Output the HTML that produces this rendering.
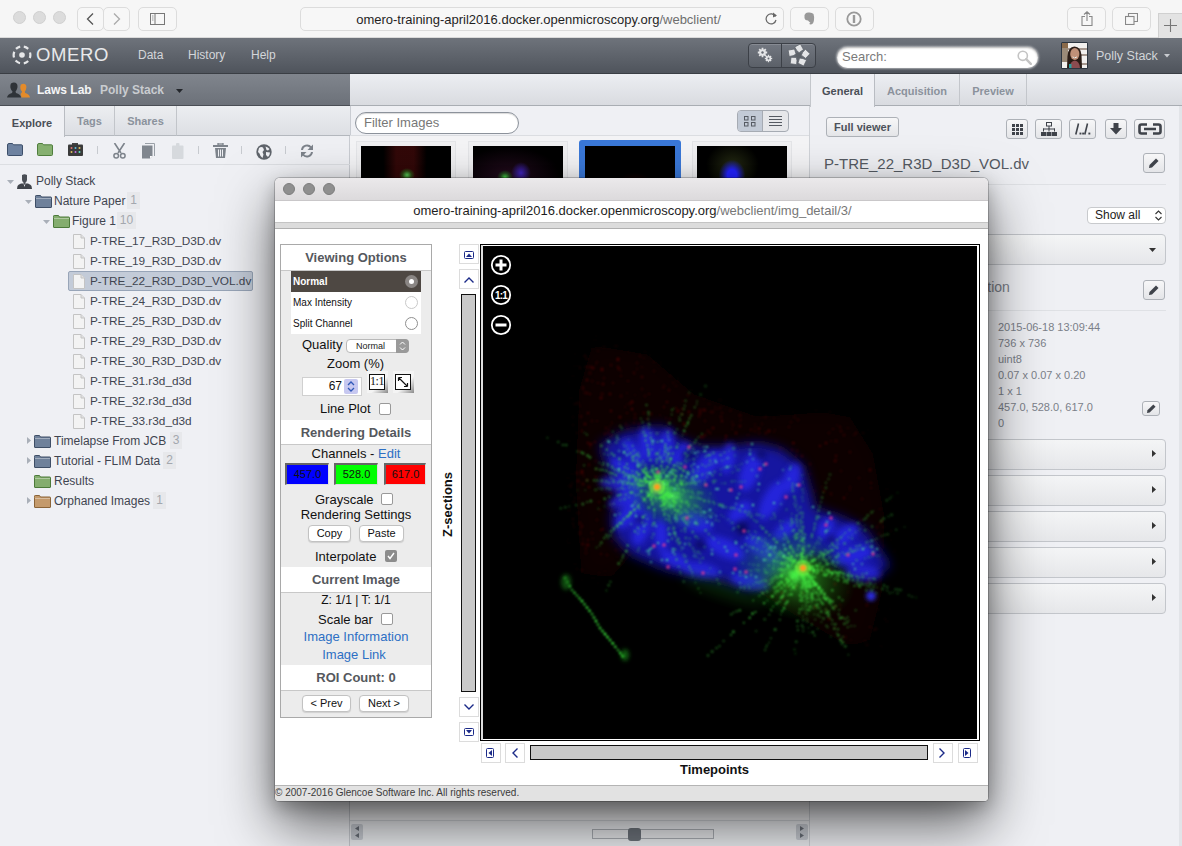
<!DOCTYPE html>
<html><head><meta charset="utf-8">
<style>
*{box-sizing:border-box;margin:0;padding:0}
html,body{width:1182px;height:846px;overflow:hidden;background:#eff0f4;font-family:"Liberation Sans",sans-serif;position:relative}
.a{position:absolute}
/* safari chrome */
#safari{left:0;top:0;width:1182px;height:38px;background:#f6f6f6;border-bottom:1px solid #dadada}
.tl{width:13px;height:13px;border-radius:50%;background:#dcdcdc;border:1px solid #d0d0d0}
.sbtn{border:1px solid #dcdcdc;border-radius:5px;background:#f7f7f7;height:24px}
/* omero header */
#hdr{left:0;top:38px;width:1182px;height:36px;background:linear-gradient(#6e737b,#4f545c);border-bottom:1px solid #3a3e44}
.nav{color:#d4d6da;font-size:12px;top:48px;line-height:15px}
/* lab bar */
#lab{left:0;top:74px;width:350px;height:32px;background:linear-gradient(#80858d,#6c7179);border-bottom:1px solid #4a4e55}
#cenhdr{left:350px;top:74px;width:460px;height:32px;background:linear-gradient(#eceef2,#d9dbe0);border-bottom:1px solid #a9adb3}
#righthdr{left:810px;top:74px;width:372px;height:32px;background:linear-gradient(#eceef2,#d9dbe0);border-bottom:1px solid #a9adb3}
/* left panel */
#left{left:0;top:106px;width:350px;height:741px;background:#eff0f4;border-right:1px solid #c9ccd2}
.ltab{top:106px;height:30px;font-size:11px;font-weight:bold;color:#8b929c;text-align:center;line-height:30px;background:linear-gradient(#eceef1,#dcdee3);border-right:1px solid #c2c5ca;border-bottom:1px solid #b5b9bf}
.tree{font-size:12.5px;color:#3a3f47;white-space:nowrap}
.cnt{color:#a0a4aa;background:#e6e7ea;padding:0 1px}
.file{width:12px;height:15px;background:#f7f7f7;border:1px solid #b8b8b8}
.fold{width:18px;height:13px;border-radius:1px}
</style></head><body>

<!-- SAFARI -->
<div id="safari" class="a"></div>
<div class="a tl" style="left:13px;top:11px"></div>
<div class="a tl" style="left:33px;top:11px"></div>
<div class="a tl" style="left:53px;top:11px"></div>
<div class="a sbtn" style="left:77px;top:7px;width:27px"></div>
<div class="a sbtn" style="left:103px;top:7px;width:27px"></div>
<svg class="a" style="left:86px;top:13px" width="8" height="12" viewBox="0 0 8 12"><path d="M7 0.5 L1.5 6 L7 11.5" fill="none" stroke="#555" stroke-width="1.3"/></svg>
<svg class="a" style="left:113px;top:13px" width="8" height="12" viewBox="0 0 8 12"><path d="M1 0.5 L6.5 6 L1 11.5" fill="none" stroke="#aaa" stroke-width="1.3"/></svg>
<div class="a sbtn" style="left:138px;top:7px;width:39px"></div>
<svg class="a" style="left:150px;top:13px" width="15" height="12" viewBox="0 0 15 12"><rect x="0.5" y="0.5" width="14" height="11" fill="none" stroke="#777" stroke-width="1"/><path d="M5 0.5 V11.5" stroke="#777"/><path d="M2 3 H3.5 M2 5 H3.5 M2 7 H3.5" stroke="#999"/></svg>
<div class="a sbtn" style="left:300px;top:7px;width:484px;text-align:center;font-size:13px;line-height:23px;color:#1f1f1f;padding-right:7px">omero-training-april2016.docker.openmicroscopy.org<span style="color:#6e6e6e">/webclient/</span></div>
<svg class="a" style="left:765px;top:12px" width="13" height="13" viewBox="0 0 13 13"><path d="M10.5 4.5 A5 5 0 1 0 11 8" fill="none" stroke="#666" stroke-width="1.2"/><path d="M8 0.5 L12 3.5 L8 5.5 Z" fill="#666"/></svg>
<div class="a sbtn" style="left:790px;top:7px;width:39px"></div>
<svg class="a" style="left:804px;top:12px" width="11" height="13" viewBox="0 0 11 13"><path d="M2 1 L4 0.5 Q8 0 9.5 2 Q10.5 5 10 8 Q9.5 12 7 12.5 Q5 12.5 5.5 11 L6.5 10.5 Q5 10 4 8.5 Q1 8.5 0.5 6 L0.5 3 Z" fill="#999"/></svg>
<div class="a sbtn" style="left:835px;top:7px;width:39px"></div>
<svg class="a" style="left:846px;top:11px" width="16" height="16" viewBox="0 0 16 16"><circle cx="8" cy="8" r="6.7" fill="none" stroke="#999" stroke-width="1.8"/><rect x="6.8" y="4" width="2.4" height="8" fill="#999"/></svg>
<div class="a sbtn" style="left:1067px;top:7px;width:39px"></div>
<svg class="a" style="left:1081px;top:11px" width="12" height="15" viewBox="0 0 12 15"><path d="M4 5.5 H1 V14.5 H11 V5.5 H8 M6 10 V1 M3 3.5 L6 0.8 L9 3.5" fill="none" stroke="#888" stroke-width="1.1"/></svg>
<div class="a sbtn" style="left:1112px;top:7px;width:39px"></div>
<svg class="a" style="left:1125px;top:13px" width="13" height="12" viewBox="0 0 13 12"><rect x="0.5" y="3.5" width="8.5" height="8" fill="none" stroke="#888" stroke-width="1.1"/><path d="M3.5 3.5 V0.5 H12.5 V8.5 H9" fill="none" stroke="#888" stroke-width="1.1"/></svg>
<div class="a" style="left:1158px;top:13px;width:24px;height:25px;background:#e3e3e3;border-left:1px solid #d0d0d0;border-top:1px solid #d0d0d0"></div>
<svg class="a" style="left:1164px;top:19px" width="13" height="13" viewBox="0 0 13 13"><path d="M6.5 0 V13 M0 6.5 H13" stroke="#777" stroke-width="1.1"/></svg>

<!-- OMERO HEADER -->
<div id="hdr" class="a"></div>
<svg class="a" style="left:12px;top:45px" width="20" height="20" viewBox="0 0 20 20"><circle cx="10" cy="10" r="2.8" fill="#e6e7e9"/><g fill="none" stroke="#e6e7e9" stroke-width="2.2"><path d="M8.2 1.7 A8.4 8.4 0 0 0 4 3.9"/><path d="M2.3 6.8 A8.4 8.4 0 0 0 2 12.5"/><path d="M3.6 15.6 A8.4 8.4 0 0 0 8 18.2"/><path d="M11.8 18.3 A8.4 8.4 0 0 0 16.2 16"/><path d="M17.8 13 A8.4 8.4 0 0 0 18 7.5"/><path d="M16.2 3.9 A8.4 8.4 0 0 0 11.8 1.7"/></g></svg>
<div class="a" style="left:36px;top:45px;font-size:18.5px;color:#e8e9eb;letter-spacing:0.6px;line-height:20px">OMERO</div>
<div class="a nav" style="left:138px">Data</div>
<div class="a nav" style="left:188px">History</div>
<div class="a nav" style="left:251px">Help</div>
<div class="a" style="left:748px;top:43px;width:68px;height:25px;border:1px solid #3c4047;border-radius:4px;background:linear-gradient(#727780,#5b6068);box-shadow:inset 0 1px 0 rgba(255,255,255,0.15)"></div>
<div class="a" style="left:781px;top:44px;width:1px;height:23px;background:#3c4047"></div>
<svg class="a" style="left:757px;top:47px" width="17" height="17" viewBox="0 0 17 17"><g fill="#e4e5e7"><circle cx="5.5" cy="5.5" r="3.3"/><circle cx="11.5" cy="11.5" r="2.6"/></g><g stroke="#e4e5e7" stroke-width="1.8"><path d="M5.5 0.8 V10.2 M0.8 5.5 H10.2 M2.2 2.2 L8.8 8.8 M8.8 2.2 L2.2 8.8"/><path d="M11.5 7.8 V15.2 M7.8 11.5 H15.2 M8.9 8.9 L14.1 14.1 M14.1 8.9 L8.9 14.1" stroke-width="1.4"/></g><circle cx="5.5" cy="5.5" r="1.2" fill="#666b73"/><circle cx="11.5" cy="11.5" r="1" fill="#666b73"/></svg>
<svg class="a" style="left:786px;top:44px" width="25" height="23" viewBox="0 0 25 23"><circle cx="12.5" cy="11.5" r="3" fill="#5d6269"/><g fill="#e4e5e7" stroke="#5d6269" stroke-width="0.8"><polygon points="14.4,-0.1 17.5,5.6 13.1,8.7 10.7,6.5 8.7,3.0"/><polygon points="24.1,9.7 19.6,14.4 15.3,11.2 16.7,8.2 19.4,5.2"/><polygon points="17.7,22.0 11.9,19.2 13.6,14.1 16.9,14.5 20.6,16.1"/><polygon points="4.2,19.7 5.0,13.3 10.4,13.4 11.0,16.6 10.6,20.6"/><polygon points="2.1,6.1 8.5,5.0 10.1,10.1 7.2,11.7 3.2,12.5"/></g></svg>
<div class="a" style="left:837px;top:47px;width:201px;height:21px;border-radius:11px;background:#fff;box-shadow:0 0 2px 1px rgba(255,255,255,0.5),inset 0 1px 2px rgba(0,0,0,0.3);font-size:13px;color:#7a7a7a;line-height:20px;padding-left:5px">Search:</div>
<svg class="a" style="left:1017px;top:50px" width="15" height="15" viewBox="0 0 15 15"><circle cx="5.8" cy="5.8" r="4.6" fill="none" stroke="#c4c4c4" stroke-width="1.6"/><path d="M9.2 9.2 L13.8 13.8" stroke="#c4c4c4" stroke-width="2.4" stroke-linecap="round"/></svg>
<svg class="a" style="left:1061px;top:42px" width="27" height="27" viewBox="0 0 27 27"><rect x="0" y="0" width="27" height="27" rx="1.5" fill="#2c3540"/><rect x="1" y="1" width="25" height="25" fill="#f2f0ee"/><rect x="1" y="1" width="6" height="5" fill="#8a6a4a"/><rect x="1" y="6" width="6" height="14" fill="#9a8a78"/><path d="M7 7 H26 M20 13 H26 M20 22 H26" stroke="#5a4030" stroke-width="1"/><path d="M6 26 L6.5 14 Q7 5 13.5 4.5 Q20 5 20.5 13 L21 26 Z" fill="#2a1c16"/><ellipse cx="13.8" cy="12" rx="4.6" ry="6" fill="#c09078"/><path d="M11.5 15 Q13.8 16.5 16 15" stroke="#f4eee8" stroke-width="1"/><path d="M8.5 26 Q9 19 13.8 18.5 Q18.5 19 19 26 Z" fill="#8a4c50"/><rect x="8" y="22" width="2.5" height="4" fill="#2aa0a0"/></svg>
<div class="a" style="left:1096px;top:48px;font-size:12.5px;color:#d2d5d9;line-height:16px">Polly Stack</div>
<svg class="a" style="left:1164px;top:54px" width="6" height="4" viewBox="0 0 6 4"><path d="M0 0 H6 L3 3.5 Z" fill="#c8cbd0"/></svg>

<!-- LAB BAR -->
<div id="lab" class="a"></div>
<svg class="a" style="left:7px;top:82px" width="24" height="16" viewBox="0 0 24 16"><path d="M4 1.5 Q7.5 -0.5 10 2 Q11 4.5 10 7 Q9 9 8.5 9.5 L9 11 Q13.5 12 14 15.5 L0 15.5 Q0.5 12 5 11 L5.5 9.5 Q4 8 3.5 6 Q3 3 4 1.5 Z" fill="#2f3338"/><path d="M14 2.5 Q17 1 19 3 Q20 5.5 19 7.5 Q18.3 9 17.8 9.5 L18.2 11 Q22.5 12 23 15.5 L14.5 15.5 Q14 12.5 13.5 12 L14.5 11 L15 9.5 Q13.8 8.5 13.4 6.5 Q13 4 14 2.5 Z" fill="#e48b2a"/></svg>
<div class="a" style="left:37px;top:83px;font-size:12px;font-weight:bold;color:#f4f5f6;line-height:15px">Laws Lab</div>
<svg class="a" style="left:176px;top:89px" width="7" height="4" viewBox="0 0 7 4"><path d="M0 0 H7 L3.5 4 Z" fill="#23262b"/></svg>
<div class="a" style="left:100px;top:83px;font-size:12px;font-weight:bold;color:#c9ccd0;line-height:15px">Polly Stack</div>
<div id="cenhdr" class="a"></div>
<div id="righthdr" class="a"></div>
<div class="a" style="left:810px;top:106px;width:372px;height:741px;background:#eff0f4"></div>
<div class="a" style="left:1179px;top:106px;width:3px;height:741px;background:#e2e4e8"></div>
<div class="a" style="left:810px;top:105px;width:372px;height:1px;background:#a9adb3"></div>
<div class="a" style="left:810px;top:74px;width:65px;height:33px;background:#eff0f4;border-left:1px solid #c3c6cb;border-right:1px solid #b9bcc2;font-size:11px;font-weight:bold;color:#4a4f57;text-align:center;line-height:35px">General</div>
<div class="a" style="left:875px;top:74px;width:85px;height:32px;border-right:1px solid #c3c6cb;font-size:11px;font-weight:bold;color:#8b929c;text-align:center;line-height:35px">Acquisition</div>
<div class="a" style="left:960px;top:74px;width:67px;height:32px;border-right:1px solid #c3c6cb;font-size:11px;font-weight:bold;color:#8b929c;text-align:center;line-height:35px">Preview</div>
<div class="a" style="left:826px;top:117px;width:73px;height:20px;background:linear-gradient(#f7f7f8,#e4e5e8);border:1px solid #adb1b7;border-radius:3px;font-size:11px;font-weight:bold;color:#4d525a;text-align:center;line-height:18px">Full viewer</div>
<div class="a" style="left:1006px;top:119px;width:22px;height:20px;background:linear-gradient(#f7f7f8,#e4e5e8);border:1px solid #adb1b7;border-radius:3px;"></div>
<div class="a" style="left:1035px;top:119px;width:27px;height:20px;background:linear-gradient(#f7f7f8,#e4e5e8);border:1px solid #adb1b7;border-radius:3px;"></div>
<div class="a" style="left:1069px;top:119px;width:27px;height:20px;background:linear-gradient(#f7f7f8,#e4e5e8);border:1px solid #adb1b7;border-radius:3px;"></div>
<div class="a" style="left:1105px;top:119px;width:22px;height:20px;background:linear-gradient(#f7f7f8,#e4e5e8);border:1px solid #adb1b7;border-radius:3px;"></div>
<div class="a" style="left:1134px;top:119px;width:31px;height:20px;background:linear-gradient(#f7f7f8,#e4e5e8);border:1px solid #adb1b7;border-radius:3px;"></div>
<svg class="a" style="left:1012px;top:124px" width="11" height="11" viewBox="0 0 11 11" shape-rendering="crispEdges"><g fill="#3f434a"><rect x="0" y="0" width="3" height="3"/><rect x="0" y="4" width="3" height="3"/><rect x="0" y="8" width="3" height="3"/><rect x="4" y="0" width="3" height="3"/><rect x="4" y="4" width="3" height="3"/><rect x="4" y="8" width="3" height="3"/><rect x="8" y="0" width="3" height="3"/><rect x="8" y="4" width="3" height="3"/><rect x="8" y="8" width="3" height="3"/></g></svg>
<svg class="a" style="left:1041px;top:122px" width="16" height="14" viewBox="0 0 16 14"><g fill="#3f434a"><rect x="5.5" y="0.5" width="5" height="3.5" fill="none" stroke="#3f434a" stroke-width="1"/><rect x="7.5" y="4" width="1" height="3"/><rect x="2" y="6.5" width="12" height="1"/><rect x="2" y="6.5" width="1" height="3"/><rect x="13" y="6.5" width="1" height="3"/><rect x="7.5" y="6.5" width="1" height="3"/><rect x="0" y="10" width="5" height="4"/><rect x="5.5" y="10" width="5" height="4"/><rect x="11" y="10" width="5" height="4"/></g></svg>
<svg class="a" style="left:1075px;top:123px" width="16" height="12" viewBox="0 0 16 12"><g stroke="#3f434a" stroke-width="1.6"><path d="M3.5 0.5 L0.8 11.5"/><path d="M12.5 0.5 L9.8 11.5"/></g><g fill="#3f434a"><rect x="4.5" y="9.6" width="1.9" height="1.9"/><rect x="7.2" y="9.6" width="1.9" height="1.9"/><rect x="13.4" y="9.6" width="1.9" height="1.9"/></g></svg>
<svg class="a" style="left:1110px;top:123px" width="12" height="12" viewBox="0 0 12 12"><path d="M3.5 0 H8.5 V5 H12 L6 11.5 L0 5 H3.5 Z" fill="#3f434a"/></svg>
<svg class="a" style="left:1138px;top:123px" width="24" height="12" viewBox="0 0 24 12"><path d="M9 1.5 H3.5 Q1.5 1.5 1.5 3.5 V8.5 Q1.5 10.5 3.5 10.5 H9 M15 1.5 H20.5 Q22.5 1.5 22.5 3.5 V8.5 Q22.5 10.5 20.5 10.5 H15 M6 6 H18" fill="none" stroke="#3f434a" stroke-width="2.6"/></svg>
<div class="a" style="left:824px;top:155px;font-size:15px;color:#555a62;line-height:18px;white-space:nowrap">P-TRE_22_R3D_D3D_VOL.dv</div>
<div class="a" style="left:1143px;top:153px;width:22px;height:20px;background:linear-gradient(#f7f7f8,#e4e5e8);border:1px solid #adb1b7;border-radius:3px;"></div>
<svg class="a" style="left:1149px;top:158px" width="10" height="10" viewBox="0 0 10 10"><path d="M7 0.5 L9.5 3 L3 9.5 L0 10 L0.5 7 Z" fill="#3f434a"/></svg>
<div class="a" style="left:824px;top:184px;width:342px;height:1px;background:#dfe1e5"></div>
<div class="a" style="left:1087px;top:207px;width:79px;height:17px;background:#fff;border:1px solid #c8cacd;border-radius:4px;font-size:12px;color:#222;line-height:15px;padding-left:7px">Show all</div>
<svg class="a" style="left:1155px;top:210px" width="7" height="11" viewBox="0 0 7 11"><path d="M0.5 4 L3.5 1 L6.5 4 M0.5 7 L3.5 10 L6.5 7" fill="none" stroke="#333" stroke-width="1.1"/></svg>
<div class="a" style="left:820px;top:234px;width:346px;height:31px;background:linear-gradient(#f4f5f6,#e6e7ea);border:1px solid #c3c6cb;border-radius:4px"></div>
<svg class="a" style="left:1149px;top:248px" width="7" height="4" viewBox="0 0 7 4"><path d="M0 0 H7 L3.5 4 Z" fill="#333"/></svg>
<div class="a" style="left:827px;top:279px;font-size:14px;color:#7b8089;line-height:17px;white-space:nowrap">Image Details and Annotation</div>
<div class="a" style="left:1143px;top:280px;width:22px;height:20px;background:linear-gradient(#f7f7f8,#e4e5e8);border:1px solid #adb1b7;border-radius:3px;"></div>
<svg class="a" style="left:1149px;top:285px" width="10" height="10" viewBox="0 0 10 10"><path d="M7 0.5 L9.5 3 L3 9.5 L0 10 L0.5 7 Z" fill="#3f434a"/></svg>
<div class="a" style="left:824px;top:310px;width:342px;height:1px;background:#dfe1e5"></div>
<div class="a" style="left:998px;top:320px;font-size:11px;color:#7b8089;line-height:14px;white-space:nowrap">2015-06-18 13:09:44</div>
<div class="a" style="left:998px;top:336px;font-size:11px;color:#7b8089;line-height:14px;white-space:nowrap">736 x 736</div>
<div class="a" style="left:998px;top:352px;font-size:11px;color:#7b8089;line-height:14px;white-space:nowrap">uint8</div>
<div class="a" style="left:998px;top:368px;font-size:11px;color:#7b8089;line-height:14px;white-space:nowrap">0.07 x 0.07 x 0.20</div>
<div class="a" style="left:998px;top:384px;font-size:11px;color:#7b8089;line-height:14px;white-space:nowrap">1 x 1</div>
<div class="a" style="left:998px;top:400px;font-size:11px;color:#7b8089;line-height:14px;white-space:nowrap">457.0, 528.0, 617.0</div>
<div class="a" style="left:998px;top:416px;font-size:11px;color:#7b8089;line-height:14px;white-space:nowrap">0</div>
<div class="a" style="left:1142px;top:401px;width:18px;height:15px;background:linear-gradient(#f7f7f8,#e4e5e8);border:1px solid #adb1b7;border-radius:3px;"></div>
<svg class="a" style="left:1147px;top:404px" width="9" height="9" viewBox="0 0 10 10"><path d="M7 0.5 L9.5 3 L3 9.5 L0 10 L0.5 7 Z" fill="#3f434a"/></svg>
<div class="a" style="left:820px;top:439px;width:346px;height:31px;background:linear-gradient(#f4f5f6,#e6e7ea);border:1px solid #c3c6cb;border-radius:4px"></div>
<svg class="a" style="left:1152px;top:450px" width="4" height="7" viewBox="0 0 4 7"><path d="M0 0 L4 3.5 L0 7 Z" fill="#333"/></svg>
<div class="a" style="left:820px;top:475px;width:346px;height:31px;background:linear-gradient(#f4f5f6,#e6e7ea);border:1px solid #c3c6cb;border-radius:4px"></div>
<svg class="a" style="left:1152px;top:486px" width="4" height="7" viewBox="0 0 4 7"><path d="M0 0 L4 3.5 L0 7 Z" fill="#333"/></svg>
<div class="a" style="left:820px;top:511px;width:346px;height:31px;background:linear-gradient(#f4f5f6,#e6e7ea);border:1px solid #c3c6cb;border-radius:4px"></div>
<svg class="a" style="left:1152px;top:522px" width="4" height="7" viewBox="0 0 4 7"><path d="M0 0 L4 3.5 L0 7 Z" fill="#333"/></svg>
<div class="a" style="left:820px;top:547px;width:346px;height:31px;background:linear-gradient(#f4f5f6,#e6e7ea);border:1px solid #c3c6cb;border-radius:4px"></div>
<svg class="a" style="left:1152px;top:558px" width="4" height="7" viewBox="0 0 4 7"><path d="M0 0 L4 3.5 L0 7 Z" fill="#333"/></svg>
<div class="a" style="left:820px;top:583px;width:346px;height:31px;background:linear-gradient(#f4f5f6,#e6e7ea);border:1px solid #c3c6cb;border-radius:4px"></div>
<svg class="a" style="left:1152px;top:594px" width="4" height="7" viewBox="0 0 4 7"><path d="M0 0 L4 3.5 L0 7 Z" fill="#333"/></svg>

<div class="a" style="left:350px;top:106px;width:460px;height:741px;background:#eff0f4;border-left:1px solid #c9ccd2"></div>
<div class="a" style="left:350px;top:135px;width:460px;height:711px;background:#f4f4f6;border-top:1px solid #dcdee2"></div>
<div class="a" style="left:809px;top:106px;width:1px;height:741px;background:#d0d3d8"></div>
<div class="a" style="left:355px;top:112px;width:164px;height:22px;border:1px solid #8c929b;border-radius:11px;background:#fff;box-shadow:inset 0 1px 1px rgba(0,0,0,0.15);font-size:13px;color:#777;line-height:20px;padding-left:8px">Filter Images</div>
<div class="a" style="left:737px;top:110px;width:52px;height:22px;border:1px solid #a6abb3;border-radius:4px;background:#e6e7ea;overflow:hidden"><div class="a" style="left:0;top:0;width:25px;height:20px;background:#c2cad6;border-right:1px solid #a6abb3"></div></div>
<svg class="a" style="left:744px;top:116px" width="12" height="11" viewBox="0 0 12 11"><rect x="0.5" y="0.5" width="3.5" height="3.5" fill="none" stroke="#555a62"/><rect x="7.5" y="0.5" width="3.5" height="3.5" fill="none" stroke="#555a62"/><rect x="0.5" y="6.5" width="3.5" height="3.5" fill="none" stroke="#555a62"/><rect x="7.5" y="6.5" width="3.5" height="3.5" fill="none" stroke="#555a62"/></svg>
<svg class="a" style="left:769px;top:116px" width="13" height="11" viewBox="0 0 13 11"><path d="M0 0.5 H13 M0 3.5 H13 M0 6.5 H13 M0 9.5 H13" stroke="#555a62" stroke-width="1"/></svg>
<div class="a" style="left:356px;top:141px;width:100px;height:60px;background:#f0f0f2;border:1px solid #e4e5e8"></div>
<div class="a" style="left:361px;top:146px;width:90px;height:50px;background:#000;overflow:hidden"><div class="a" style="left:22px;top:0;width:44px;height:50px;background:linear-gradient(90deg,transparent,rgba(90,15,15,0.55) 30%,rgba(90,15,15,0.55) 70%,transparent)"></div><div class="a" style="left:38px;top:22px;width:16px;height:14px;background:radial-gradient(#5c5,rgba(40,160,40,0.4) 40%,transparent 70%)"></div></div>
<div class="a" style="left:468px;top:141px;width:100px;height:60px;background:#f0f0f2;border:1px solid #e4e5e8"></div>
<div class="a" style="left:473px;top:146px;width:90px;height:50px;background:#000;overflow:hidden"><div class="a" style="left:0;top:0;width:90px;height:50px;background:radial-gradient(ellipse at 40% 60%,rgba(60,20,50,0.6),transparent 70%)"></div><div class="a" style="left:24px;top:24px;width:16px;height:14px;background:radial-gradient(#4c4,rgba(40,160,40,0.4) 40%,transparent 70%)"></div><div class="a" style="left:38px;top:16px;width:20px;height:22px;background:radial-gradient(rgba(70,40,220,0.85),transparent 70%)"></div></div>
<div class="a" style="left:579px;top:140px;width:102px;height:60px;background:#3a78d8;border-radius:3px"></div>
<div class="a" style="left:585px;top:146px;width:90px;height:50px;background:#000;overflow:hidden"><div class="a" style="left:30px;top:25px;width:40px;height:30px;background:radial-gradient(rgba(60,10,10,0.45),transparent 70%)"></div></div>
<div class="a" style="left:692px;top:141px;width:100px;height:60px;background:#f0f0f2;border:1px solid #e4e5e8"></div>
<div class="a" style="left:697px;top:146px;width:90px;height:50px;background:#000;overflow:hidden"><div class="a" style="left:8px;top:-5px;width:55px;height:50px;background:radial-gradient(ellipse,rgba(60,70,30,0.6),transparent 70%)"></div><div class="a" style="left:22px;top:14px;width:26px;height:30px;background:radial-gradient(ellipse,#22f 25%,rgba(30,30,220,0.5) 50%,transparent 72%)"></div></div>
<div class="a" style="left:350px;top:820px;width:459px;height:26px;background:#eceef1;border-top:1px solid #d5d8dc"></div>
<div class="a" style="left:351px;top:824px;width:12px;height:16px;background:#c8ccd3;border-radius:2px"></div>
<svg class="a" style="left:353px;top:826px" width="8" height="12" viewBox="0 0 8 12"><path d="M6 0 L2 2.5 L6 5 Z M6 7 L2 9.5 L6 12 Z" fill="#6a7079"/></svg>
<div class="a" style="left:796px;top:824px;width:12px;height:16px;background:#c8ccd3;border-radius:2px"></div>
<svg class="a" style="left:798px;top:826px" width="8" height="12" viewBox="0 0 8 12"><path d="M2 0 L6 2.5 L2 5 Z M2 7 L6 9.5 L2 12 Z" fill="#6a7079"/></svg>
<div class="a" style="left:592px;top:829px;width:122px;height:10px;background:#e8e9ec;border:1px solid #a9adb3"></div>
<div class="a" style="left:628px;top:828px;width:13px;height:13px;background:#6d737b;border-radius:3px"></div>
<!-- LEFT PANEL -->
<div id="left" class="a"></div>
<div class="a" style="left:0;top:106px;width:350px;height:30px;background:linear-gradient(#eceef1,#dddfe4);border-bottom:1px solid #b4b8be"></div>
<div class="a" style="left:0;top:106px;width:65px;height:31px;background:#eff0f4;border-right:1px solid #b9bcc2;font-size:11px;font-weight:bold;color:#4a4f57;text-align:center;line-height:34px">Explore</div>
<div class="a ltab" style="left:65px;width:50px">Tags</div>
<div class="a ltab" style="left:115px;width:62px">Shares</div>
<div class="a" style="left:0;top:164px;width:350px;height:1px;background:#dcdee2"></div>

<svg class="a" style="left:7px;top:143px" width="16" height="13" viewBox="0 0 16 13"><path d="M0.5 2 Q0.5 0.5 2 0.5 L5.5 0.5 L6.5 1.8 L14.5 1.8 Q15.5 1.8 15.5 3 L15.5 11.5 Q15.5 12.5 14.5 12.5 L1.5 12.5 Q0.5 12.5 0.5 11.5 Z" fill="#6e82a0" stroke="#3d4f6a"/></svg>
<svg class="a" style="left:37px;top:143px" width="16" height="13" viewBox="0 0 16 13"><path d="M0.5 2 Q0.5 0.5 2 0.5 L5.5 0.5 L6.5 1.8 L14.5 1.8 Q15.5 1.8 15.5 3 L15.5 11.5 Q15.5 12.5 14.5 12.5 L1.5 12.5 Q0.5 12.5 0.5 11.5 Z" fill="#86b070" stroke="#4f7e3d"/></svg>
<svg class="a" style="left:68px;top:143px" width="15" height="13" viewBox="0 0 15 13"><rect x="4" y="0" width="6" height="2" fill="#444"/><rect x="0" y="1.5" width="15" height="11.5" rx="1" fill="#3a3a3a"/><circle cx="3.5" cy="5" r="1" fill="#e07070"/><circle cx="7.5" cy="5" r="1" fill="#60c0e0"/><circle cx="11.5" cy="5" r="1" fill="#e0c060"/><circle cx="3.5" cy="9" r="1" fill="#e0c060"/><circle cx="7.5" cy="9" r="1" fill="#c070e0"/><circle cx="11.5" cy="9" r="1" fill="#60e0c0"/></svg>
<div class="a" style="left:97px;top:146px;width:1px;height:8px;background:#c7cacf"></div>
<div class="a" style="left:198px;top:146px;width:1px;height:8px;background:#c7cacf"></div>
<div class="a" style="left:241px;top:146px;width:1px;height:8px;background:#c7cacf"></div>
<div class="a" style="left:285px;top:146px;width:1px;height:8px;background:#c7cacf"></div>
<svg class="a" style="left:113px;top:143px" width="13" height="16" viewBox="0 0 13 16"><path d="M1.5 0 L8 10 M11.5 0 L5 10" stroke="#7d838b" stroke-width="1.6"/><circle cx="3.2" cy="12.8" r="2.3" fill="none" stroke="#7d838b" stroke-width="1.5"/><circle cx="9.8" cy="12.8" r="2.3" fill="none" stroke="#7d838b" stroke-width="1.5"/></svg>
<svg class="a" style="left:142px;top:143px" width="13" height="16" viewBox="0 0 13 16"><path d="M3 0.5 L12.5 0.5 L12.5 13" fill="none" stroke="#9aa0a7" stroke-width="1"/><path d="M0 2.5 L10.5 2.5 L10.5 13 L8 15.5 L0 15.5 Z" fill="#80868e"/><path d="M8 15.5 L8 13 L10.5 13 Z" fill="#fff"/></svg>
<svg class="a" style="left:172px;top:143px" width="12" height="16" viewBox="0 0 12 16"><rect x="0" y="2.5" width="11.5" height="13.5" rx="1" fill="#d6d9dd"/><rect x="4" y="0" width="3.5" height="3.5" rx="1" fill="#d6d9dd"/></svg>
<svg class="a" style="left:213px;top:143px" width="15" height="15" viewBox="0 0 15 15"><rect x="5" y="0" width="5" height="2" fill="none" stroke="#7d838b" stroke-width="1.3"/><rect x="0" y="2" width="15" height="2" fill="#7d838b"/><path d="M2 5 L13 5 L12 15 L3 15 Z" fill="#7d838b"/><path d="M5.5 6.5 L5.5 13.5 M7.5 6.5 L7.5 13.5 M9.5 6.5 L9.5 13.5" stroke="#eff0f4" stroke-width="1"/></svg>
<svg class="a" style="left:256px;top:144px" width="16" height="16" viewBox="0 0 16 16"><circle cx="8" cy="8" r="7.7" fill="#5f646b"/><path d="M3 4 Q5 2.5 7 3.5 L8 6 L6.5 8 L7.5 10.5 L6.5 14 Q4 12 3.5 9.5 L2 8 Z M9.5 2.5 Q12 3 13.5 5 L12 6.5 L10.5 6 Z M10 8 L14 8.5 Q14 11 12 13 L10 11 Z" fill="#eff0f4"/></svg>
<svg class="a" style="left:300px;top:144px" width="14" height="14" viewBox="0 0 14 14"><path d="M2 6 A5 5 0 0 1 11 3.5" fill="none" stroke="#7d838b" stroke-width="2"/><path d="M13 0.5 L13 6 L7.5 6 Z" fill="#7d838b"/><path d="M12 8 A5 5 0 0 1 3 10.5" fill="none" stroke="#7d838b" stroke-width="2"/><path d="M1 13.5 L1 8 L6.5 8 Z" fill="#7d838b"/></svg>
<svg class="a" style="left:7px;top:180px" width="7" height="4" viewBox="0 0 7 4"><path d="M0 0 L7 0 L3.5 4 Z" fill="#a9afb8"/></svg>
<svg class="a" style="left:17px;top:174px" width="15" height="15" viewBox="0 0 15 15"><path d="M5 1 Q7.5 -0.5 10 1 L10 6 Q9.5 8 8.5 8.5 L8.5 9.5 L7.5 11 L6.5 9.5 L6.5 8.5 Q5.5 8 5 6 Z" fill="#4a4e55"/><path d="M0 15 L0.5 12 Q1 10.5 4 9.5 L6.5 9.5 L7.5 13 L8.5 9.5 L11 9.5 Q14 10.5 14.5 12 L15 15 Z" fill="#3f434a"/></svg>
<div class="a tree" style="left:36px;top:173px;font-size:12px;line-height:16px;color:#3f4550;">Polly Stack</div>
<svg class="a" style="left:25px;top:200px" width="7" height="4" viewBox="0 0 7 4"><path d="M0 0 L7 0 L3.5 4 Z" fill="#a9afb8"/></svg>
<svg class="a" style="left:35px;top:195px" width="17" height="13" viewBox="0 0 17 13"><path d="M0.5 2.5 L0.5 1.2 Q0.5 0.5 1.2 0.5 L5.5 0.5 L6.5 2 L15.8 2 Q16.5 2 16.5 2.7 L16.5 12 Q16.5 12.5 16 12.5 L1 12.5 Q0.5 12.5 0.5 12 Z" fill="#6f819b" stroke="#3e4e66" stroke-width="1"/><path d="M1 3.5 L16 3.5" stroke="rgba(255,255,255,0.35)" stroke-width="1"/></svg>
<div class="a tree" style="left:54px;top:193px;font-size:12px;line-height:16px;color:#3f4550;">Nature Paper</div>
<div class="a" style="left:127px;top:192px;width:13px;height:17px;background:#e7e8eb;color:#a3a7ae;font-size:12px;line-height:17px;text-align:center">1</div>
<svg class="a" style="left:43px;top:220px" width="7" height="4" viewBox="0 0 7 4"><path d="M0 0 L7 0 L3.5 4 Z" fill="#a9afb8"/></svg>
<svg class="a" style="left:53px;top:215px" width="17" height="13" viewBox="0 0 17 13"><path d="M0.5 2.5 L0.5 1.2 Q0.5 0.5 1.2 0.5 L5.5 0.5 L6.5 2 L15.8 2 Q16.5 2 16.5 2.7 L16.5 12 Q16.5 12.5 16 12.5 L1 12.5 Q0.5 12.5 0.5 12 Z" fill="#84ad6e" stroke="#4c7a3a" stroke-width="1"/><path d="M1 3.5 L16 3.5" stroke="rgba(255,255,255,0.35)" stroke-width="1"/></svg>
<div class="a tree" style="left:72px;top:213px;font-size:12px;line-height:16px;color:#3f4550;">Figure 1</div>
<div class="a" style="left:117px;top:212px;width:19px;height:17px;background:#e7e8eb;color:#a3a7ae;font-size:12px;line-height:17px;text-align:center">10</div>
<svg class="a" style="left:73px;top:234px" width="12" height="15" viewBox="0 0 12 15"><path d="M0.5 0.5 L8 0.5 L11.5 4 L11.5 14.5 L0.5 14.5 Z" fill="#f3f3f3" stroke="#c4c4c4"/><path d="M8 0.5 L8 4 L11.5 4" fill="#e0e0e0" stroke="#c4c4c4"/></svg>
<div class="a tree" style="left:90px;top:233px;font-size:11.8px;line-height:16px;color:#3f4550;">P-TRE_17_R3D_D3D.dv</div>
<svg class="a" style="left:73px;top:254px" width="12" height="15" viewBox="0 0 12 15"><path d="M0.5 0.5 L8 0.5 L11.5 4 L11.5 14.5 L0.5 14.5 Z" fill="#f3f3f3" stroke="#c4c4c4"/><path d="M8 0.5 L8 4 L11.5 4" fill="#e0e0e0" stroke="#c4c4c4"/></svg>
<div class="a tree" style="left:90px;top:253px;font-size:11.8px;line-height:16px;color:#3f4550;">P-TRE_19_R3D_D3D.dv</div>
<div class="a" style="left:68px;top:271px;width:185px;height:20px;background:#c3cbd8;border:1px solid #98a5b8;border-radius:2px"></div>
<svg class="a" style="left:73px;top:274px" width="12" height="15" viewBox="0 0 12 15"><path d="M0.5 0.5 L8 0.5 L11.5 4 L11.5 14.5 L0.5 14.5 Z" fill="#f3f3f3" stroke="#c4c4c4"/><path d="M8 0.5 L8 4 L11.5 4" fill="#e0e0e0" stroke="#c4c4c4"/></svg>
<div class="a tree" style="left:90px;top:273px;font-size:11.8px;line-height:16px;color:#3f4550;">P-TRE_22_R3D_D3D_VOL.dv</div>
<svg class="a" style="left:73px;top:294px" width="12" height="15" viewBox="0 0 12 15"><path d="M0.5 0.5 L8 0.5 L11.5 4 L11.5 14.5 L0.5 14.5 Z" fill="#f3f3f3" stroke="#c4c4c4"/><path d="M8 0.5 L8 4 L11.5 4" fill="#e0e0e0" stroke="#c4c4c4"/></svg>
<div class="a tree" style="left:90px;top:293px;font-size:11.8px;line-height:16px;color:#3f4550;">P-TRE_24_R3D_D3D.dv</div>
<svg class="a" style="left:73px;top:314px" width="12" height="15" viewBox="0 0 12 15"><path d="M0.5 0.5 L8 0.5 L11.5 4 L11.5 14.5 L0.5 14.5 Z" fill="#f3f3f3" stroke="#c4c4c4"/><path d="M8 0.5 L8 4 L11.5 4" fill="#e0e0e0" stroke="#c4c4c4"/></svg>
<div class="a tree" style="left:90px;top:313px;font-size:11.8px;line-height:16px;color:#3f4550;">P-TRE_25_R3D_D3D.dv</div>
<svg class="a" style="left:73px;top:334px" width="12" height="15" viewBox="0 0 12 15"><path d="M0.5 0.5 L8 0.5 L11.5 4 L11.5 14.5 L0.5 14.5 Z" fill="#f3f3f3" stroke="#c4c4c4"/><path d="M8 0.5 L8 4 L11.5 4" fill="#e0e0e0" stroke="#c4c4c4"/></svg>
<div class="a tree" style="left:90px;top:333px;font-size:11.8px;line-height:16px;color:#3f4550;">P-TRE_29_R3D_D3D.dv</div>
<svg class="a" style="left:73px;top:354px" width="12" height="15" viewBox="0 0 12 15"><path d="M0.5 0.5 L8 0.5 L11.5 4 L11.5 14.5 L0.5 14.5 Z" fill="#f3f3f3" stroke="#c4c4c4"/><path d="M8 0.5 L8 4 L11.5 4" fill="#e0e0e0" stroke="#c4c4c4"/></svg>
<div class="a tree" style="left:90px;top:353px;font-size:11.8px;line-height:16px;color:#3f4550;">P-TRE_30_R3D_D3D.dv</div>
<svg class="a" style="left:73px;top:374px" width="12" height="15" viewBox="0 0 12 15"><path d="M0.5 0.5 L8 0.5 L11.5 4 L11.5 14.5 L0.5 14.5 Z" fill="#f3f3f3" stroke="#c4c4c4"/><path d="M8 0.5 L8 4 L11.5 4" fill="#e0e0e0" stroke="#c4c4c4"/></svg>
<div class="a tree" style="left:90px;top:373px;font-size:11.8px;line-height:16px;color:#3f4550;">P-TRE_31.r3d_d3d</div>
<svg class="a" style="left:73px;top:394px" width="12" height="15" viewBox="0 0 12 15"><path d="M0.5 0.5 L8 0.5 L11.5 4 L11.5 14.5 L0.5 14.5 Z" fill="#f3f3f3" stroke="#c4c4c4"/><path d="M8 0.5 L8 4 L11.5 4" fill="#e0e0e0" stroke="#c4c4c4"/></svg>
<div class="a tree" style="left:90px;top:393px;font-size:11.8px;line-height:16px;color:#3f4550;">P-TRE_32.r3d_d3d</div>
<svg class="a" style="left:73px;top:414px" width="12" height="15" viewBox="0 0 12 15"><path d="M0.5 0.5 L8 0.5 L11.5 4 L11.5 14.5 L0.5 14.5 Z" fill="#f3f3f3" stroke="#c4c4c4"/><path d="M8 0.5 L8 4 L11.5 4" fill="#e0e0e0" stroke="#c4c4c4"/></svg>
<div class="a tree" style="left:90px;top:413px;font-size:11.8px;line-height:16px;color:#3f4550;">P-TRE_33.r3d_d3d</div>
<svg class="a" style="left:27px;top:437px" width="4" height="7" viewBox="0 0 4 7"><path d="M0 0 L4 3.5 L0 7 Z" fill="#a9afb8"/></svg>
<svg class="a" style="left:34px;top:435px" width="17" height="13" viewBox="0 0 17 13"><path d="M0.5 2.5 L0.5 1.2 Q0.5 0.5 1.2 0.5 L5.5 0.5 L6.5 2 L15.8 2 Q16.5 2 16.5 2.7 L16.5 12 Q16.5 12.5 16 12.5 L1 12.5 Q0.5 12.5 0.5 12 Z" fill="#6f819b" stroke="#3e4e66" stroke-width="1"/><path d="M1 3.5 L16 3.5" stroke="rgba(255,255,255,0.35)" stroke-width="1"/></svg>
<div class="a tree" style="left:54px;top:433px;font-size:12px;line-height:16px;color:#3f4550;">Timelapse From JCB</div>
<div class="a" style="left:170px;top:432px;width:12px;height:17px;background:#e7e8eb;color:#a3a7ae;font-size:12px;line-height:17px;text-align:center">3</div>
<svg class="a" style="left:27px;top:457px" width="4" height="7" viewBox="0 0 4 7"><path d="M0 0 L4 3.5 L0 7 Z" fill="#a9afb8"/></svg>
<svg class="a" style="left:34px;top:455px" width="17" height="13" viewBox="0 0 17 13"><path d="M0.5 2.5 L0.5 1.2 Q0.5 0.5 1.2 0.5 L5.5 0.5 L6.5 2 L15.8 2 Q16.5 2 16.5 2.7 L16.5 12 Q16.5 12.5 16 12.5 L1 12.5 Q0.5 12.5 0.5 12 Z" fill="#6f819b" stroke="#3e4e66" stroke-width="1"/><path d="M1 3.5 L16 3.5" stroke="rgba(255,255,255,0.35)" stroke-width="1"/></svg>
<div class="a tree" style="left:54px;top:453px;font-size:12px;line-height:16px;color:#3f4550;">Tutorial - FLIM Data</div>
<div class="a" style="left:163px;top:452px;width:13px;height:17px;background:#e7e8eb;color:#a3a7ae;font-size:12px;line-height:17px;text-align:center">2</div>
<svg class="a" style="left:34px;top:475px" width="17" height="13" viewBox="0 0 17 13"><path d="M0.5 2.5 L0.5 1.2 Q0.5 0.5 1.2 0.5 L5.5 0.5 L6.5 2 L15.8 2 Q16.5 2 16.5 2.7 L16.5 12 Q16.5 12.5 16 12.5 L1 12.5 Q0.5 12.5 0.5 12 Z" fill="#84ad6e" stroke="#4c7a3a" stroke-width="1"/><path d="M1 3.5 L16 3.5" stroke="rgba(255,255,255,0.35)" stroke-width="1"/></svg>
<div class="a tree" style="left:54px;top:473px;font-size:12px;line-height:16px;color:#3f4550;">Results</div>
<svg class="a" style="left:27px;top:497px" width="4" height="7" viewBox="0 0 4 7"><path d="M0 0 L4 3.5 L0 7 Z" fill="#a9afb8"/></svg>
<svg class="a" style="left:34px;top:495px" width="17" height="13" viewBox="0 0 17 13"><path d="M0.5 2.5 L0.5 1.2 Q0.5 0.5 1.2 0.5 L5.5 0.5 L6.5 2 L15.8 2 Q16.5 2 16.5 2.7 L16.5 12 Q16.5 12.5 16 12.5 L1 12.5 Q0.5 12.5 0.5 12 Z" fill="#c49a6c" stroke="#8b6438" stroke-width="1"/><path d="M1 3.5 L16 3.5" stroke="rgba(255,255,255,0.35)" stroke-width="1"/></svg>
<div class="a tree" style="left:54px;top:493px;font-size:12px;line-height:16px;color:#3f4550;">Orphaned Images</div>
<div class="a" style="left:153px;top:492px;width:13px;height:17px;background:#e7e8eb;color:#a3a7ae;font-size:12px;line-height:17px;text-align:center">1</div>
<!-- POPUP -->
<div class="a" style="left:275px;top:178px;width:713px;height:623px;background:#fff;border-radius:5px 5px 4px 4px;box-shadow:0 0 0 1px rgba(0,0,0,0.2),0 24px 55px rgba(0,0,0,0.6),0 6px 18px rgba(0,0,0,0.25);overflow:hidden"><div class="a" style="left:0;top:0;width:713px;height:23px;background:linear-gradient(#ebe9eb,#dcdadc);border-bottom:1px solid #c9c7c9"></div><div class="a" style="left:1px;top:23px;width:713px;height:21px;background:#fff;font-size:13px;color:#1d1d1d;text-align:center;line-height:20px;white-space:nowrap">omero-training-april2016.docker.openmicroscopy.org<span style="color:#777">/webclient/img_detail/3/</span></div><div class="a" style="left:0;top:44px;width:713px;height:7px;background:#dcdcdc;border-top:1px solid #c4c4c4;border-bottom:1px solid #b0b0b0"></div><div class="a" style="left:0;top:607px;width:713px;height:16px;background:#e2e2e2;border-top:1px solid #b4b4b4;font-size:10px;color:#3a3a3a;line-height:14px;white-space:nowrap;padding-left:0">&copy; 2007-2016 Glencoe Software Inc. All rights reserved.</div></div>
<div class="a" style="left:283px;top:183px;width:12px;height:12px;border-radius:50%;background:#8f8f8f;border:1px solid #7d7d7d"></div>
<div class="a" style="left:303px;top:183px;width:12px;height:12px;border-radius:50%;background:#8f8f8f;border:1px solid #7d7d7d"></div>
<div class="a" style="left:323px;top:183px;width:12px;height:12px;border-radius:50%;background:#8f8f8f;border:1px solid #7d7d7d"></div>
<div class="a" style="left:280px;top:244px;width:152px;height:474px;background:#ececec;border:1px solid #a9a9a9"></div>
<div class="a" style="left:281px;top:245px;width:150px;height:26px;background:#fff;border-bottom:1px solid #c8c8c8;font-size:13px;font-weight:bold;color:#55585d;text-align:center;line-height:26px">Viewing Options</div>
<div class="a" style="left:291px;top:271px;width:130px;height:63px;background:#fff"></div>
<div class="a" style="left:291px;top:271px;width:130px;height:21px;background:#4e4843"></div>
<div class="a" style="left:293px;top:275px;font-size:10px;font-weight:bold;color:#fff;line-height:13px">Normal</div>
<div class="a" style="left:405px;top:275px;width:13px;height:13px;border-radius:50%;background:#8a8684"></div><div class="a" style="left:409px;top:279px;width:5px;height:5px;border-radius:50%;background:#fff"></div>
<div class="a" style="left:293px;top:296px;font-size:10px;color:#111;line-height:13px">Max Intensity</div>
<div class="a" style="left:405px;top:296px;width:13px;height:13px;border-radius:50%;background:#fff;border:1px solid #c9c9c9"></div>
<div class="a" style="left:293px;top:317px;font-size:10px;color:#111;line-height:13px">Split Channel</div>
<div class="a" style="left:405px;top:317px;width:13px;height:13px;border-radius:50%;background:#fff;border:1px solid #8f8f8f"></div>
<div class="a" style="left:302px;top:337px;font-size:13px;color:#111;line-height:16px;white-space:nowrap;">Quality</div>
<div class="a" style="left:346px;top:339px;width:63px;height:14px;background:#fff;border:1px solid #b9b9b9;border-radius:4px;font-size:9px;color:#222;line-height:12px;padding-left:9px">Normal</div>
<div class="a" style="left:396px;top:339px;width:13px;height:14px;background:#9a9a9a;border-radius:0 4px 4px 0"></div>
<svg class="a" style="left:399px;top:341px" width="7" height="10" viewBox="0 0 7 10"><path d="M1 3.5 L3.5 1 L6 3.5 M1 6.5 L3.5 9 L6 6.5" fill="none" stroke="#fff" stroke-width="1"/></svg>
<div class="a" style="left:327px;top:356px;font-size:13px;color:#111;line-height:16px;white-space:nowrap;">Zoom (%)</div>
<div class="a" style="left:302px;top:377px;width:60px;height:19px;background:#fff;border:1px solid #d0d0d0"></div>
<div class="a" style="left:325px;top:379px;width:17px;font-size:12px;color:#111;line-height:15px;text-align:right">67</div>
<div class="a" style="left:344px;top:379px;width:14px;height:15px;background:#c7c8f0;border-radius:2px"></div>
<svg class="a" style="left:347px;top:381px" width="8" height="11" viewBox="0 0 8 11"><path d="M1 4 L4 1 L7 4 M1 7 L4 10 L7 7" fill="none" stroke="#3058b8" stroke-width="1.3"/></svg>
<div class="a" style="left:367px;top:371px;width:21px;height:22px;background:linear-gradient(135deg,#f4f4f4 60%,#8a8a8a)"></div><div class="a" style="left:369px;top:374px;width:16px;height:16px;background:#fff;border:1.5px solid #111;font-family:'Liberation Serif',serif;font-size:12px;color:#111;text-align:center;line-height:13px;letter-spacing:-0.5px">1:1</div>
<div class="a" style="left:393px;top:371px;width:21px;height:22px;background:linear-gradient(135deg,#f4f4f4 60%,#8a8a8a)"></div><div class="a" style="left:395px;top:374px;width:16px;height:16px;background:#fff;border:1.5px solid #111"></div>
<svg class="a" style="left:397px;top:376px" width="12" height="12" viewBox="0 0 12 12"><path d="M1.5 1.5 L10.5 10.5 M1.5 1.5 L1.5 5 M1.5 1.5 L5 1.5 M10.5 10.5 L10.5 7 M10.5 10.5 L7 10.5" fill="none" stroke="#111" stroke-width="1.2"/></svg>
<div class="a" style="left:320px;top:401px;font-size:13px;color:#111;line-height:16px;white-space:nowrap;">Line Plot</div>
<div class="a" style="left:379px;top:403px;width:12px;height:12px;background:#fff;border:1px solid #999;border-radius:2px"></div>
<div class="a" style="left:281px;top:420px;width:150px;height:25px;background:#fff;border-bottom:1px solid #c8c8c8;font-size:13px;font-weight:bold;color:#55585d;text-align:center;line-height:25px">Rendering Details</div>
<div class="a" style="left:281px;top:446px;width:150px;text-align:center;font-size:13px;color:#111;line-height:16px">Channels - <span style="color:#2d6fc4">Edit</span></div>
<div class="a" style="left:285px;top:463px;width:44px;height:22px;background:#0000ff;border-top:2px solid #666;border-left:2px solid #666;border-bottom:1px solid #ddd;border-right:1px solid #ddd;font-size:11px;color:#111;text-align:center;line-height:19px">457.0</div>
<div class="a" style="left:334px;top:463px;width:44px;height:22px;background:#00ff00;border-top:2px solid #666;border-left:2px solid #666;border-bottom:1px solid #ddd;border-right:1px solid #ddd;font-size:11px;color:#111;text-align:center;line-height:19px">528.0</div>
<div class="a" style="left:384px;top:463px;width:42px;height:22px;background:#ff0000;border-top:2px solid #666;border-left:2px solid #666;border-bottom:1px solid #ddd;border-right:1px solid #ddd;font-size:11px;color:#111;text-align:center;line-height:19px">617.0</div>
<div class="a" style="left:315px;top:492px;font-size:13px;color:#111;line-height:16px;white-space:nowrap;">Grayscale</div>
<div class="a" style="left:381px;top:493px;width:12px;height:12px;background:#fff;border:1px solid #999;border-radius:2px"></div>
<div class="a" style="left:281px;top:507px;width:150px;text-align:center;font-size:13px;color:#111;line-height:16px">Rendering Settings</div>
<div class="a" style="left:308px;top:525px;width:43px;height:17px;background:#fff;border:1px solid #c2c2c2;border-radius:4px;box-shadow:0 1px 1px rgba(0,0,0,0.12);font-size:11px;color:#111;text-align:center;line-height:15px">Copy</div>
<div class="a" style="left:359px;top:525px;width:45px;height:17px;background:#fff;border:1px solid #c2c2c2;border-radius:4px;box-shadow:0 1px 1px rgba(0,0,0,0.12);font-size:11px;color:#111;text-align:center;line-height:15px">Paste</div>
<div class="a" style="left:315px;top:549px;font-size:13px;color:#111;line-height:16px;white-space:nowrap;">Interpolate</div>
<div class="a" style="left:385px;top:550px;width:12px;height:12px;background:#8c8c8c;border-radius:2px"></div>
<svg class="a" style="left:387px;top:552px" width="8" height="8" viewBox="0 0 8 8"><path d="M1 4 L3 6.5 L7 1" fill="none" stroke="#fff" stroke-width="1.4"/></svg>
<div class="a" style="left:281px;top:567px;width:150px;height:26px;background:#fff;border-bottom:1px solid #c8c8c8;font-size:13px;font-weight:bold;color:#55585d;text-align:center;line-height:25px">Current Image</div>
<div class="a" style="left:281px;top:593px;width:150px;text-align:center;font-size:12px;color:#111;line-height:15px">Z: 1/1 | T: 1/1</div>
<div class="a" style="left:318px;top:612px;font-size:13px;color:#111;line-height:16px;white-space:nowrap;">Scale bar</div>
<div class="a" style="left:381px;top:613px;width:12px;height:12px;background:#fff;border:1px solid #999;border-radius:2px"></div>
<div class="a" style="left:281px;top:629px;width:150px;text-align:center;font-size:13px;color:#2d6fc4;line-height:16px">Image Information</div>
<div class="a" style="left:279px;top:647px;width:150px;text-align:center;font-size:13px;color:#2d6fc4;line-height:16px">Image Link</div>
<div class="a" style="left:281px;top:665px;width:150px;height:26px;background:#fff;border-bottom:1px solid #c8c8c8;font-size:13px;font-weight:bold;color:#55585d;text-align:center;line-height:26px">ROI Count: 0</div>
<div class="a" style="left:302px;top:695px;width:49px;height:17px;background:#fff;border:1px solid #c2c2c2;border-radius:4px;box-shadow:0 1px 1px rgba(0,0,0,0.12);font-size:11px;color:#111;text-align:center;line-height:15px">&lt; Prev</div>
<div class="a" style="left:359px;top:695px;width:50px;height:17px;background:#fff;border:1px solid #c2c2c2;border-radius:4px;box-shadow:0 1px 1px rgba(0,0,0,0.12);font-size:11px;color:#111;text-align:center;line-height:15px">Next &gt;</div>
<div class="a" style="left:459px;top:244px;width:20px;height:20px;background:#fff;border:1px solid #dcdcdc"></div>
<div class="a" style="left:459px;top:269px;width:20px;height:20px;background:#fff;border:1px solid #dcdcdc"></div>
<div class="a" style="left:459px;top:697px;width:20px;height:20px;background:#fff;border:1px solid #dcdcdc"></div>
<div class="a" style="left:459px;top:722px;width:20px;height:20px;background:#fff;border:1px solid #dcdcdc"></div>
<svg class="a" style="left:464px;top:251px" width="10" height="8" viewBox="0 0 10 8"><rect x="0.5" y="0.5" width="9" height="7" rx="1" fill="none" stroke="#1b2a88" stroke-width="1"/><path d="M2 6 L5 2.5 L8 6 Z" fill="#1b2a88"/></svg>
<svg class="a" style="left:464px;top:277px" width="10" height="6" viewBox="0 0 10 6"><path d="M0.5 5.5 L5 1 L9.5 5.5" fill="none" stroke="#1b2a88" stroke-width="1.4"/></svg>
<svg class="a" style="left:464px;top:704px" width="10" height="6" viewBox="0 0 10 6"><path d="M0.5 0.5 L5 5 L9.5 0.5" fill="none" stroke="#1b2a88" stroke-width="1.4"/></svg>
<svg class="a" style="left:464px;top:728px" width="10" height="8" viewBox="0 0 10 8"><rect x="0.5" y="0.5" width="9" height="7" rx="1" fill="none" stroke="#1b2a88" stroke-width="1"/><path d="M2 2 L5 5.5 L8 2 Z" fill="#1b2a88"/></svg>
<div class="a" style="left:461px;top:294px;width:15px;height:398px;background:#c9c9c9;border:1px solid #111"></div>
<div class="a" style="left:414px;top:497px;width:66px;height:15px;transform:rotate(-90deg);font-size:13px;font-weight:bold;color:#111;text-align:center;line-height:15px;white-space:nowrap">Z-sections</div>
<div class="a" style="left:481px;top:743px;width:20px;height:20px;background:#fff;border:1px solid #dcdcdc"></div>
<div class="a" style="left:505px;top:743px;width:20px;height:20px;background:#fff;border:1px solid #dcdcdc"></div>
<div class="a" style="left:933px;top:743px;width:20px;height:20px;background:#fff;border:1px solid #dcdcdc"></div>
<div class="a" style="left:958px;top:743px;width:20px;height:20px;background:#fff;border:1px solid #dcdcdc"></div>
<svg class="a" style="left:486px;top:748px" width="8" height="10" viewBox="0 0 8 10"><rect x="0.5" y="0.5" width="7" height="9" rx="1" fill="none" stroke="#1b2a88" stroke-width="1"/><path d="M6 2 L2.5 5 L6 8 Z" fill="#1b2a88"/></svg>
<svg class="a" style="left:512px;top:748px" width="6" height="10" viewBox="0 0 6 10"><path d="M5.5 0.5 L1 5 L5.5 9.5" fill="none" stroke="#1b2a88" stroke-width="1.4"/></svg>
<svg class="a" style="left:939px;top:748px" width="6" height="10" viewBox="0 0 6 10"><path d="M0.5 0.5 L5 5 L0.5 9.5" fill="none" stroke="#1b2a88" stroke-width="1.4"/></svg>
<svg class="a" style="left:963px;top:748px" width="8" height="10" viewBox="0 0 8 10"><rect x="0.5" y="0.5" width="7" height="9" rx="1" fill="none" stroke="#1b2a88" stroke-width="1"/><path d="M2 2 L5.5 5 L2 8 Z" fill="#1b2a88"/></svg>
<div class="a" style="left:530px;top:745px;width:398px;height:15px;background:#c9c9c9;border:1px solid #111"></div>
<div class="a" style="left:680px;top:762px;font-size:13px;font-weight:bold;color:#111;line-height:16px;white-space:nowrap">Timepoints</div>
<div class="a" style="left:480px;top:244px;width:500px;height:497px;background:#fff;border:1px solid #000"></div>
<div class="a" style="left:481px;top:245px;width:2px;height:495px;background:#ddd"></div>
<div id="img" class="a" style="left:483px;top:246px;width:494px;height:493px;background:#000;overflow:hidden"><svg width="494" height="493" viewBox="483 246 494 493" style="position:absolute;left:0;top:0"><defs>
<filter id="b10" x="-50%" y="-50%" width="200%" height="200%"><feGaussianBlur stdDeviation="10"/></filter>
<filter id="b6" x="-50%" y="-50%" width="200%" height="200%"><feGaussianBlur stdDeviation="6"/></filter>
<filter id="b3" x="-50%" y="-50%" width="200%" height="200%"><feGaussianBlur stdDeviation="3"/></filter>
<filter id="b2" x="-50%" y="-50%" width="200%" height="200%"><feGaussianBlur stdDeviation="2"/></filter>
<filter id="b1" x="-50%" y="-50%" width="200%" height="200%"><feGaussianBlur stdDeviation="1"/></filter>
<radialGradient id="gc"><stop offset="0" stop-color="#5f5" stop-opacity="0.9"/><stop offset="0.2" stop-color="#3d3" stop-opacity="0.55"/><stop offset="0.6" stop-color="#2b2" stop-opacity="0.25"/><stop offset="1" stop-color="#0a0" stop-opacity="0"/></radialGradient>
</defs><polygon points="580,332 640,342 690,385 760,410 830,405 860,410 885,450 898,520 895,600 882,652 860,660 800,625 760,600 672,578 630,552 600,585 568,580 562,480 566,380" fill="#0b0101" filter="url(#b10)" transform="translate(733 497) scale(0.92) translate(-733 -497)"/><g filter="url(#b1)"><circle cx="775" cy="578" r="1.6" fill="#5a0a0a" opacity="0.53"/><circle cx="570" cy="486" r="1.8" fill="#5a0a0a" opacity="0.15"/><circle cx="722" cy="413" r="1.4" fill="#5a0a0a" opacity="0.28"/><circle cx="632" cy="402" r="1.8" fill="#5a0a0a" opacity="0.51"/><circle cx="746" cy="557" r="1.2" fill="#5a0a0a" opacity="0.53"/><circle cx="868" cy="430" r="1.1" fill="#5a0a0a" opacity="0.04"/><circle cx="582" cy="431" r="1.5" fill="#5a0a0a" opacity="0.17"/><circle cx="794" cy="443" r="1.2" fill="#5a0a0a" opacity="0.49"/><circle cx="726" cy="436" r="1.4" fill="#5a0a0a" opacity="0.45"/><circle cx="881" cy="646" r="1.3" fill="#5a0a0a" opacity="0.05"/><circle cx="591" cy="444" r="1.5" fill="#5a0a0a" opacity="0.52"/><circle cx="748" cy="435" r="1.3" fill="#5a0a0a" opacity="0.26"/><circle cx="587" cy="380" r="1.6" fill="#5a0a0a" opacity="0.50"/><circle cx="616" cy="346" r="1.8" fill="#5a0a0a" opacity="0.14"/><circle cx="700" cy="410" r="1.5" fill="#5a0a0a" opacity="0.44"/><circle cx="717" cy="471" r="1.0" fill="#5a0a0a" opacity="0.52"/><circle cx="571" cy="495" r="1.7" fill="#5a0a0a" opacity="0.09"/><circle cx="777" cy="594" r="1.1" fill="#5a0a0a" opacity="0.23"/><circle cx="662" cy="482" r="1.8" fill="#5a0a0a" opacity="0.50"/><circle cx="728" cy="574" r="1.4" fill="#5a0a0a" opacity="0.24"/><circle cx="891" cy="540" r="1.3" fill="#5a0a0a" opacity="0.06"/><circle cx="657" cy="493" r="1.6" fill="#5a0a0a" opacity="0.44"/><circle cx="784" cy="525" r="1.0" fill="#5a0a0a" opacity="0.39"/><circle cx="646" cy="555" r="1.4" fill="#5a0a0a" opacity="0.14"/><circle cx="783" cy="597" r="1.3" fill="#5a0a0a" opacity="0.29"/><circle cx="815" cy="607" r="1.7" fill="#5a0a0a" opacity="0.50"/><circle cx="808" cy="575" r="1.6" fill="#5a0a0a" opacity="0.40"/><circle cx="790" cy="471" r="1.5" fill="#5a0a0a" opacity="0.47"/><circle cx="780" cy="571" r="1.0" fill="#5a0a0a" opacity="0.26"/><circle cx="712" cy="548" r="1.2" fill="#5a0a0a" opacity="0.44"/><circle cx="723" cy="406" r="1.0" fill="#5a0a0a" opacity="0.10"/><circle cx="669" cy="391" r="1.2" fill="#5a0a0a" opacity="0.17"/><circle cx="721" cy="457" r="1.5" fill="#5a0a0a" opacity="0.41"/><circle cx="656" cy="467" r="1.1" fill="#5a0a0a" opacity="0.49"/><circle cx="748" cy="444" r="1.5" fill="#5a0a0a" opacity="0.54"/><circle cx="782" cy="454" r="1.1" fill="#5a0a0a" opacity="0.41"/><circle cx="894" cy="534" r="1.7" fill="#5a0a0a" opacity="0.03"/><circle cx="597" cy="520" r="1.5" fill="#5a0a0a" opacity="0.25"/><circle cx="690" cy="475" r="1.2" fill="#5a0a0a" opacity="0.30"/><circle cx="766" cy="417" r="1.8" fill="#5a0a0a" opacity="0.13"/><circle cx="703" cy="437" r="1.8" fill="#5a0a0a" opacity="0.37"/><circle cx="659" cy="490" r="1.1" fill="#5a0a0a" opacity="0.42"/><circle cx="713" cy="428" r="1.6" fill="#5a0a0a" opacity="0.49"/><circle cx="565" cy="508" r="1.2" fill="#5a0a0a" opacity="0.02"/><circle cx="830" cy="412" r="1.1" fill="#5a0a0a" opacity="0.18"/><circle cx="661" cy="534" r="1.4" fill="#5a0a0a" opacity="0.43"/><circle cx="768" cy="579" r="1.1" fill="#5a0a0a" opacity="0.47"/><circle cx="664" cy="509" r="1.3" fill="#5a0a0a" opacity="0.30"/><circle cx="743" cy="486" r="1.3" fill="#5a0a0a" opacity="0.46"/><circle cx="647" cy="483" r="1.7" fill="#5a0a0a" opacity="0.51"/><circle cx="804" cy="542" r="1.7" fill="#5a0a0a" opacity="0.33"/><circle cx="628" cy="429" r="1.7" fill="#5a0a0a" opacity="0.22"/><circle cx="849" cy="563" r="1.2" fill="#5a0a0a" opacity="0.47"/><circle cx="725" cy="514" r="1.4" fill="#5a0a0a" opacity="0.32"/><circle cx="613" cy="526" r="1.6" fill="#5a0a0a" opacity="0.22"/><circle cx="833" cy="552" r="1.6" fill="#5a0a0a" opacity="0.54"/><circle cx="636" cy="546" r="1.8" fill="#5a0a0a" opacity="0.16"/><circle cx="606" cy="428" r="1.7" fill="#5a0a0a" opacity="0.25"/><circle cx="771" cy="469" r="1.1" fill="#5a0a0a" opacity="0.42"/><circle cx="575" cy="366" r="1.3" fill="#5a0a0a" opacity="0.05"/><circle cx="580" cy="523" r="1.6" fill="#5a0a0a" opacity="0.35"/><circle cx="606" cy="475" r="1.3" fill="#5a0a0a" opacity="0.41"/><circle cx="778" cy="499" r="1.7" fill="#5a0a0a" opacity="0.39"/><circle cx="774" cy="418" r="1.4" fill="#5a0a0a" opacity="0.12"/><circle cx="819" cy="503" r="1.2" fill="#5a0a0a" opacity="0.33"/><circle cx="806" cy="549" r="1.5" fill="#5a0a0a" opacity="0.23"/><circle cx="603" cy="529" r="1.2" fill="#5a0a0a" opacity="0.51"/><circle cx="726" cy="438" r="1.6" fill="#5a0a0a" opacity="0.21"/><circle cx="789" cy="605" r="1.1" fill="#5a0a0a" opacity="0.22"/><circle cx="682" cy="409" r="1.3" fill="#5a0a0a" opacity="0.41"/><circle cx="680" cy="459" r="1.1" fill="#5a0a0a" opacity="0.49"/><circle cx="784" cy="600" r="1.3" fill="#5a0a0a" opacity="0.29"/><circle cx="739" cy="529" r="1.5" fill="#5a0a0a" opacity="0.46"/><circle cx="571" cy="398" r="1.0" fill="#5a0a0a" opacity="0.14"/><circle cx="726" cy="585" r="1.0" fill="#5a0a0a" opacity="0.11"/><circle cx="867" cy="538" r="1.4" fill="#5a0a0a" opacity="0.23"/><circle cx="613" cy="383" r="1.3" fill="#5a0a0a" opacity="0.33"/><circle cx="648" cy="423" r="1.1" fill="#5a0a0a" opacity="0.30"/><circle cx="641" cy="491" r="1.0" fill="#5a0a0a" opacity="0.52"/><circle cx="797" cy="556" r="1.4" fill="#5a0a0a" opacity="0.53"/><circle cx="601" cy="554" r="1.2" fill="#5a0a0a" opacity="0.40"/><circle cx="640" cy="356" r="1.3" fill="#5a0a0a" opacity="0.27"/><circle cx="686" cy="434" r="1.4" fill="#5a0a0a" opacity="0.30"/><circle cx="813" cy="571" r="1.2" fill="#5a0a0a" opacity="0.44"/><circle cx="884" cy="546" r="1.8" fill="#5a0a0a" opacity="0.12"/><circle cx="739" cy="447" r="1.1" fill="#5a0a0a" opacity="0.22"/><circle cx="579" cy="412" r="1.0" fill="#5a0a0a" opacity="0.21"/><circle cx="581" cy="416" r="1.3" fill="#5a0a0a" opacity="0.23"/><circle cx="578" cy="343" r="1.8" fill="#5a0a0a" opacity="0.01"/><circle cx="735" cy="465" r="1.4" fill="#5a0a0a" opacity="0.23"/><circle cx="746" cy="493" r="1.5" fill="#5a0a0a" opacity="0.33"/><circle cx="776" cy="573" r="1.7" fill="#5a0a0a" opacity="0.31"/><circle cx="637" cy="369" r="1.2" fill="#5a0a0a" opacity="0.23"/><circle cx="826" cy="605" r="1.1" fill="#5a0a0a" opacity="0.23"/><circle cx="644" cy="358" r="1.3" fill="#5a0a0a" opacity="0.17"/><circle cx="645" cy="351" r="1.6" fill="#5a0a0a" opacity="0.03"/><circle cx="629" cy="426" r="1.3" fill="#5a0a0a" opacity="0.23"/><circle cx="705" cy="435" r="1.6" fill="#5a0a0a" opacity="0.39"/><circle cx="758" cy="478" r="1.7" fill="#5a0a0a" opacity="0.43"/><circle cx="583" cy="387" r="1.2" fill="#5a0a0a" opacity="0.34"/><circle cx="824" cy="517" r="1.0" fill="#5a0a0a" opacity="0.25"/><circle cx="887" cy="535" r="1.3" fill="#5a0a0a" opacity="0.15"/><circle cx="719" cy="475" r="1.4" fill="#5a0a0a" opacity="0.47"/><circle cx="841" cy="471" r="1.8" fill="#5a0a0a" opacity="0.21"/><circle cx="759" cy="491" r="1.7" fill="#5a0a0a" opacity="0.34"/><circle cx="634" cy="423" r="1.2" fill="#5a0a0a" opacity="0.40"/><circle cx="643" cy="448" r="1.2" fill="#5a0a0a" opacity="0.54"/><circle cx="847" cy="494" r="1.1" fill="#5a0a0a" opacity="0.23"/><circle cx="672" cy="559" r="1.7" fill="#5a0a0a" opacity="0.31"/><circle cx="836" cy="456" r="1.4" fill="#5a0a0a" opacity="0.41"/><circle cx="624" cy="460" r="1.3" fill="#5a0a0a" opacity="0.21"/><circle cx="668" cy="458" r="1.4" fill="#5a0a0a" opacity="0.45"/><circle cx="791" cy="510" r="1.6" fill="#5a0a0a" opacity="0.33"/><circle cx="765" cy="558" r="1.4" fill="#5a0a0a" opacity="0.30"/><circle cx="587" cy="359" r="1.3" fill="#5a0a0a" opacity="0.26"/><circle cx="822" cy="569" r="1.7" fill="#5a0a0a" opacity="0.30"/><circle cx="815" cy="535" r="1.4" fill="#5a0a0a" opacity="0.51"/><circle cx="748" cy="462" r="1.0" fill="#5a0a0a" opacity="0.34"/><circle cx="621" cy="549" r="1.7" fill="#5a0a0a" opacity="0.20"/><circle cx="772" cy="460" r="1.1" fill="#5a0a0a" opacity="0.44"/><circle cx="751" cy="570" r="1.3" fill="#5a0a0a" opacity="0.51"/><circle cx="633" cy="432" r="1.2" fill="#5a0a0a" opacity="0.42"/><circle cx="778" cy="587" r="1.2" fill="#5a0a0a" opacity="0.21"/><circle cx="863" cy="574" r="1.3" fill="#5a0a0a" opacity="0.39"/><circle cx="872" cy="431" r="1.5" fill="#5a0a0a" opacity="0.02"/><circle cx="625" cy="340" r="1.1" fill="#5a0a0a" opacity="0.01"/><circle cx="626" cy="529" r="1.5" fill="#5a0a0a" opacity="0.44"/><circle cx="850" cy="490" r="1.2" fill="#5a0a0a" opacity="0.25"/><circle cx="592" cy="381" r="1.5" fill="#5a0a0a" opacity="0.24"/><circle cx="596" cy="364" r="1.1" fill="#5a0a0a" opacity="0.27"/><circle cx="689" cy="484" r="1.5" fill="#5a0a0a" opacity="0.46"/><circle cx="589" cy="465" r="1.4" fill="#5a0a0a" opacity="0.33"/><circle cx="601" cy="530" r="1.3" fill="#5a0a0a" opacity="0.44"/><circle cx="822" cy="572" r="1.1" fill="#5a0a0a" opacity="0.37"/><circle cx="682" cy="577" r="1.7" fill="#5a0a0a" opacity="0.05"/><circle cx="660" cy="497" r="1.6" fill="#5a0a0a" opacity="0.48"/><circle cx="759" cy="429" r="1.3" fill="#5a0a0a" opacity="0.43"/><circle cx="705" cy="410" r="1.5" fill="#5a0a0a" opacity="0.19"/><circle cx="654" cy="362" r="1.4" fill="#5a0a0a" opacity="0.16"/><circle cx="747" cy="459" r="1.7" fill="#5a0a0a" opacity="0.23"/><circle cx="647" cy="484" r="1.3" fill="#5a0a0a" opacity="0.38"/><circle cx="578" cy="403" r="1.8" fill="#5a0a0a" opacity="0.21"/><circle cx="797" cy="500" r="1.0" fill="#5a0a0a" opacity="0.34"/><circle cx="845" cy="637" r="1.8" fill="#5a0a0a" opacity="0.26"/><circle cx="705" cy="421" r="1.4" fill="#5a0a0a" opacity="0.30"/><circle cx="618" cy="483" r="1.1" fill="#5a0a0a" opacity="0.33"/><circle cx="870" cy="627" r="1.0" fill="#5a0a0a" opacity="0.41"/><circle cx="891" cy="531" r="1.2" fill="#5a0a0a" opacity="0.15"/><circle cx="624" cy="474" r="1.2" fill="#5a0a0a" opacity="0.46"/><circle cx="612" cy="504" r="1.8" fill="#5a0a0a" opacity="0.45"/><circle cx="591" cy="367" r="1.5" fill="#5a0a0a" opacity="0.31"/><circle cx="687" cy="490" r="1.5" fill="#5a0a0a" opacity="0.54"/><circle cx="643" cy="521" r="1.2" fill="#5a0a0a" opacity="0.39"/><circle cx="726" cy="566" r="1.0" fill="#5a0a0a" opacity="0.47"/><circle cx="705" cy="499" r="1.5" fill="#5a0a0a" opacity="0.48"/><circle cx="579" cy="498" r="1.0" fill="#5a0a0a" opacity="0.25"/><circle cx="663" cy="481" r="1.5" fill="#5a0a0a" opacity="0.52"/><circle cx="688" cy="508" r="1.6" fill="#5a0a0a" opacity="0.53"/><circle cx="664" cy="386" r="1.7" fill="#5a0a0a" opacity="0.18"/><circle cx="715" cy="577" r="1.4" fill="#5a0a0a" opacity="0.18"/><circle cx="608" cy="448" r="1.4" fill="#5a0a0a" opacity="0.40"/><circle cx="632" cy="482" r="1.0" fill="#5a0a0a" opacity="0.23"/><circle cx="678" cy="378" r="1.8" fill="#5a0a0a" opacity="0.03"/><circle cx="776" cy="460" r="1.5" fill="#5a0a0a" opacity="0.29"/><circle cx="621" cy="376" r="1.0" fill="#5a0a0a" opacity="0.46"/><circle cx="574" cy="527" r="1.1" fill="#5a0a0a" opacity="0.18"/><circle cx="771" cy="535" r="1.2" fill="#5a0a0a" opacity="0.53"/><circle cx="598" cy="351" r="1.5" fill="#5a0a0a" opacity="0.17"/><circle cx="583" cy="484" r="1.5" fill="#5a0a0a" opacity="0.48"/><circle cx="782" cy="613" r="1.1" fill="#5a0a0a" opacity="0.02"/><circle cx="649" cy="430" r="1.0" fill="#5a0a0a" opacity="0.47"/><circle cx="635" cy="418" r="1.8" fill="#5a0a0a" opacity="0.27"/><circle cx="590" cy="448" r="1.1" fill="#5a0a0a" opacity="0.35"/><circle cx="774" cy="548" r="1.1" fill="#5a0a0a" opacity="0.25"/><circle cx="729" cy="560" r="1.4" fill="#5a0a0a" opacity="0.40"/><circle cx="652" cy="495" r="1.4" fill="#5a0a0a" opacity="0.52"/><circle cx="752" cy="552" r="1.3" fill="#5a0a0a" opacity="0.47"/><circle cx="848" cy="428" r="1.2" fill="#5a0a0a" opacity="0.29"/><circle cx="777" cy="545" r="1.8" fill="#5a0a0a" opacity="0.24"/><circle cx="826" cy="443" r="1.5" fill="#5a0a0a" opacity="0.50"/><circle cx="780" cy="573" r="1.2" fill="#5a0a0a" opacity="0.34"/><circle cx="582" cy="570" r="1.3" fill="#5a0a0a" opacity="0.27"/><circle cx="582" cy="431" r="1.1" fill="#5a0a0a" opacity="0.43"/><circle cx="596" cy="469" r="1.2" fill="#5a0a0a" opacity="0.21"/><circle cx="755" cy="427" r="1.1" fill="#5a0a0a" opacity="0.31"/><circle cx="882" cy="647" r="1.1" fill="#5a0a0a" opacity="0.03"/><circle cx="600" cy="510" r="1.1" fill="#5a0a0a" opacity="0.55"/><circle cx="747" cy="477" r="1.2" fill="#5a0a0a" opacity="0.39"/><circle cx="632" cy="502" r="1.7" fill="#5a0a0a" opacity="0.33"/><circle cx="721" cy="478" r="1.7" fill="#5a0a0a" opacity="0.40"/><circle cx="733" cy="425" r="1.6" fill="#5a0a0a" opacity="0.29"/><circle cx="722" cy="584" r="1.5" fill="#5a0a0a" opacity="0.07"/><circle cx="618" cy="360" r="1.4" fill="#5a0a0a" opacity="0.41"/><circle cx="760" cy="414" r="1.3" fill="#5a0a0a" opacity="0.04"/><circle cx="780" cy="494" r="1.7" fill="#5a0a0a" opacity="0.52"/><circle cx="657" cy="442" r="1.7" fill="#5a0a0a" opacity="0.25"/><circle cx="705" cy="469" r="1.8" fill="#5a0a0a" opacity="0.24"/><circle cx="786" cy="584" r="1.6" fill="#5a0a0a" opacity="0.20"/><circle cx="854" cy="552" r="1.7" fill="#5a0a0a" opacity="0.44"/><circle cx="677" cy="575" r="1.4" fill="#5a0a0a" opacity="0.08"/><circle cx="772" cy="597" r="1.1" fill="#5a0a0a" opacity="0.16"/><circle cx="826" cy="610" r="1.4" fill="#5a0a0a" opacity="0.37"/><circle cx="601" cy="398" r="1.8" fill="#5a0a0a" opacity="0.50"/><circle cx="785" cy="459" r="1.5" fill="#5a0a0a" opacity="0.28"/><circle cx="787" cy="525" r="1.6" fill="#5a0a0a" opacity="0.38"/><circle cx="710" cy="433" r="1.6" fill="#5a0a0a" opacity="0.33"/><circle cx="766" cy="584" r="1.4" fill="#5a0a0a" opacity="0.34"/><circle cx="581" cy="417" r="1.7" fill="#5a0a0a" opacity="0.19"/><circle cx="580" cy="335" r="1.6" fill="#5a0a0a" opacity="0.00"/><circle cx="718" cy="477" r="1.6" fill="#5a0a0a" opacity="0.37"/><circle cx="854" cy="537" r="1.7" fill="#5a0a0a" opacity="0.55"/><circle cx="629" cy="352" r="1.3" fill="#5a0a0a" opacity="0.13"/><circle cx="708" cy="431" r="1.6" fill="#5a0a0a" opacity="0.34"/><circle cx="869" cy="561" r="1.3" fill="#5a0a0a" opacity="0.36"/><circle cx="717" cy="587" r="1.6" fill="#5a0a0a" opacity="0.05"/><circle cx="796" cy="586" r="1.7" fill="#5a0a0a" opacity="0.52"/><circle cx="806" cy="479" r="1.3" fill="#5a0a0a" opacity="0.29"/><circle cx="795" cy="588" r="1.2" fill="#5a0a0a" opacity="0.39"/><circle cx="850" cy="452" r="1.5" fill="#5a0a0a" opacity="0.33"/><circle cx="610" cy="426" r="1.0" fill="#5a0a0a" opacity="0.25"/><circle cx="890" cy="609" r="1.7" fill="#5a0a0a" opacity="0.02"/><circle cx="580" cy="532" r="1.6" fill="#5a0a0a" opacity="0.25"/><circle cx="770" cy="510" r="1.1" fill="#5a0a0a" opacity="0.35"/><circle cx="639" cy="429" r="1.7" fill="#5a0a0a" opacity="0.22"/><circle cx="789" cy="529" r="1.1" fill="#5a0a0a" opacity="0.46"/><circle cx="701" cy="437" r="1.7" fill="#5a0a0a" opacity="0.47"/><circle cx="667" cy="557" r="1.1" fill="#5a0a0a" opacity="0.26"/><circle cx="588" cy="545" r="1.7" fill="#5a0a0a" opacity="0.42"/><circle cx="574" cy="502" r="1.4" fill="#5a0a0a" opacity="0.17"/><circle cx="612" cy="423" r="1.4" fill="#5a0a0a" opacity="0.22"/><circle cx="793" cy="412" r="1.2" fill="#5a0a0a" opacity="0.04"/><circle cx="661" cy="362" r="1.3" fill="#5a0a0a" opacity="0.04"/><circle cx="590" cy="445" r="1.2" fill="#5a0a0a" opacity="0.44"/><circle cx="580" cy="406" r="1.2" fill="#5a0a0a" opacity="0.20"/><circle cx="844" cy="498" r="1.4" fill="#5a0a0a" opacity="0.50"/><circle cx="757" cy="481" r="1.5" fill="#5a0a0a" opacity="0.42"/><circle cx="700" cy="473" r="1.1" fill="#5a0a0a" opacity="0.35"/><circle cx="863" cy="433" r="1.5" fill="#5a0a0a" opacity="0.17"/><circle cx="620" cy="479" r="1.6" fill="#5a0a0a" opacity="0.21"/><circle cx="598" cy="583" r="1.7" fill="#5a0a0a" opacity="0.02"/><circle cx="588" cy="540" r="1.2" fill="#5a0a0a" opacity="0.43"/><circle cx="572" cy="483" r="1.1" fill="#5a0a0a" opacity="0.14"/><circle cx="799" cy="501" r="1.7" fill="#5a0a0a" opacity="0.49"/><circle cx="621" cy="489" r="1.3" fill="#5a0a0a" opacity="0.42"/><circle cx="818" cy="574" r="1.2" fill="#5a0a0a" opacity="0.26"/><circle cx="699" cy="416" r="1.5" fill="#5a0a0a" opacity="0.35"/><circle cx="772" cy="482" r="1.2" fill="#5a0a0a" opacity="0.21"/><circle cx="842" cy="551" r="1.4" fill="#5a0a0a" opacity="0.40"/><circle cx="829" cy="433" r="1.5" fill="#5a0a0a" opacity="0.26"/><circle cx="732" cy="422" r="1.4" fill="#5a0a0a" opacity="0.20"/><circle cx="602" cy="394" r="1.8" fill="#5a0a0a" opacity="0.31"/><circle cx="645" cy="352" r="1.1" fill="#5a0a0a" opacity="0.10"/><circle cx="848" cy="592" r="1.1" fill="#5a0a0a" opacity="0.29"/><circle cx="583" cy="389" r="1.6" fill="#5a0a0a" opacity="0.29"/><circle cx="752" cy="458" r="1.5" fill="#5a0a0a" opacity="0.30"/><circle cx="573" cy="417" r="1.4" fill="#5a0a0a" opacity="0.09"/><circle cx="588" cy="413" r="1.3" fill="#5a0a0a" opacity="0.53"/><circle cx="817" cy="528" r="1.3" fill="#5a0a0a" opacity="0.31"/><circle cx="833" cy="429" r="1.0" fill="#5a0a0a" opacity="0.40"/><circle cx="664" cy="407" r="1.2" fill="#5a0a0a" opacity="0.43"/><circle cx="762" cy="424" r="1.6" fill="#5a0a0a" opacity="0.18"/><circle cx="764" cy="566" r="1.6" fill="#5a0a0a" opacity="0.37"/><circle cx="587" cy="393" r="1.4" fill="#5a0a0a" opacity="0.39"/><circle cx="593" cy="578" r="1.3" fill="#5a0a0a" opacity="0.09"/><circle cx="664" cy="518" r="1.5" fill="#5a0a0a" opacity="0.43"/><circle cx="668" cy="423" r="1.4" fill="#5a0a0a" opacity="0.41"/><circle cx="714" cy="518" r="1.2" fill="#5a0a0a" opacity="0.24"/><circle cx="732" cy="429" r="1.0" fill="#5a0a0a" opacity="0.29"/><circle cx="616" cy="464" r="1.7" fill="#5a0a0a" opacity="0.23"/><circle cx="681" cy="563" r="1.5" fill="#5a0a0a" opacity="0.16"/><circle cx="639" cy="424" r="1.7" fill="#5a0a0a" opacity="0.35"/><circle cx="649" cy="491" r="1.4" fill="#5a0a0a" opacity="0.25"/><circle cx="790" cy="572" r="1.4" fill="#5a0a0a" opacity="0.39"/><circle cx="734" cy="552" r="1.3" fill="#5a0a0a" opacity="0.44"/><circle cx="687" cy="537" r="1.5" fill="#5a0a0a" opacity="0.43"/><circle cx="820" cy="406" r="1.4" fill="#5a0a0a" opacity="0.01"/><circle cx="713" cy="520" r="1.8" fill="#5a0a0a" opacity="0.31"/><circle cx="785" cy="511" r="1.6" fill="#5a0a0a" opacity="0.50"/><circle cx="611" cy="493" r="1.5" fill="#5a0a0a" opacity="0.44"/><circle cx="582" cy="473" r="1.7" fill="#5a0a0a" opacity="0.48"/><circle cx="743" cy="554" r="1.5" fill="#5a0a0a" opacity="0.50"/><circle cx="730" cy="495" r="1.5" fill="#5a0a0a" opacity="0.40"/><circle cx="670" cy="497" r="1.0" fill="#5a0a0a" opacity="0.27"/><circle cx="643" cy="554" r="1.5" fill="#5a0a0a" opacity="0.13"/><circle cx="725" cy="440" r="1.2" fill="#5a0a0a" opacity="0.33"/><circle cx="611" cy="435" r="1.6" fill="#5a0a0a" opacity="0.53"/><circle cx="682" cy="414" r="1.2" fill="#5a0a0a" opacity="0.42"/><circle cx="741" cy="420" r="1.1" fill="#5a0a0a" opacity="0.35"/><circle cx="596" cy="477" r="1.6" fill="#5a0a0a" opacity="0.39"/><circle cx="707" cy="504" r="1.4" fill="#5a0a0a" opacity="0.31"/><circle cx="887" cy="489" r="1.6" fill="#5a0a0a" opacity="0.07"/><circle cx="774" cy="505" r="1.5" fill="#5a0a0a" opacity="0.44"/><circle cx="740" cy="453" r="1.1" fill="#5a0a0a" opacity="0.21"/><circle cx="602" cy="466" r="1.0" fill="#5a0a0a" opacity="0.44"/><circle cx="676" cy="408" r="1.3" fill="#5a0a0a" opacity="0.37"/><circle cx="759" cy="428" r="1.6" fill="#5a0a0a" opacity="0.17"/><circle cx="577" cy="473" r="1.7" fill="#5a0a0a" opacity="0.28"/><circle cx="632" cy="409" r="1.1" fill="#5a0a0a" opacity="0.38"/><circle cx="623" cy="479" r="1.7" fill="#5a0a0a" opacity="0.52"/><circle cx="585" cy="424" r="1.5" fill="#5a0a0a" opacity="0.50"/><circle cx="680" cy="446" r="1.1" fill="#5a0a0a" opacity="0.28"/><circle cx="738" cy="455" r="1.2" fill="#5a0a0a" opacity="0.34"/><circle cx="820" cy="536" r="1.6" fill="#5a0a0a" opacity="0.35"/><circle cx="627" cy="404" r="1.1" fill="#5a0a0a" opacity="0.21"/><circle cx="680" cy="468" r="1.2" fill="#5a0a0a" opacity="0.47"/><circle cx="865" cy="641" r="1.4" fill="#5a0a0a" opacity="0.20"/><circle cx="780" cy="450" r="1.2" fill="#5a0a0a" opacity="0.31"/><circle cx="770" cy="499" r="1.4" fill="#5a0a0a" opacity="0.44"/><circle cx="832" cy="568" r="1.3" fill="#5a0a0a" opacity="0.25"/><circle cx="567" cy="560" r="1.3" fill="#5a0a0a" opacity="0.01"/><circle cx="792" cy="450" r="1.3" fill="#5a0a0a" opacity="0.44"/><circle cx="873" cy="565" r="1.8" fill="#5a0a0a" opacity="0.26"/><circle cx="760" cy="546" r="1.2" fill="#5a0a0a" opacity="0.51"/><circle cx="770" cy="568" r="1.1" fill="#5a0a0a" opacity="0.49"/><circle cx="659" cy="537" r="1.6" fill="#5a0a0a" opacity="0.31"/><circle cx="652" cy="441" r="1.8" fill="#5a0a0a" opacity="0.43"/><circle cx="723" cy="518" r="1.5" fill="#5a0a0a" opacity="0.29"/><circle cx="586" cy="367" r="1.5" fill="#5a0a0a" opacity="0.29"/><circle cx="731" cy="471" r="1.4" fill="#5a0a0a" opacity="0.33"/><circle cx="822" cy="523" r="1.8" fill="#5a0a0a" opacity="0.38"/><circle cx="605" cy="575" r="1.3" fill="#5a0a0a" opacity="0.03"/><circle cx="791" cy="563" r="1.2" fill="#5a0a0a" opacity="0.20"/><circle cx="764" cy="595" r="1.5" fill="#5a0a0a" opacity="0.16"/><circle cx="710" cy="524" r="1.2" fill="#5a0a0a" opacity="0.28"/><circle cx="749" cy="533" r="1.7" fill="#5a0a0a" opacity="0.41"/><circle cx="732" cy="548" r="1.5" fill="#5a0a0a" opacity="0.34"/><circle cx="652" cy="559" r="1.3" fill="#5a0a0a" opacity="0.06"/><circle cx="619" cy="450" r="1.5" fill="#5a0a0a" opacity="0.43"/><circle cx="673" cy="448" r="1.6" fill="#5a0a0a" opacity="0.44"/><circle cx="569" cy="510" r="1.7" fill="#5a0a0a" opacity="0.12"/><circle cx="673" cy="553" r="1.5" fill="#5a0a0a" opacity="0.55"/><circle cx="677" cy="461" r="1.1" fill="#5a0a0a" opacity="0.44"/><circle cx="610" cy="394" r="1.8" fill="#5a0a0a" opacity="0.37"/><circle cx="820" cy="446" r="1.3" fill="#5a0a0a" opacity="0.54"/><circle cx="865" cy="558" r="1.6" fill="#5a0a0a" opacity="0.52"/><circle cx="630" cy="541" r="1.0" fill="#5a0a0a" opacity="0.10"/><circle cx="689" cy="416" r="1.4" fill="#5a0a0a" opacity="0.23"/><circle cx="753" cy="556" r="1.3" fill="#5a0a0a" opacity="0.40"/><circle cx="742" cy="594" r="1.5" fill="#5a0a0a" opacity="0.02"/><circle cx="593" cy="368" r="1.7" fill="#5a0a0a" opacity="0.49"/><circle cx="802" cy="456" r="1.6" fill="#5a0a0a" opacity="0.45"/><circle cx="722" cy="421" r="1.3" fill="#5a0a0a" opacity="0.53"/><circle cx="720" cy="400" r="1.8" fill="#5a0a0a" opacity="0.11"/><circle cx="621" cy="396" r="1.6" fill="#5a0a0a" opacity="0.34"/><circle cx="724" cy="559" r="1.2" fill="#5a0a0a" opacity="0.41"/><circle cx="630" cy="404" r="1.4" fill="#5a0a0a" opacity="0.35"/><circle cx="624" cy="475" r="1.1" fill="#5a0a0a" opacity="0.29"/><circle cx="676" cy="386" r="1.5" fill="#5a0a0a" opacity="0.17"/><circle cx="660" cy="415" r="1.1" fill="#5a0a0a" opacity="0.24"/><circle cx="740" cy="416" r="1.6" fill="#5a0a0a" opacity="0.16"/><circle cx="720" cy="511" r="1.2" fill="#5a0a0a" opacity="0.47"/><circle cx="804" cy="474" r="1.2" fill="#5a0a0a" opacity="0.35"/><circle cx="688" cy="525" r="1.0" fill="#5a0a0a" opacity="0.36"/><circle cx="797" cy="532" r="1.8" fill="#5a0a0a" opacity="0.48"/><circle cx="719" cy="496" r="1.8" fill="#5a0a0a" opacity="0.39"/><circle cx="766" cy="433" r="1.5" fill="#5a0a0a" opacity="0.37"/><circle cx="575" cy="354" r="1.3" fill="#5a0a0a" opacity="0.03"/><circle cx="753" cy="416" r="1.1" fill="#5a0a0a" opacity="0.11"/><circle cx="604" cy="378" r="1.6" fill="#5a0a0a" opacity="0.27"/><circle cx="618" cy="538" r="1.1" fill="#5a0a0a" opacity="0.42"/><circle cx="810" cy="575" r="1.3" fill="#5a0a0a" opacity="0.33"/><circle cx="633" cy="524" r="1.6" fill="#5a0a0a" opacity="0.28"/><circle cx="646" cy="456" r="1.4" fill="#5a0a0a" opacity="0.35"/><circle cx="879" cy="534" r="1.3" fill="#5a0a0a" opacity="0.32"/><circle cx="615" cy="461" r="1.1" fill="#5a0a0a" opacity="0.43"/><circle cx="693" cy="518" r="1.4" fill="#5a0a0a" opacity="0.26"/><circle cx="746" cy="497" r="1.2" fill="#5a0a0a" opacity="0.35"/><circle cx="848" cy="545" r="1.2" fill="#5a0a0a" opacity="0.42"/><circle cx="751" cy="430" r="1.4" fill="#5a0a0a" opacity="0.34"/><circle cx="689" cy="510" r="1.4" fill="#5a0a0a" opacity="0.43"/><circle cx="644" cy="413" r="1.7" fill="#5a0a0a" opacity="0.25"/><circle cx="795" cy="417" r="1.4" fill="#5a0a0a" opacity="0.16"/><circle cx="642" cy="389" r="1.8" fill="#5a0a0a" opacity="0.21"/><circle cx="688" cy="395" r="1.6" fill="#5a0a0a" opacity="0.26"/><circle cx="712" cy="566" r="1.1" fill="#5a0a0a" opacity="0.22"/><circle cx="830" cy="570" r="1.5" fill="#5a0a0a" opacity="0.52"/><circle cx="611" cy="365" r="1.5" fill="#5a0a0a" opacity="0.35"/><circle cx="720" cy="408" r="1.6" fill="#5a0a0a" opacity="0.25"/><circle cx="810" cy="474" r="1.3" fill="#5a0a0a" opacity="0.36"/><circle cx="672" cy="487" r="1.8" fill="#5a0a0a" opacity="0.48"/><circle cx="607" cy="555" r="1.7" fill="#5a0a0a" opacity="0.23"/><circle cx="867" cy="645" r="1.5" fill="#5a0a0a" opacity="0.18"/><circle cx="721" cy="514" r="1.7" fill="#5a0a0a" opacity="0.42"/><circle cx="835" cy="461" r="1.6" fill="#5a0a0a" opacity="0.40"/><circle cx="730" cy="556" r="1.8" fill="#5a0a0a" opacity="0.31"/><circle cx="748" cy="513" r="1.2" fill="#5a0a0a" opacity="0.39"/><circle cx="893" cy="564" r="1.5" fill="#5a0a0a" opacity="0.06"/><circle cx="687" cy="555" r="1.3" fill="#5a0a0a" opacity="0.47"/><circle cx="663" cy="388" r="1.3" fill="#5a0a0a" opacity="0.22"/><circle cx="704" cy="410" r="1.7" fill="#5a0a0a" opacity="0.44"/><circle cx="644" cy="432" r="1.4" fill="#5a0a0a" opacity="0.25"/><circle cx="633" cy="463" r="1.1" fill="#5a0a0a" opacity="0.25"/><circle cx="769" cy="431" r="1.7" fill="#5a0a0a" opacity="0.52"/><circle cx="791" cy="422" r="1.6" fill="#5a0a0a" opacity="0.21"/><circle cx="678" cy="381" r="1.3" fill="#5a0a0a" opacity="0.11"/><circle cx="573" cy="425" r="1.2" fill="#5a0a0a" opacity="0.14"/><circle cx="596" cy="336" r="1.3" fill="#5a0a0a" opacity="0.03"/><circle cx="716" cy="546" r="1.4" fill="#5a0a0a" opacity="0.33"/><circle cx="888" cy="575" r="1.2" fill="#5a0a0a" opacity="0.16"/><circle cx="735" cy="581" r="1.6" fill="#5a0a0a" opacity="0.14"/><circle cx="841" cy="431" r="1.6" fill="#5a0a0a" opacity="0.30"/><circle cx="645" cy="396" r="1.4" fill="#5a0a0a" opacity="0.26"/><circle cx="730" cy="497" r="1.8" fill="#5a0a0a" opacity="0.24"/><circle cx="763" cy="592" r="1.8" fill="#5a0a0a" opacity="0.19"/><circle cx="770" cy="582" r="1.4" fill="#5a0a0a" opacity="0.26"/><circle cx="776" cy="495" r="1.4" fill="#5a0a0a" opacity="0.42"/><circle cx="772" cy="494" r="1.7" fill="#5a0a0a" opacity="0.51"/><circle cx="628" cy="494" r="1.2" fill="#5a0a0a" opacity="0.27"/><circle cx="841" cy="609" r="1.0" fill="#5a0a0a" opacity="0.26"/><circle cx="783" cy="568" r="1.3" fill="#5a0a0a" opacity="0.41"/><circle cx="616" cy="550" r="1.6" fill="#5a0a0a" opacity="0.24"/><circle cx="754" cy="522" r="1.0" fill="#5a0a0a" opacity="0.29"/><circle cx="796" cy="518" r="1.6" fill="#5a0a0a" opacity="0.50"/><circle cx="779" cy="473" r="1.3" fill="#5a0a0a" opacity="0.54"/><circle cx="842" cy="545" r="1.6" fill="#5a0a0a" opacity="0.30"/><circle cx="890" cy="585" r="1.6" fill="#5a0a0a" opacity="0.06"/><circle cx="749" cy="446" r="1.4" fill="#5a0a0a" opacity="0.30"/><circle cx="584" cy="476" r="1.2" fill="#5a0a0a" opacity="0.26"/><circle cx="674" cy="372" r="1.0" fill="#5a0a0a" opacity="0.00"/><circle cx="708" cy="500" r="1.0" fill="#5a0a0a" opacity="0.39"/><circle cx="805" cy="613" r="1.3" fill="#5a0a0a" opacity="0.32"/><circle cx="669" cy="370" r="1.2" fill="#5a0a0a" opacity="0.05"/><circle cx="679" cy="553" r="1.8" fill="#5a0a0a" opacity="0.42"/><circle cx="628" cy="491" r="1.3" fill="#5a0a0a" opacity="0.37"/><circle cx="798" cy="500" r="1.6" fill="#5a0a0a" opacity="0.38"/><circle cx="627" cy="555" r="1.2" fill="#5a0a0a" opacity="0.01"/><circle cx="694" cy="492" r="1.0" fill="#5a0a0a" opacity="0.33"/><circle cx="892" cy="501" r="1.4" fill="#5a0a0a" opacity="0.06"/><circle cx="733" cy="466" r="1.5" fill="#5a0a0a" opacity="0.30"/><circle cx="796" cy="472" r="1.6" fill="#5a0a0a" opacity="0.32"/><circle cx="727" cy="495" r="1.0" fill="#5a0a0a" opacity="0.24"/><circle cx="719" cy="586" r="1.6" fill="#5a0a0a" opacity="0.07"/><circle cx="628" cy="381" r="1.1" fill="#5a0a0a" opacity="0.48"/><circle cx="625" cy="436" r="1.1" fill="#5a0a0a" opacity="0.52"/><circle cx="632" cy="409" r="1.5" fill="#5a0a0a" opacity="0.45"/><circle cx="573" cy="524" r="1.4" fill="#5a0a0a" opacity="0.15"/><circle cx="844" cy="618" r="1.0" fill="#5a0a0a" opacity="0.36"/><circle cx="569" cy="543" r="1.4" fill="#5a0a0a" opacity="0.07"/><circle cx="675" cy="573" r="1.5" fill="#5a0a0a" opacity="0.07"/><circle cx="723" cy="579" r="1.7" fill="#5a0a0a" opacity="0.21"/><circle cx="762" cy="485" r="1.2" fill="#5a0a0a" opacity="0.48"/><circle cx="571" cy="487" r="1.1" fill="#5a0a0a" opacity="0.14"/><circle cx="678" cy="411" r="1.6" fill="#5a0a0a" opacity="0.40"/><circle cx="691" cy="537" r="1.6" fill="#5a0a0a" opacity="0.35"/><circle cx="624" cy="459" r="1.5" fill="#5a0a0a" opacity="0.54"/><circle cx="785" cy="613" r="1.7" fill="#5a0a0a" opacity="0.03"/><circle cx="810" cy="464" r="1.6" fill="#5a0a0a" opacity="0.30"/><circle cx="651" cy="414" r="1.5" fill="#5a0a0a" opacity="0.43"/><circle cx="883" cy="527" r="1.7" fill="#5a0a0a" opacity="0.16"/><circle cx="675" cy="381" r="1.1" fill="#5a0a0a" opacity="0.06"/><circle cx="666" cy="418" r="1.2" fill="#5a0a0a" opacity="0.21"/><circle cx="648" cy="444" r="1.4" fill="#5a0a0a" opacity="0.39"/><circle cx="659" cy="510" r="1.2" fill="#5a0a0a" opacity="0.51"/><circle cx="882" cy="521" r="1.3" fill="#5a0a0a" opacity="0.32"/><circle cx="755" cy="424" r="1.3" fill="#5a0a0a" opacity="0.15"/><circle cx="694" cy="486" r="1.1" fill="#5a0a0a" opacity="0.45"/><circle cx="704" cy="459" r="1.6" fill="#5a0a0a" opacity="0.30"/><circle cx="587" cy="545" r="1.6" fill="#5a0a0a" opacity="0.21"/><circle cx="736" cy="466" r="1.1" fill="#5a0a0a" opacity="0.30"/><circle cx="678" cy="453" r="1.0" fill="#5a0a0a" opacity="0.23"/><circle cx="874" cy="630" r="1.1" fill="#5a0a0a" opacity="0.32"/><circle cx="618" cy="431" r="1.2" fill="#5a0a0a" opacity="0.27"/><circle cx="571" cy="485" r="1.6" fill="#5a0a0a" opacity="0.09"/><circle cx="731" cy="410" r="1.4" fill="#5a0a0a" opacity="0.16"/><circle cx="614" cy="513" r="1.4" fill="#5a0a0a" opacity="0.44"/><circle cx="677" cy="536" r="1.2" fill="#5a0a0a" opacity="0.38"/><circle cx="626" cy="427" r="1.1" fill="#5a0a0a" opacity="0.30"/><circle cx="747" cy="406" r="1.1" fill="#5a0a0a" opacity="0.03"/><circle cx="667" cy="402" r="1.3" fill="#5a0a0a" opacity="0.49"/><circle cx="675" cy="498" r="1.0" fill="#5a0a0a" opacity="0.44"/><circle cx="783" cy="599" r="1.2" fill="#5a0a0a" opacity="0.23"/><circle cx="776" cy="539" r="1.7" fill="#5a0a0a" opacity="0.31"/><circle cx="656" cy="521" r="1.2" fill="#5a0a0a" opacity="0.44"/><circle cx="603" cy="384" r="1.5" fill="#5a0a0a" opacity="0.52"/><circle cx="836" cy="441" r="1.7" fill="#5a0a0a" opacity="0.29"/><circle cx="775" cy="520" r="1.0" fill="#5a0a0a" opacity="0.40"/><circle cx="835" cy="628" r="1.7" fill="#5a0a0a" opacity="0.15"/><circle cx="715" cy="527" r="1.7" fill="#5a0a0a" opacity="0.28"/><circle cx="749" cy="500" r="1.2" fill="#5a0a0a" opacity="0.50"/><circle cx="595" cy="340" r="1.3" fill="#5a0a0a" opacity="0.05"/><circle cx="889" cy="483" r="1.0" fill="#5a0a0a" opacity="0.04"/><circle cx="669" cy="390" r="1.3" fill="#5a0a0a" opacity="0.36"/><circle cx="678" cy="518" r="1.2" fill="#5a0a0a" opacity="0.40"/><circle cx="880" cy="523" r="1.3" fill="#5a0a0a" opacity="0.37"/><circle cx="760" cy="568" r="1.4" fill="#5a0a0a" opacity="0.34"/><circle cx="678" cy="411" r="1.2" fill="#5a0a0a" opacity="0.50"/><circle cx="722" cy="579" r="1.1" fill="#5a0a0a" opacity="0.20"/><circle cx="840" cy="427" r="1.3" fill="#5a0a0a" opacity="0.42"/><circle cx="660" cy="359" r="1.7" fill="#5a0a0a" opacity="0.00"/><circle cx="714" cy="563" r="1.6" fill="#5a0a0a" opacity="0.49"/><circle cx="862" cy="499" r="1.5" fill="#5a0a0a" opacity="0.25"/><circle cx="676" cy="520" r="1.4" fill="#5a0a0a" opacity="0.43"/><circle cx="843" cy="648" r="1.8" fill="#5a0a0a" opacity="0.03"/><circle cx="835" cy="607" r="1.5" fill="#5a0a0a" opacity="0.53"/><circle cx="861" cy="520" r="1.6" fill="#5a0a0a" opacity="0.36"/><circle cx="608" cy="447" r="1.6" fill="#5a0a0a" opacity="0.42"/><circle cx="884" cy="560" r="1.6" fill="#5a0a0a" opacity="0.26"/><circle cx="760" cy="593" r="1.4" fill="#5a0a0a" opacity="0.12"/><circle cx="597" cy="362" r="1.5" fill="#5a0a0a" opacity="0.22"/><circle cx="721" cy="417" r="1.4" fill="#5a0a0a" opacity="0.37"/><circle cx="628" cy="512" r="1.8" fill="#5a0a0a" opacity="0.25"/><circle cx="635" cy="395" r="1.1" fill="#5a0a0a" opacity="0.20"/><circle cx="781" cy="555" r="1.6" fill="#5a0a0a" opacity="0.28"/><circle cx="612" cy="541" r="1.2" fill="#5a0a0a" opacity="0.39"/><circle cx="699" cy="523" r="1.3" fill="#5a0a0a" opacity="0.51"/><circle cx="637" cy="363" r="1.4" fill="#5a0a0a" opacity="0.30"/><circle cx="880" cy="509" r="1.6" fill="#5a0a0a" opacity="0.15"/><circle cx="878" cy="610" r="1.4" fill="#5a0a0a" opacity="0.14"/><circle cx="851" cy="640" r="1.4" fill="#5a0a0a" opacity="0.12"/><circle cx="760" cy="532" r="1.1" fill="#5a0a0a" opacity="0.32"/><circle cx="698" cy="458" r="1.6" fill="#5a0a0a" opacity="0.44"/><circle cx="887" cy="622" r="1.5" fill="#5a0a0a" opacity="0.05"/><circle cx="675" cy="536" r="1.3" fill="#5a0a0a" opacity="0.52"/><circle cx="703" cy="567" r="1.1" fill="#5a0a0a" opacity="0.42"/><circle cx="586" cy="553" r="1.8" fill="#5a0a0a" opacity="0.18"/><circle cx="849" cy="551" r="1.1" fill="#5a0a0a" opacity="0.38"/><circle cx="871" cy="578" r="1.5" fill="#5a0a0a" opacity="0.41"/><circle cx="777" cy="513" r="1.4" fill="#5a0a0a" opacity="0.21"/><circle cx="703" cy="481" r="1.7" fill="#5a0a0a" opacity="0.34"/><circle cx="641" cy="534" r="1.4" fill="#5a0a0a" opacity="0.40"/><circle cx="590" cy="394" r="1.2" fill="#5a0a0a" opacity="0.47"/><circle cx="712" cy="510" r="1.2" fill="#5a0a0a" opacity="0.32"/><circle cx="602" cy="370" r="1.7" fill="#5a0a0a" opacity="0.36"/><circle cx="781" cy="532" r="1.5" fill="#5a0a0a" opacity="0.52"/><circle cx="650" cy="355" r="1.2" fill="#5a0a0a" opacity="0.07"/><circle cx="625" cy="457" r="1.5" fill="#5a0a0a" opacity="0.41"/><circle cx="800" cy="500" r="1.6" fill="#5a0a0a" opacity="0.48"/><circle cx="775" cy="430" r="1.1" fill="#5a0a0a" opacity="0.27"/><circle cx="776" cy="509" r="1.7" fill="#5a0a0a" opacity="0.26"/><circle cx="774" cy="432" r="1.0" fill="#5a0a0a" opacity="0.27"/><circle cx="598" cy="383" r="1.0" fill="#5a0a0a" opacity="0.54"/><circle cx="706" cy="501" r="1.2" fill="#5a0a0a" opacity="0.53"/><circle cx="829" cy="619" r="1.8" fill="#5a0a0a" opacity="0.38"/><circle cx="760" cy="520" r="1.4" fill="#5a0a0a" opacity="0.53"/><circle cx="609" cy="508" r="1.6" fill="#5a0a0a" opacity="0.26"/><circle cx="867" cy="582" r="1.2" fill="#5a0a0a" opacity="0.44"/><circle cx="762" cy="451" r="1.2" fill="#5a0a0a" opacity="0.24"/><circle cx="572" cy="474" r="1.1" fill="#5a0a0a" opacity="0.12"/><circle cx="671" cy="376" r="1.2" fill="#5a0a0a" opacity="0.07"/><circle cx="773" cy="511" r="1.8" fill="#5a0a0a" opacity="0.49"/><circle cx="642" cy="444" r="1.6" fill="#5a0a0a" opacity="0.40"/><circle cx="634" cy="373" r="1.7" fill="#5a0a0a" opacity="0.27"/><circle cx="728" cy="490" r="1.1" fill="#5a0a0a" opacity="0.53"/><circle cx="768" cy="554" r="1.3" fill="#5a0a0a" opacity="0.45"/><circle cx="691" cy="390" r="1.3" fill="#5a0a0a" opacity="0.09"/><circle cx="697" cy="532" r="1.4" fill="#5a0a0a" opacity="0.51"/><circle cx="794" cy="417" r="1.1" fill="#5a0a0a" opacity="0.20"/><circle cx="669" cy="505" r="1.4" fill="#5a0a0a" opacity="0.34"/><circle cx="783" cy="449" r="1.1" fill="#5a0a0a" opacity="0.33"/><circle cx="791" cy="579" r="1.3" fill="#5a0a0a" opacity="0.24"/><circle cx="776" cy="531" r="1.4" fill="#5a0a0a" opacity="0.54"/><circle cx="686" cy="505" r="1.0" fill="#5a0a0a" opacity="0.25"/><circle cx="627" cy="393" r="1.1" fill="#5a0a0a" opacity="0.24"/><circle cx="877" cy="527" r="1.4" fill="#5a0a0a" opacity="0.28"/><circle cx="859" cy="576" r="1.0" fill="#5a0a0a" opacity="0.20"/><circle cx="572" cy="573" r="1.0" fill="#5a0a0a" opacity="0.07"/><circle cx="739" cy="454" r="1.2" fill="#5a0a0a" opacity="0.53"/><circle cx="888" cy="565" r="1.1" fill="#5a0a0a" opacity="0.09"/><circle cx="596" cy="461" r="1.5" fill="#5a0a0a" opacity="0.27"/><circle cx="588" cy="443" r="1.4" fill="#5a0a0a" opacity="0.51"/><circle cx="867" cy="605" r="1.7" fill="#5a0a0a" opacity="0.30"/><circle cx="762" cy="509" r="1.2" fill="#5a0a0a" opacity="0.39"/><circle cx="779" cy="415" r="1.4" fill="#5a0a0a" opacity="0.08"/><circle cx="789" cy="427" r="1.1" fill="#5a0a0a" opacity="0.46"/><circle cx="573" cy="376" r="1.3" fill="#5a0a0a" opacity="0.08"/><circle cx="751" cy="496" r="1.1" fill="#5a0a0a" opacity="0.49"/><circle cx="618" cy="367" r="1.4" fill="#5a0a0a" opacity="0.42"/><circle cx="871" cy="488" r="1.1" fill="#5a0a0a" opacity="0.42"/><circle cx="583" cy="539" r="1.6" fill="#5a0a0a" opacity="0.16"/><circle cx="611" cy="411" r="1.4" fill="#5a0a0a" opacity="0.50"/><circle cx="836" cy="460" r="1.4" fill="#5a0a0a" opacity="0.27"/><circle cx="659" cy="462" r="1.5" fill="#5a0a0a" opacity="0.53"/><circle cx="581" cy="528" r="1.5" fill="#5a0a0a" opacity="0.18"/><circle cx="595" cy="442" r="1.3" fill="#5a0a0a" opacity="0.44"/><circle cx="894" cy="552" r="1.8" fill="#5a0a0a" opacity="0.06"/><circle cx="712" cy="488" r="1.4" fill="#5a0a0a" opacity="0.24"/><circle cx="782" cy="569" r="1.4" fill="#5a0a0a" opacity="0.40"/><circle cx="865" cy="576" r="1.8" fill="#5a0a0a" opacity="0.53"/><circle cx="782" cy="592" r="1.3" fill="#5a0a0a" opacity="0.25"/><circle cx="621" cy="371" r="1.1" fill="#5a0a0a" opacity="0.26"/><circle cx="599" cy="502" r="1.7" fill="#5a0a0a" opacity="0.24"/><circle cx="652" cy="548" r="1.1" fill="#5a0a0a" opacity="0.34"/><circle cx="746" cy="458" r="1.7" fill="#5a0a0a" opacity="0.36"/><circle cx="575" cy="564" r="1.0" fill="#5a0a0a" opacity="0.14"/><circle cx="635" cy="468" r="1.3" fill="#5a0a0a" opacity="0.44"/><circle cx="780" cy="448" r="1.2" fill="#5a0a0a" opacity="0.47"/><circle cx="582" cy="526" r="1.6" fill="#5a0a0a" opacity="0.34"/><circle cx="782" cy="593" r="1.5" fill="#5a0a0a" opacity="0.42"/><circle cx="642" cy="367" r="1.3" fill="#5a0a0a" opacity="0.17"/><circle cx="756" cy="509" r="1.2" fill="#5a0a0a" opacity="0.41"/><circle cx="722" cy="564" r="1.6" fill="#5a0a0a" opacity="0.48"/><circle cx="758" cy="553" r="1.2" fill="#5a0a0a" opacity="0.33"/><circle cx="740" cy="421" r="1.1" fill="#5a0a0a" opacity="0.23"/><circle cx="737" cy="537" r="1.0" fill="#5a0a0a" opacity="0.45"/><circle cx="708" cy="484" r="1.2" fill="#5a0a0a" opacity="0.50"/><circle cx="740" cy="426" r="1.6" fill="#5a0a0a" opacity="0.41"/><circle cx="568" cy="539" r="1.3" fill="#5a0a0a" opacity="0.03"/><circle cx="634" cy="489" r="1.7" fill="#5a0a0a" opacity="0.24"/><circle cx="568" cy="532" r="1.5" fill="#5a0a0a" opacity="0.02"/><circle cx="748" cy="533" r="1.8" fill="#5a0a0a" opacity="0.35"/><circle cx="856" cy="585" r="1.2" fill="#5a0a0a" opacity="0.22"/><circle cx="589" cy="367" r="1.7" fill="#5a0a0a" opacity="0.21"/><circle cx="727" cy="472" r="1.7" fill="#5a0a0a" opacity="0.42"/><circle cx="868" cy="583" r="1.6" fill="#5a0a0a" opacity="0.29"/><circle cx="589" cy="487" r="1.6" fill="#5a0a0a" opacity="0.45"/><circle cx="585" cy="356" r="1.7" fill="#5a0a0a" opacity="0.22"/><circle cx="649" cy="394" r="1.1" fill="#5a0a0a" opacity="0.47"/><circle cx="844" cy="435" r="1.5" fill="#5a0a0a" opacity="0.33"/><circle cx="741" cy="484" r="1.4" fill="#5a0a0a" opacity="0.29"/><circle cx="633" cy="470" r="1.4" fill="#5a0a0a" opacity="0.36"/><circle cx="678" cy="540" r="1.7" fill="#5a0a0a" opacity="0.25"/><circle cx="687" cy="499" r="1.6" fill="#5a0a0a" opacity="0.29"/><circle cx="583" cy="544" r="1.8" fill="#5a0a0a" opacity="0.28"/><circle cx="788" cy="587" r="1.5" fill="#5a0a0a" opacity="0.44"/><circle cx="770" cy="498" r="1.5" fill="#5a0a0a" opacity="0.32"/><circle cx="633" cy="450" r="1.5" fill="#5a0a0a" opacity="0.37"/><circle cx="592" cy="421" r="1.6" fill="#5a0a0a" opacity="0.25"/><circle cx="712" cy="487" r="1.1" fill="#5a0a0a" opacity="0.26"/><circle cx="608" cy="433" r="1.2" fill="#5a0a0a" opacity="0.46"/><circle cx="859" cy="478" r="1.7" fill="#5a0a0a" opacity="0.23"/><circle cx="854" cy="435" r="1.5" fill="#5a0a0a" opacity="0.19"/><circle cx="759" cy="433" r="1.5" fill="#5a0a0a" opacity="0.24"/><circle cx="798" cy="420" r="1.5" fill="#5a0a0a" opacity="0.25"/><circle cx="618" cy="439" r="1.6" fill="#5a0a0a" opacity="0.44"/><circle cx="694" cy="447" r="1.7" fill="#5a0a0a" opacity="0.37"/><circle cx="673" cy="383" r="1.4" fill="#5a0a0a" opacity="0.14"/><circle cx="567" cy="541" r="1.7" fill="#5a0a0a" opacity="0.02"/><circle cx="685" cy="444" r="1.6" fill="#5a0a0a" opacity="0.48"/><circle cx="677" cy="529" r="1.3" fill="#5a0a0a" opacity="0.45"/><circle cx="874" cy="563" r="1.6" fill="#5a0a0a" opacity="0.27"/><circle cx="866" cy="570" r="1.3" fill="#5a0a0a" opacity="0.44"/><circle cx="775" cy="525" r="1.7" fill="#5a0a0a" opacity="0.31"/><circle cx="711" cy="412" r="1.4" fill="#5a0a0a" opacity="0.29"/><circle cx="661" cy="361" r="1.1" fill="#5a0a0a" opacity="0.01"/><circle cx="747" cy="595" r="1.3" fill="#5a0a0a" opacity="0.04"/><circle cx="675" cy="438" r="1.1" fill="#5a0a0a" opacity="0.48"/><circle cx="731" cy="586" r="1.1" fill="#5a0a0a" opacity="0.15"/><circle cx="585" cy="393" r="1.8" fill="#5a0a0a" opacity="0.20"/><circle cx="582" cy="471" r="1.6" fill="#5a0a0a" opacity="0.49"/><circle cx="706" cy="580" r="1.1" fill="#5a0a0a" opacity="0.13"/><circle cx="715" cy="407" r="1.4" fill="#5a0a0a" opacity="0.12"/><circle cx="709" cy="404" r="1.3" fill="#5a0a0a" opacity="0.21"/><circle cx="815" cy="491" r="1.2" fill="#5a0a0a" opacity="0.41"/><circle cx="816" cy="410" r="1.6" fill="#5a0a0a" opacity="0.05"/><circle cx="821" cy="516" r="1.3" fill="#5a0a0a" opacity="0.53"/><circle cx="599" cy="573" r="1.1" fill="#5a0a0a" opacity="0.21"/><circle cx="656" cy="532" r="1.4" fill="#5a0a0a" opacity="0.51"/><circle cx="766" cy="467" r="1.6" fill="#5a0a0a" opacity="0.47"/><circle cx="779" cy="454" r="1.5" fill="#5a0a0a" opacity="0.40"/><circle cx="597" cy="421" r="1.1" fill="#5a0a0a" opacity="0.38"/><circle cx="803" cy="593" r="1.6" fill="#5a0a0a" opacity="0.37"/><circle cx="716" cy="409" r="1.3" fill="#5a0a0a" opacity="0.16"/><circle cx="788" cy="557" r="1.5" fill="#5a0a0a" opacity="0.48"/><circle cx="659" cy="533" r="1.6" fill="#5a0a0a" opacity="0.42"/><circle cx="620" cy="426" r="1.2" fill="#5a0a0a" opacity="0.31"/><circle cx="796" cy="456" r="1.2" fill="#5a0a0a" opacity="0.53"/><circle cx="766" cy="467" r="1.0" fill="#5a0a0a" opacity="0.32"/><circle cx="689" cy="412" r="1.4" fill="#5a0a0a" opacity="0.51"/><circle cx="763" cy="583" r="1.7" fill="#5a0a0a" opacity="0.16"/><circle cx="730" cy="470" r="1.7" fill="#5a0a0a" opacity="0.29"/><circle cx="772" cy="463" r="1.7" fill="#5a0a0a" opacity="0.38"/><circle cx="787" cy="502" r="1.3" fill="#5a0a0a" opacity="0.31"/><circle cx="704" cy="542" r="1.8" fill="#5a0a0a" opacity="0.45"/><circle cx="569" cy="382" r="1.7" fill="#5a0a0a" opacity="0.03"/><circle cx="831" cy="494" r="1.7" fill="#5a0a0a" opacity="0.27"/><circle cx="721" cy="477" r="1.5" fill="#5a0a0a" opacity="0.33"/><circle cx="575" cy="498" r="1.0" fill="#5a0a0a" opacity="0.24"/><circle cx="577" cy="433" r="1.1" fill="#5a0a0a" opacity="0.22"/><circle cx="726" cy="401" r="1.3" fill="#5a0a0a" opacity="0.02"/><circle cx="887" cy="621" r="1.8" fill="#5a0a0a" opacity="0.05"/><circle cx="736" cy="433" r="1.6" fill="#5a0a0a" opacity="0.49"/><circle cx="617" cy="557" r="1.5" fill="#5a0a0a" opacity="0.07"/><circle cx="582" cy="580" r="1.4" fill="#5a0a0a" opacity="0.03"/><circle cx="664" cy="568" r="1.3" fill="#5a0a0a" opacity="0.05"/><circle cx="706" cy="573" r="1.5" fill="#5a0a0a" opacity="0.32"/><circle cx="738" cy="563" r="1.5" fill="#5a0a0a" opacity="0.26"/><circle cx="749" cy="483" r="1.4" fill="#5a0a0a" opacity="0.37"/><circle cx="735" cy="533" r="1.3" fill="#5a0a0a" opacity="0.25"/><circle cx="831" cy="441" r="1.2" fill="#5a0a0a" opacity="0.21"/><circle cx="578" cy="513" r="1.8" fill="#5a0a0a" opacity="0.18"/><circle cx="778" cy="444" r="1.1" fill="#5a0a0a" opacity="0.25"/><circle cx="592" cy="533" r="1.6" fill="#5a0a0a" opacity="0.23"/><circle cx="644" cy="527" r="1.1" fill="#5a0a0a" opacity="0.49"/><circle cx="676" cy="554" r="1.2" fill="#5a0a0a" opacity="0.25"/><circle cx="580" cy="368" r="1.2" fill="#5a0a0a" opacity="0.23"/><circle cx="869" cy="580" r="1.7" fill="#5a0a0a" opacity="0.47"/><circle cx="751" cy="530" r="1.1" fill="#5a0a0a" opacity="0.49"/><circle cx="762" cy="418" r="1.2" fill="#5a0a0a" opacity="0.11"/><circle cx="642" cy="377" r="1.5" fill="#5a0a0a" opacity="0.44"/><circle cx="780" cy="609" r="1.2" fill="#5a0a0a" opacity="0.07"/><circle cx="618" cy="477" r="1.3" fill="#5a0a0a" opacity="0.54"/><circle cx="726" cy="577" r="1.6" fill="#5a0a0a" opacity="0.19"/><circle cx="719" cy="484" r="1.3" fill="#5a0a0a" opacity="0.27"/><circle cx="822" cy="487" r="1.3" fill="#5a0a0a" opacity="0.21"/><circle cx="740" cy="415" r="1.7" fill="#5a0a0a" opacity="0.22"/><circle cx="761" cy="543" r="1.6" fill="#5a0a0a" opacity="0.46"/><circle cx="658" cy="433" r="1.7" fill="#5a0a0a" opacity="0.55"/><circle cx="659" cy="512" r="1.0" fill="#5a0a0a" opacity="0.32"/><circle cx="635" cy="414" r="1.5" fill="#5a0a0a" opacity="0.29"/><circle cx="582" cy="544" r="1.1" fill="#5a0a0a" opacity="0.28"/><circle cx="870" cy="470" r="1.7" fill="#5a0a0a" opacity="0.44"/><circle cx="724" cy="577" r="1.2" fill="#5a0a0a" opacity="0.12"/><circle cx="638" cy="530" r="1.6" fill="#5a0a0a" opacity="0.25"/><circle cx="609" cy="430" r="1.2" fill="#5a0a0a" opacity="0.32"/><circle cx="689" cy="513" r="1.2" fill="#5a0a0a" opacity="0.27"/><circle cx="871" cy="483" r="1.3" fill="#5a0a0a" opacity="0.35"/><circle cx="797" cy="451" r="1.5" fill="#5a0a0a" opacity="0.36"/><circle cx="837" cy="425" r="1.0" fill="#5a0a0a" opacity="0.24"/><circle cx="670" cy="419" r="1.5" fill="#5a0a0a" opacity="0.24"/><circle cx="666" cy="512" r="1.4" fill="#5a0a0a" opacity="0.41"/><circle cx="620" cy="417" r="1.6" fill="#5a0a0a" opacity="0.55"/><circle cx="618" cy="359" r="1.7" fill="#5a0a0a" opacity="0.50"/><circle cx="850" cy="487" r="1.6" fill="#5a0a0a" opacity="0.20"/><circle cx="765" cy="417" r="1.3" fill="#5a0a0a" opacity="0.14"/><circle cx="876" cy="540" r="1.2" fill="#5a0a0a" opacity="0.39"/><circle cx="714" cy="462" r="1.0" fill="#5a0a0a" opacity="0.34"/><circle cx="795" cy="571" r="1.2" fill="#5a0a0a" opacity="0.41"/><circle cx="647" cy="419" r="1.3" fill="#5a0a0a" opacity="0.38"/><circle cx="704" cy="399" r="1.0" fill="#5a0a0a" opacity="0.21"/><circle cx="625" cy="407" r="1.0" fill="#5a0a0a" opacity="0.28"/><circle cx="772" cy="565" r="1.1" fill="#5a0a0a" opacity="0.38"/><circle cx="782" cy="572" r="1.5" fill="#5a0a0a" opacity="0.46"/><circle cx="590" cy="373" r="1.6" fill="#5a0a0a" opacity="0.34"/><circle cx="791" cy="492" r="1.7" fill="#5a0a0a" opacity="0.32"/><circle cx="679" cy="529" r="1.8" fill="#5a0a0a" opacity="0.27"/><circle cx="660" cy="365" r="1.5" fill="#5a0a0a" opacity="0.07"/><circle cx="725" cy="450" r="1.3" fill="#5a0a0a" opacity="0.40"/><circle cx="615" cy="490" r="1.1" fill="#5a0a0a" opacity="0.38"/><circle cx="731" cy="468" r="1.3" fill="#5a0a0a" opacity="0.48"/><circle cx="641" cy="507" r="1.8" fill="#5a0a0a" opacity="0.33"/><circle cx="705" cy="559" r="1.4" fill="#5a0a0a" opacity="0.47"/><circle cx="733" cy="489" r="1.4" fill="#5a0a0a" opacity="0.42"/><circle cx="626" cy="424" r="1.2" fill="#5a0a0a" opacity="0.35"/><circle cx="669" cy="430" r="1.8" fill="#5a0a0a" opacity="0.42"/><circle cx="779" cy="532" r="1.5" fill="#5a0a0a" opacity="0.22"/><circle cx="769" cy="597" r="1.5" fill="#5a0a0a" opacity="0.14"/><circle cx="682" cy="457" r="1.2" fill="#5a0a0a" opacity="0.47"/><circle cx="573" cy="519" r="1.2" fill="#5a0a0a" opacity="0.20"/><circle cx="569" cy="441" r="1.6" fill="#5a0a0a" opacity="0.07"/><circle cx="800" cy="619" r="1.5" fill="#5a0a0a" opacity="0.12"/><circle cx="823" cy="543" r="1.2" fill="#5a0a0a" opacity="0.30"/><circle cx="755" cy="431" r="1.6" fill="#5a0a0a" opacity="0.29"/><circle cx="608" cy="462" r="1.2" fill="#5a0a0a" opacity="0.34"/><circle cx="579" cy="451" r="1.5" fill="#5a0a0a" opacity="0.34"/><circle cx="793" cy="578" r="1.7" fill="#5a0a0a" opacity="0.32"/><circle cx="824" cy="491" r="1.5" fill="#5a0a0a" opacity="0.45"/><circle cx="577" cy="569" r="1.8" fill="#5a0a0a" opacity="0.09"/><circle cx="696" cy="482" r="1.5" fill="#5a0a0a" opacity="0.31"/><circle cx="641" cy="550" r="1.3" fill="#5a0a0a" opacity="0.07"/><circle cx="736" cy="531" r="1.1" fill="#5a0a0a" opacity="0.49"/><circle cx="700" cy="413" r="1.5" fill="#5a0a0a" opacity="0.51"/><circle cx="619" cy="369" r="1.6" fill="#5a0a0a" opacity="0.39"/><circle cx="684" cy="424" r="1.7" fill="#5a0a0a" opacity="0.47"/><circle cx="811" cy="496" r="1.3" fill="#5a0a0a" opacity="0.24"/><circle cx="648" cy="549" r="1.4" fill="#5a0a0a" opacity="0.29"/><circle cx="638" cy="450" r="1.3" fill="#5a0a0a" opacity="0.30"/><circle cx="793" cy="443" r="1.3" fill="#5a0a0a" opacity="0.47"/><circle cx="586" cy="549" r="1.4" fill="#5a0a0a" opacity="0.32"/><circle cx="605" cy="571" r="1.3" fill="#5a0a0a" opacity="0.08"/><circle cx="630" cy="541" r="1.6" fill="#5a0a0a" opacity="0.20"/><circle cx="568" cy="478" r="1.3" fill="#5a0a0a" opacity="0.08"/><circle cx="730" cy="411" r="1.7" fill="#5a0a0a" opacity="0.11"/><circle cx="680" cy="452" r="1.1" fill="#5a0a0a" opacity="0.42"/><circle cx="628" cy="553" r="1.6" fill="#5a0a0a" opacity="0.01"/><circle cx="895" cy="550" r="1.7" fill="#5a0a0a" opacity="0.04"/><circle cx="579" cy="366" r="1.1" fill="#5a0a0a" opacity="0.11"/><circle cx="895" cy="570" r="1.5" fill="#5a0a0a" opacity="0.02"/><circle cx="728" cy="446" r="1.7" fill="#5a0a0a" opacity="0.46"/><circle cx="580" cy="534" r="1.7" fill="#5a0a0a" opacity="0.23"/><circle cx="604" cy="347" r="1.4" fill="#5a0a0a" opacity="0.16"/><circle cx="749" cy="559" r="1.3" fill="#5a0a0a" opacity="0.41"/><circle cx="766" cy="521" r="1.4" fill="#5a0a0a" opacity="0.27"/><circle cx="654" cy="556" r="1.8" fill="#5a0a0a" opacity="0.10"/><circle cx="578" cy="481" r="1.8" fill="#5a0a0a" opacity="0.37"/><circle cx="636" cy="535" r="1.1" fill="#5a0a0a" opacity="0.39"/><circle cx="683" cy="434" r="1.3" fill="#5a0a0a" opacity="0.24"/><circle cx="683" cy="401" r="1.0" fill="#5a0a0a" opacity="0.28"/><circle cx="602" cy="483" r="1.2" fill="#5a0a0a" opacity="0.36"/><circle cx="744" cy="487" r="1.4" fill="#5a0a0a" opacity="0.22"/><circle cx="876" cy="629" r="1.7" fill="#5a0a0a" opacity="0.19"/><circle cx="856" cy="433" r="1.8" fill="#5a0a0a" opacity="0.23"/><circle cx="575" cy="404" r="1.3" fill="#5a0a0a" opacity="0.21"/><circle cx="602" cy="369" r="1.8" fill="#5a0a0a" opacity="0.37"/><circle cx="605" cy="434" r="1.4" fill="#5a0a0a" opacity="0.42"/><circle cx="744" cy="589" r="1.4" fill="#5a0a0a" opacity="0.15"/><circle cx="796" cy="533" r="1.1" fill="#5a0a0a" opacity="0.31"/><circle cx="587" cy="480" r="1.2" fill="#5a0a0a" opacity="0.55"/><circle cx="593" cy="539" r="1.2" fill="#5a0a0a" opacity="0.26"/><circle cx="840" cy="605" r="1.4" fill="#5a0a0a" opacity="0.24"/><circle cx="768" cy="580" r="1.7" fill="#5a0a0a" opacity="0.46"/><circle cx="642" cy="513" r="1.6" fill="#5a0a0a" opacity="0.42"/><circle cx="772" cy="569" r="1.3" fill="#5a0a0a" opacity="0.22"/><circle cx="658" cy="524" r="1.6" fill="#5a0a0a" opacity="0.34"/><circle cx="773" cy="490" r="1.3" fill="#5a0a0a" opacity="0.24"/><circle cx="735" cy="485" r="1.5" fill="#5a0a0a" opacity="0.28"/><circle cx="713" cy="412" r="1.4" fill="#5a0a0a" opacity="0.30"/><circle cx="835" cy="584" r="1.8" fill="#5a0a0a" opacity="0.40"/><circle cx="566" cy="449" r="1.5" fill="#5a0a0a" opacity="0.03"/><circle cx="605" cy="489" r="1.1" fill="#5a0a0a" opacity="0.28"/><circle cx="732" cy="572" r="1.3" fill="#5a0a0a" opacity="0.41"/><circle cx="670" cy="376" r="1.6" fill="#5a0a0a" opacity="0.13"/><circle cx="786" cy="579" r="1.4" fill="#5a0a0a" opacity="0.22"/><circle cx="612" cy="511" r="1.5" fill="#5a0a0a" opacity="0.21"/><circle cx="729" cy="582" r="1.0" fill="#5a0a0a" opacity="0.17"/><circle cx="885" cy="619" r="1.5" fill="#5a0a0a" opacity="0.12"/><circle cx="664" cy="537" r="1.5" fill="#5a0a0a" opacity="0.33"/><circle cx="627" cy="413" r="1.0" fill="#5a0a0a" opacity="0.49"/><circle cx="664" cy="534" r="1.4" fill="#5a0a0a" opacity="0.39"/><circle cx="654" cy="371" r="1.6" fill="#5a0a0a" opacity="0.21"/><circle cx="680" cy="511" r="1.0" fill="#5a0a0a" opacity="0.46"/><circle cx="677" cy="439" r="1.2" fill="#5a0a0a" opacity="0.22"/></g><polygon points="600,445 624,432 662,426 683,441 700,447 730,447 756,443 781,449 803,466 811,492 815,509 841,517 866,530 883,555 890,566 875,577 854,573 832,562 815,555 798,560 781,573 764,585 747,590 722,581 688,575 662,568 632,555 615,538 611,517 620,492 607,466" fill="#1212a0" filter="url(#b6)"/><g filter="url(#b3)" opacity="0.62"><ellipse cx="621" cy="484" rx="22" ry="8" transform="rotate(185 621 484)" fill="#2e2eff"/><ellipse cx="625" cy="499" rx="18" ry="7" transform="rotate(160 625 499)" fill="#2e2eff"/><ellipse cx="626" cy="469" rx="18" ry="7" transform="rotate(210 626 469)" fill="#2e2eff"/><ellipse cx="633" cy="453" rx="16" ry="7" transform="rotate(235 633 453)" fill="#2e2eff"/><ellipse cx="648" cy="444" rx="18" ry="8" transform="rotate(258 648 444)" fill="#2e2eff"/><ellipse cx="666" cy="446" rx="18" ry="7" transform="rotate(282 666 446)" fill="#2e2eff"/><ellipse cx="680" cy="454" rx="14" ry="6" transform="rotate(305 680 454)" fill="#2e2eff"/><ellipse cx="629" cy="515" rx="18" ry="8" transform="rotate(135 629 515)" fill="#2e2eff"/><ellipse cx="642" cy="528" rx="18" ry="8" transform="rotate(110 642 528)" fill="#2e2eff"/><ellipse cx="661" cy="535" rx="16" ry="7" transform="rotate(85 661 535)" fill="#2e2eff"/><ellipse cx="705" cy="468" rx="22" ry="9" transform="rotate(-50 705 468)" fill="#2e2eff"/><ellipse cx="728" cy="458" rx="16" ry="7" transform="rotate(-80 728 458)" fill="#2e2eff"/><ellipse cx="695" cy="522" rx="18" ry="9" transform="rotate(20 695 522)" fill="#2e2eff"/><ellipse cx="725" cy="548" rx="22" ry="9" transform="rotate(25 725 548)" fill="#2e2eff"/><ellipse cx="750" cy="472" rx="20" ry="9" transform="rotate(-70 750 472)" fill="#2e2eff"/><ellipse cx="772" cy="500" rx="22" ry="9" transform="rotate(-60 772 500)" fill="#2e2eff"/><ellipse cx="762" cy="548" rx="20" ry="9" transform="rotate(35 762 548)" fill="#2e2eff"/><ellipse cx="792" cy="478" rx="16" ry="8" transform="rotate(-70 792 478)" fill="#2e2eff"/><ellipse cx="700" cy="570" rx="20" ry="7" transform="rotate(10 700 570)" fill="#2e2eff"/><ellipse cx="750" cy="582" rx="20" ry="7" transform="rotate(15 750 582)" fill="#2e2eff"/><ellipse cx="740" cy="512" rx="14" ry="8" transform="rotate(-40 740 512)" fill="#2e2eff"/><ellipse cx="675" cy="560" rx="16" ry="7" transform="rotate(25 675 560)" fill="#2e2eff"/><ellipse cx="785" cy="530" rx="14" ry="7" transform="rotate(-40 785 530)" fill="#2e2eff"/><ellipse cx="853" cy="555" rx="20" ry="9" transform="rotate(345 853 555)" fill="#2e2eff"/><ellipse cx="844" cy="536" rx="18" ry="8" transform="rotate(322 844 536)" fill="#2e2eff"/><ellipse cx="863" cy="573" rx="18" ry="8" transform="rotate(5 863 573)" fill="#2e2eff"/><ellipse cx="826" cy="528" rx="12" ry="7" transform="rotate(300 826 528)" fill="#2e2eff"/></g><ellipse cx="688" cy="455" rx="7" ry="4" fill="#06062a" opacity="0.55" filter="url(#b3)"/><ellipse cx="700" cy="545" rx="6" ry="4" fill="#06062a" opacity="0.55" filter="url(#b3)"/><ellipse cx="742" cy="528" rx="6" ry="7" fill="#06062a" opacity="0.55" filter="url(#b3)"/><ellipse cx="832" cy="540" rx="5" ry="4" fill="#06062a" opacity="0.55" filter="url(#b3)"/><ellipse cx="640" cy="520" rx="5" ry="4" fill="#06062a" opacity="0.55" filter="url(#b3)"/><ellipse cx="760" cy="455" rx="5" ry="4" fill="#06062a" opacity="0.55" filter="url(#b3)"/><circle cx="871" cy="596" r="5" fill="#2a2ad8" filter="url(#b2)"/><ellipse cx="672" cy="496" rx="50" ry="32" transform="rotate(20 672 496)" fill="url(#gc)"/><ellipse cx="795" cy="575" rx="62" ry="44" transform="rotate(20 795 575)" fill="url(#gc)"/><ellipse cx="725" cy="590" rx="45" ry="8" transform="rotate(18 725 590)" fill="#1c8c1c" opacity="0.22" filter="url(#b6)"/><g filter="url(#b1)"><circle cx="656.7" cy="479.9" r="1.4" fill="#44f044" opacity="0.68"/><circle cx="655.7" cy="476.6" r="1.5" fill="#44f044" opacity="0.66"/><circle cx="655.5" cy="469.2" r="1.4" fill="#44f044" opacity="0.62"/><circle cx="651.9" cy="449.4" r="1.0" fill="#44f044" opacity="0.51"/><circle cx="652.5" cy="443.8" r="1.2" fill="#44f044" opacity="0.49"/><circle cx="651.4" cy="440.7" r="1.0" fill="#44f044" opacity="0.47"/><circle cx="650.7" cy="437.9" r="1.3" fill="#44f044" opacity="0.45"/><circle cx="650.5" cy="433.3" r="1.0" fill="#44f044" opacity="0.43"/><circle cx="648.9" cy="427.7" r="0.9" fill="#44f044" opacity="0.40"/><circle cx="649.0" cy="424.2" r="1.4" fill="#44f044" opacity="0.38"/><circle cx="648.2" cy="419.3" r="1.0" fill="#44f044" opacity="0.36"/><circle cx="648.7" cy="415.1" r="1.0" fill="#44f044" opacity="0.34"/><circle cx="648.5" cy="412.3" r="1.5" fill="#44f044" opacity="0.32"/><circle cx="646.5" cy="405.1" r="1.4" fill="#44f044" opacity="0.28"/><circle cx="650.8" cy="482.3" r="1.5" fill="#44f044" opacity="0.84"/><circle cx="648.6" cy="481.2" r="1.1" fill="#44f044" opacity="0.82"/><circle cx="644.8" cy="478.5" r="1.2" fill="#44f044" opacity="0.79"/><circle cx="639.5" cy="474.1" r="1.0" fill="#44f044" opacity="0.74"/><circle cx="636.7" cy="472.3" r="1.2" fill="#44f044" opacity="0.72"/><circle cx="627.0" cy="464.1" r="1.1" fill="#44f044" opacity="0.63"/><circle cx="619.4" cy="459.0" r="1.4" fill="#44f044" opacity="0.58"/><circle cx="614.1" cy="455.5" r="1.3" fill="#44f044" opacity="0.53"/><circle cx="611.7" cy="453.5" r="1.3" fill="#44f044" opacity="0.50"/><circle cx="606.7" cy="449.8" r="1.3" fill="#44f044" opacity="0.47"/><circle cx="601.3" cy="445.8" r="1.4" fill="#44f044" opacity="0.42"/><circle cx="586.9" cy="434.7" r="1.1" fill="#44f044" opacity="0.30"/><circle cx="584.6" cy="432.8" r="0.9" fill="#44f044" opacity="0.28"/><circle cx="659.7" cy="492.8" r="1.3" fill="#44f044" opacity="0.55"/><circle cx="660.1" cy="496.9" r="1.5" fill="#44f044" opacity="0.53"/><circle cx="664.1" cy="503.4" r="1.2" fill="#44f044" opacity="0.50"/><circle cx="665.7" cy="507.8" r="1.0" fill="#44f044" opacity="0.48"/><circle cx="669.2" cy="516.5" r="1.2" fill="#44f044" opacity="0.44"/><circle cx="669.2" cy="520.0" r="1.4" fill="#44f044" opacity="0.43"/><circle cx="670.6" cy="522.8" r="1.0" fill="#44f044" opacity="0.42"/><circle cx="673.0" cy="526.7" r="0.9" fill="#44f044" opacity="0.40"/><circle cx="674.6" cy="532.7" r="1.4" fill="#44f044" opacity="0.37"/><circle cx="675.6" cy="535.0" r="1.1" fill="#44f044" opacity="0.36"/><circle cx="679.5" cy="543.3" r="0.9" fill="#44f044" opacity="0.32"/><circle cx="681.0" cy="547.3" r="1.0" fill="#44f044" opacity="0.30"/><circle cx="683.9" cy="555.0" r="1.5" fill="#44f044" opacity="0.27"/><circle cx="685.7" cy="562.2" r="1.4" fill="#44f044" opacity="0.24"/><circle cx="692.6" cy="576.2" r="1.1" fill="#44f044" opacity="0.18"/><circle cx="650.2" cy="485.6" r="0.9" fill="#44f044" opacity="0.58"/><circle cx="645.2" cy="485.3" r="0.9" fill="#44f044" opacity="0.52"/><circle cx="641.8" cy="485.2" r="1.4" fill="#44f044" opacity="0.48"/><circle cx="636.5" cy="483.8" r="1.3" fill="#44f044" opacity="0.42"/><circle cx="632.8" cy="483.1" r="1.0" fill="#44f044" opacity="0.37"/><circle cx="629.0" cy="481.6" r="1.4" fill="#44f044" opacity="0.32"/><circle cx="625.5" cy="481.1" r="1.0" fill="#44f044" opacity="0.28"/><circle cx="659.3" cy="498.4" r="1.2" fill="#44f044" opacity="0.74"/><circle cx="661.3" cy="505.9" r="1.4" fill="#44f044" opacity="0.69"/><circle cx="663.1" cy="509.7" r="1.2" fill="#44f044" opacity="0.67"/><circle cx="664.5" cy="512.9" r="1.0" fill="#44f044" opacity="0.65"/><circle cx="664.3" cy="515.1" r="1.1" fill="#44f044" opacity="0.64"/><circle cx="665.9" cy="519.2" r="0.9" fill="#44f044" opacity="0.62"/><circle cx="668.8" cy="528.1" r="1.1" fill="#44f044" opacity="0.57"/><circle cx="668.0" cy="530.2" r="0.9" fill="#44f044" opacity="0.56"/><circle cx="670.4" cy="534.4" r="1.1" fill="#44f044" opacity="0.53"/><circle cx="671.9" cy="538.7" r="1.1" fill="#44f044" opacity="0.50"/><circle cx="675.1" cy="549.5" r="1.2" fill="#44f044" opacity="0.44"/><circle cx="674.8" cy="554.4" r="1.3" fill="#44f044" opacity="0.42"/><circle cx="676.6" cy="559.5" r="1.4" fill="#44f044" opacity="0.40"/><circle cx="678.7" cy="566.6" r="1.2" fill="#44f044" opacity="0.35"/><circle cx="680.2" cy="571.5" r="1.0" fill="#44f044" opacity="0.33"/><circle cx="680.5" cy="573.6" r="1.0" fill="#44f044" opacity="0.31"/><circle cx="683.7" cy="581.6" r="1.4" fill="#44f044" opacity="0.26"/><circle cx="661.2" cy="477.4" r="1.2" fill="#44f044" opacity="0.53"/><circle cx="669.5" cy="462.6" r="1.5" fill="#44f044" opacity="0.48"/><circle cx="676.5" cy="447.1" r="1.3" fill="#44f044" opacity="0.42"/><circle cx="682.6" cy="435.1" r="0.9" fill="#44f044" opacity="0.37"/><circle cx="684.0" cy="431.0" r="1.1" fill="#44f044" opacity="0.36"/><circle cx="685.8" cy="426.2" r="1.3" fill="#44f044" opacity="0.34"/><circle cx="687.7" cy="424.2" r="1.0" fill="#44f044" opacity="0.33"/><circle cx="688.2" cy="421.7" r="1.2" fill="#44f044" opacity="0.32"/><circle cx="689.6" cy="418.4" r="1.3" fill="#44f044" opacity="0.31"/><circle cx="691.3" cy="415.4" r="1.3" fill="#44f044" opacity="0.30"/><circle cx="694.8" cy="407.3" r="1.2" fill="#44f044" opacity="0.27"/><circle cx="696.8" cy="404.2" r="0.9" fill="#44f044" opacity="0.26"/><circle cx="697.1" cy="401.3" r="1.1" fill="#44f044" opacity="0.24"/><circle cx="700.7" cy="394.6" r="1.3" fill="#44f044" opacity="0.22"/><circle cx="705.5" cy="386.0" r="1.5" fill="#44f044" opacity="0.19"/><circle cx="648.3" cy="495.1" r="1.2" fill="#44f044" opacity="0.70"/><circle cx="644.7" cy="499.0" r="1.5" fill="#44f044" opacity="0.66"/><circle cx="634.1" cy="509.7" r="1.2" fill="#44f044" opacity="0.54"/><circle cx="631.0" cy="512.1" r="1.4" fill="#44f044" opacity="0.51"/><circle cx="617.2" cy="525.6" r="1.2" fill="#44f044" opacity="0.37"/><circle cx="614.0" cy="528.2" r="1.4" fill="#44f044" opacity="0.34"/><circle cx="610.0" cy="531.6" r="1.1" fill="#44f044" opacity="0.30"/><circle cx="606.5" cy="534.9" r="1.4" fill="#44f044" opacity="0.27"/><circle cx="604.5" cy="537.6" r="1.5" fill="#44f044" opacity="0.24"/><circle cx="637.6" cy="488.1" r="1.1" fill="#44f044" opacity="0.43"/><circle cx="633.7" cy="487.8" r="1.0" fill="#44f044" opacity="0.41"/><circle cx="629.4" cy="487.5" r="1.2" fill="#44f044" opacity="0.39"/><circle cx="624.3" cy="489.0" r="1.1" fill="#44f044" opacity="0.37"/><circle cx="621.6" cy="487.9" r="1.5" fill="#44f044" opacity="0.36"/><circle cx="618.0" cy="489.0" r="1.0" fill="#44f044" opacity="0.34"/><circle cx="610.0" cy="489.0" r="1.3" fill="#44f044" opacity="0.30"/><circle cx="607.1" cy="488.2" r="1.2" fill="#44f044" opacity="0.29"/><circle cx="601.8" cy="488.9" r="1.3" fill="#44f044" opacity="0.27"/><circle cx="598.5" cy="488.4" r="1.0" fill="#44f044" opacity="0.25"/><circle cx="595.6" cy="489.8" r="1.5" fill="#44f044" opacity="0.24"/><circle cx="585.2" cy="490.2" r="1.0" fill="#44f044" opacity="0.19"/><circle cx="577.6" cy="490.2" r="0.9" fill="#44f044" opacity="0.16"/><circle cx="662.6" cy="491.6" r="1.0" fill="#44f044" opacity="0.73"/><circle cx="666.0" cy="494.3" r="1.2" fill="#44f044" opacity="0.66"/><circle cx="669.7" cy="497.3" r="1.4" fill="#44f044" opacity="0.59"/><circle cx="676.3" cy="502.3" r="1.4" fill="#44f044" opacity="0.46"/><circle cx="679.9" cy="505.8" r="1.4" fill="#44f044" opacity="0.39"/><circle cx="685.6" cy="510.1" r="1.2" fill="#44f044" opacity="0.28"/><circle cx="655.8" cy="498.2" r="1.3" fill="#44f044" opacity="0.64"/><circle cx="654.3" cy="510.8" r="1.3" fill="#44f044" opacity="0.53"/><circle cx="654.4" cy="514.4" r="1.0" fill="#44f044" opacity="0.49"/><circle cx="654.3" cy="523.2" r="1.5" fill="#44f044" opacity="0.41"/><circle cx="652.7" cy="525.7" r="1.1" fill="#44f044" opacity="0.38"/><circle cx="653.5" cy="534.2" r="1.4" fill="#44f044" opacity="0.30"/><circle cx="652.0" cy="537.6" r="1.2" fill="#44f044" opacity="0.27"/><circle cx="646.3" cy="475.5" r="1.2" fill="#44f044" opacity="0.75"/><circle cx="643.6" cy="472.2" r="1.2" fill="#44f044" opacity="0.71"/><circle cx="641.5" cy="469.5" r="1.0" fill="#44f044" opacity="0.66"/><circle cx="638.2" cy="467.2" r="1.1" fill="#44f044" opacity="0.64"/><circle cx="633.2" cy="460.3" r="1.5" fill="#44f044" opacity="0.54"/><circle cx="624.4" cy="452.7" r="1.3" fill="#44f044" opacity="0.43"/><circle cx="616.3" cy="442.4" r="1.4" fill="#44f044" opacity="0.31"/><circle cx="659.9" cy="493.2" r="0.9" fill="#44f044" opacity="0.53"/><circle cx="663.5" cy="497.8" r="1.5" fill="#44f044" opacity="0.51"/><circle cx="664.6" cy="499.1" r="1.5" fill="#44f044" opacity="0.50"/><circle cx="666.1" cy="503.5" r="1.2" fill="#44f044" opacity="0.48"/><circle cx="668.5" cy="504.7" r="1.0" fill="#44f044" opacity="0.47"/><circle cx="670.2" cy="508.4" r="1.2" fill="#44f044" opacity="0.46"/><circle cx="671.8" cy="512.7" r="1.0" fill="#44f044" opacity="0.44"/><circle cx="675.8" cy="520.9" r="0.9" fill="#44f044" opacity="0.41"/><circle cx="681.5" cy="530.7" r="1.1" fill="#44f044" opacity="0.36"/><circle cx="685.9" cy="538.0" r="1.4" fill="#44f044" opacity="0.33"/><circle cx="688.9" cy="543.2" r="1.2" fill="#44f044" opacity="0.31"/><circle cx="690.0" cy="545.1" r="1.4" fill="#44f044" opacity="0.30"/><circle cx="692.9" cy="548.3" r="1.2" fill="#44f044" opacity="0.29"/><circle cx="694.3" cy="551.5" r="1.4" fill="#44f044" opacity="0.27"/><circle cx="695.7" cy="554.2" r="1.0" fill="#44f044" opacity="0.26"/><circle cx="696.5" cy="556.9" r="1.3" fill="#44f044" opacity="0.25"/><circle cx="699.7" cy="558.8" r="1.0" fill="#44f044" opacity="0.24"/><circle cx="700.1" cy="562.2" r="1.3" fill="#44f044" opacity="0.22"/><circle cx="707.6" cy="573.1" r="1.0" fill="#44f044" opacity="0.17"/><circle cx="663.7" cy="496.6" r="1.0" fill="#44f044" opacity="0.75"/><circle cx="669.4" cy="502.9" r="1.3" fill="#44f044" opacity="0.64"/><circle cx="673.3" cy="505.7" r="1.5" fill="#44f044" opacity="0.58"/><circle cx="674.8" cy="510.0" r="1.3" fill="#44f044" opacity="0.53"/><circle cx="679.5" cy="514.4" r="1.1" fill="#44f044" opacity="0.44"/><circle cx="682.3" cy="518.4" r="1.4" fill="#44f044" opacity="0.38"/><circle cx="684.6" cy="520.8" r="1.2" fill="#44f044" opacity="0.33"/><circle cx="687.8" cy="525.0" r="1.2" fill="#44f044" opacity="0.28"/><circle cx="663.7" cy="482.5" r="1.1" fill="#44f044" opacity="0.88"/><circle cx="666.9" cy="481.0" r="1.0" fill="#44f044" opacity="0.84"/><circle cx="675.8" cy="476.0" r="1.5" fill="#44f044" opacity="0.75"/><circle cx="683.6" cy="470.7" r="1.4" fill="#44f044" opacity="0.67"/><circle cx="691.4" cy="466.0" r="0.9" fill="#44f044" opacity="0.60"/><circle cx="705.4" cy="456.7" r="0.9" fill="#44f044" opacity="0.46"/><circle cx="707.6" cy="455.4" r="1.2" fill="#44f044" opacity="0.44"/><circle cx="709.8" cy="455.1" r="1.5" fill="#44f044" opacity="0.41"/><circle cx="713.4" cy="453.0" r="1.4" fill="#44f044" opacity="0.38"/><circle cx="670.1" cy="490.1" r="1.2" fill="#44f044" opacity="0.64"/><circle cx="677.4" cy="492.7" r="1.2" fill="#44f044" opacity="0.61"/><circle cx="679.0" cy="493.8" r="1.2" fill="#44f044" opacity="0.60"/><circle cx="690.7" cy="496.9" r="1.0" fill="#44f044" opacity="0.56"/><circle cx="697.9" cy="498.0" r="1.1" fill="#44f044" opacity="0.54"/><circle cx="700.4" cy="498.8" r="1.0" fill="#44f044" opacity="0.53"/><circle cx="703.7" cy="500.5" r="0.9" fill="#44f044" opacity="0.51"/><circle cx="708.7" cy="501.1" r="1.1" fill="#44f044" opacity="0.50"/><circle cx="713.0" cy="501.7" r="1.0" fill="#44f044" opacity="0.48"/><circle cx="719.4" cy="504.4" r="1.5" fill="#44f044" opacity="0.46"/><circle cx="722.5" cy="504.9" r="1.5" fill="#44f044" opacity="0.44"/><circle cx="731.0" cy="508.1" r="1.4" fill="#44f044" opacity="0.41"/><circle cx="733.9" cy="507.7" r="1.2" fill="#44f044" opacity="0.41"/><circle cx="739.4" cy="509.7" r="1.2" fill="#44f044" opacity="0.38"/><circle cx="745.3" cy="511.5" r="1.3" fill="#44f044" opacity="0.36"/><circle cx="749.2" cy="511.7" r="1.2" fill="#44f044" opacity="0.35"/><circle cx="756.6" cy="514.5" r="1.3" fill="#44f044" opacity="0.32"/><circle cx="759.5" cy="515.0" r="1.3" fill="#44f044" opacity="0.31"/><circle cx="763.5" cy="516.0" r="1.1" fill="#44f044" opacity="0.29"/><circle cx="771.4" cy="518.7" r="1.1" fill="#44f044" opacity="0.27"/><circle cx="775.2" cy="519.1" r="0.9" fill="#44f044" opacity="0.25"/><circle cx="780.0" cy="521.3" r="1.2" fill="#44f044" opacity="0.23"/><circle cx="783.3" cy="521.5" r="1.1" fill="#44f044" opacity="0.22"/><circle cx="787.9" cy="522.7" r="0.9" fill="#44f044" opacity="0.21"/><circle cx="663.6" cy="486.1" r="1.0" fill="#44f044" opacity="0.70"/><circle cx="677.1" cy="485.3" r="1.0" fill="#44f044" opacity="0.59"/><circle cx="680.3" cy="483.9" r="1.0" fill="#44f044" opacity="0.57"/><circle cx="681.9" cy="484.0" r="1.4" fill="#44f044" opacity="0.55"/><circle cx="687.0" cy="483.1" r="1.2" fill="#44f044" opacity="0.51"/><circle cx="691.3" cy="483.0" r="1.4" fill="#44f044" opacity="0.48"/><circle cx="694.6" cy="482.0" r="1.2" fill="#44f044" opacity="0.45"/><circle cx="699.6" cy="481.1" r="1.1" fill="#44f044" opacity="0.41"/><circle cx="704.8" cy="480.7" r="1.0" fill="#44f044" opacity="0.36"/><circle cx="713.4" cy="480.7" r="1.2" fill="#44f044" opacity="0.30"/><circle cx="715.4" cy="480.7" r="1.5" fill="#44f044" opacity="0.28"/><circle cx="650.9" cy="484.3" r="1.0" fill="#44f044" opacity="0.51"/><circle cx="646.4" cy="481.6" r="1.1" fill="#44f044" opacity="0.46"/><circle cx="639.5" cy="478.6" r="1.4" fill="#44f044" opacity="0.39"/><circle cx="635.3" cy="477.0" r="1.4" fill="#44f044" opacity="0.36"/><circle cx="631.7" cy="475.5" r="1.1" fill="#44f044" opacity="0.32"/><circle cx="627.3" cy="473.2" r="1.2" fill="#44f044" opacity="0.26"/><circle cx="623.2" cy="471.3" r="1.0" fill="#44f044" opacity="0.23"/><circle cx="664.5" cy="485.9" r="0.9" fill="#44f044" opacity="0.47"/><circle cx="667.5" cy="485.2" r="1.1" fill="#44f044" opacity="0.44"/><circle cx="676.9" cy="485.2" r="1.5" fill="#44f044" opacity="0.39"/><circle cx="681.3" cy="484.3" r="1.5" fill="#44f044" opacity="0.37"/><circle cx="685.2" cy="484.4" r="1.0" fill="#44f044" opacity="0.34"/><circle cx="689.1" cy="483.6" r="1.2" fill="#44f044" opacity="0.32"/><circle cx="693.4" cy="483.3" r="1.3" fill="#44f044" opacity="0.29"/><circle cx="697.1" cy="482.0" r="1.1" fill="#44f044" opacity="0.27"/><circle cx="712.6" cy="481.4" r="0.9" fill="#44f044" opacity="0.18"/><circle cx="652.3" cy="481.2" r="1.1" fill="#44f044" opacity="0.71"/><circle cx="646.3" cy="473.5" r="1.4" fill="#44f044" opacity="0.63"/><circle cx="638.8" cy="463.0" r="1.0" fill="#44f044" opacity="0.54"/><circle cx="637.0" cy="462.1" r="1.0" fill="#44f044" opacity="0.52"/><circle cx="632.5" cy="457.0" r="1.5" fill="#44f044" opacity="0.47"/><circle cx="630.1" cy="453.4" r="1.4" fill="#44f044" opacity="0.44"/><circle cx="624.7" cy="446.2" r="1.1" fill="#44f044" opacity="0.38"/><circle cx="623.3" cy="444.1" r="0.9" fill="#44f044" opacity="0.35"/><circle cx="618.7" cy="439.0" r="1.0" fill="#44f044" opacity="0.30"/><circle cx="617.1" cy="436.3" r="1.4" fill="#44f044" opacity="0.27"/><circle cx="612.9" cy="431.8" r="1.2" fill="#44f044" opacity="0.24"/><circle cx="655.1" cy="480.8" r="0.9" fill="#44f044" opacity="0.75"/><circle cx="654.7" cy="474.9" r="1.3" fill="#44f044" opacity="0.71"/><circle cx="650.4" cy="460.0" r="1.2" fill="#44f044" opacity="0.59"/><circle cx="648.7" cy="453.4" r="1.1" fill="#44f044" opacity="0.54"/><circle cx="648.1" cy="449.7" r="1.3" fill="#44f044" opacity="0.50"/><circle cx="647.3" cy="445.2" r="1.3" fill="#44f044" opacity="0.46"/><circle cx="645.5" cy="440.7" r="1.2" fill="#44f044" opacity="0.43"/><circle cx="645.8" cy="435.6" r="1.5" fill="#44f044" opacity="0.40"/><circle cx="644.4" cy="432.2" r="0.9" fill="#44f044" opacity="0.37"/><circle cx="642.6" cy="422.3" r="1.3" fill="#44f044" opacity="0.28"/><circle cx="640.9" cy="418.6" r="1.2" fill="#44f044" opacity="0.25"/><circle cx="651.2" cy="477.7" r="0.9" fill="#44f044" opacity="0.57"/><circle cx="649.6" cy="472.3" r="1.1" fill="#44f044" opacity="0.50"/><circle cx="646.0" cy="468.4" r="1.4" fill="#44f044" opacity="0.44"/><circle cx="645.3" cy="464.8" r="1.4" fill="#44f044" opacity="0.40"/><circle cx="643.0" cy="461.2" r="1.2" fill="#44f044" opacity="0.35"/><circle cx="639.5" cy="455.5" r="1.0" fill="#44f044" opacity="0.28"/><circle cx="638.2" cy="452.7" r="1.3" fill="#44f044" opacity="0.25"/><circle cx="662.2" cy="491.3" r="0.9" fill="#44f044" opacity="0.72"/><circle cx="666.2" cy="494.6" r="1.4" fill="#44f044" opacity="0.67"/><circle cx="673.8" cy="500.3" r="0.9" fill="#44f044" opacity="0.56"/><circle cx="676.0" cy="502.8" r="0.9" fill="#44f044" opacity="0.53"/><circle cx="684.7" cy="510.6" r="1.0" fill="#44f044" opacity="0.40"/><circle cx="687.2" cy="512.2" r="1.5" fill="#44f044" opacity="0.37"/><circle cx="691.6" cy="516.4" r="1.2" fill="#44f044" opacity="0.32"/><circle cx="695.8" cy="520.1" r="1.0" fill="#44f044" opacity="0.26"/><circle cx="653.2" cy="481.2" r="1.1" fill="#44f044" opacity="0.75"/><circle cx="648.0" cy="476.3" r="1.5" fill="#44f044" opacity="0.61"/><circle cx="643.3" cy="470.9" r="1.3" fill="#44f044" opacity="0.49"/><circle cx="637.6" cy="465.7" r="1.2" fill="#44f044" opacity="0.34"/><circle cx="655.7" cy="496.9" r="1.1" fill="#44f044" opacity="0.60"/><circle cx="656.0" cy="501.1" r="1.0" fill="#44f044" opacity="0.56"/><circle cx="654.2" cy="509.1" r="1.4" fill="#44f044" opacity="0.45"/><circle cx="654.1" cy="517.7" r="1.1" fill="#44f044" opacity="0.32"/><circle cx="653.6" cy="522.5" r="1.2" fill="#44f044" opacity="0.27"/><circle cx="652.7" cy="524.4" r="1.2" fill="#44f044" opacity="0.23"/><circle cx="663.6" cy="485.2" r="1.0" fill="#44f044" opacity="0.57"/><circle cx="666.3" cy="484.6" r="1.3" fill="#44f044" opacity="0.55"/><circle cx="673.9" cy="482.0" r="1.1" fill="#44f044" opacity="0.52"/><circle cx="680.3" cy="480.1" r="1.4" fill="#44f044" opacity="0.49"/><circle cx="696.3" cy="475.9" r="1.5" fill="#44f044" opacity="0.41"/><circle cx="702.8" cy="473.8" r="0.9" fill="#44f044" opacity="0.37"/><circle cx="714.6" cy="471.8" r="1.4" fill="#44f044" opacity="0.32"/><circle cx="720.9" cy="469.3" r="1.1" fill="#44f044" opacity="0.28"/><circle cx="724.5" cy="467.8" r="1.2" fill="#44f044" opacity="0.27"/><circle cx="727.8" cy="467.0" r="1.4" fill="#44f044" opacity="0.25"/><circle cx="730.4" cy="466.3" r="1.2" fill="#44f044" opacity="0.24"/><circle cx="735.3" cy="466.5" r="1.2" fill="#44f044" opacity="0.22"/><circle cx="739.0" cy="464.9" r="0.9" fill="#44f044" opacity="0.20"/><circle cx="741.9" cy="463.8" r="1.2" fill="#44f044" opacity="0.18"/><circle cx="662.5" cy="496.7" r="1.0" fill="#44f044" opacity="0.69"/><circle cx="664.1" cy="498.3" r="1.5" fill="#44f044" opacity="0.68"/><circle cx="666.5" cy="501.2" r="1.5" fill="#44f044" opacity="0.67"/><circle cx="668.6" cy="506.2" r="1.4" fill="#44f044" opacity="0.64"/><circle cx="675.8" cy="515.2" r="1.4" fill="#44f044" opacity="0.59"/><circle cx="677.0" cy="518.5" r="1.3" fill="#44f044" opacity="0.58"/><circle cx="685.0" cy="528.5" r="1.2" fill="#44f044" opacity="0.52"/><circle cx="685.2" cy="531.5" r="1.1" fill="#44f044" opacity="0.51"/><circle cx="689.8" cy="538.5" r="0.9" fill="#44f044" opacity="0.48"/><circle cx="698.2" cy="552.0" r="1.2" fill="#44f044" opacity="0.41"/><circle cx="700.4" cy="553.8" r="0.9" fill="#44f044" opacity="0.39"/><circle cx="702.9" cy="558.0" r="1.2" fill="#44f044" opacity="0.37"/><circle cx="710.2" cy="568.3" r="1.0" fill="#44f044" opacity="0.32"/><circle cx="717.2" cy="579.4" r="1.4" fill="#44f044" opacity="0.26"/><circle cx="719.0" cy="583.7" r="1.3" fill="#44f044" opacity="0.24"/><circle cx="666.5" cy="484.4" r="1.2" fill="#44f044" opacity="0.56"/><circle cx="683.9" cy="480.6" r="1.4" fill="#44f044" opacity="0.43"/><circle cx="692.6" cy="477.6" r="1.1" fill="#44f044" opacity="0.36"/><circle cx="696.2" cy="476.7" r="1.3" fill="#44f044" opacity="0.34"/><circle cx="702.1" cy="475.1" r="1.3" fill="#44f044" opacity="0.29"/><circle cx="707.3" cy="473.3" r="1.5" fill="#44f044" opacity="0.26"/><circle cx="662.2" cy="492.7" r="1.0" fill="#44f044" opacity="0.75"/><circle cx="664.0" cy="495.0" r="0.9" fill="#44f044" opacity="0.73"/><circle cx="665.8" cy="498.8" r="1.3" fill="#44f044" opacity="0.70"/><circle cx="667.6" cy="500.9" r="0.9" fill="#44f044" opacity="0.68"/><circle cx="671.2" cy="504.4" r="1.0" fill="#44f044" opacity="0.65"/><circle cx="673.1" cy="506.9" r="0.9" fill="#44f044" opacity="0.63"/><circle cx="675.7" cy="510.1" r="1.0" fill="#44f044" opacity="0.60"/><circle cx="677.7" cy="511.7" r="1.4" fill="#44f044" opacity="0.58"/><circle cx="683.7" cy="520.4" r="1.0" fill="#44f044" opacity="0.51"/><circle cx="686.2" cy="523.0" r="1.5" fill="#44f044" opacity="0.49"/><circle cx="692.7" cy="532.0" r="1.4" fill="#44f044" opacity="0.41"/><circle cx="695.7" cy="536.4" r="1.5" fill="#44f044" opacity="0.37"/><circle cx="698.2" cy="538.4" r="0.9" fill="#44f044" opacity="0.36"/><circle cx="704.6" cy="547.0" r="1.3" fill="#44f044" opacity="0.28"/><circle cx="646.1" cy="482.2" r="1.3" fill="#44f044" opacity="0.57"/><circle cx="642.6" cy="481.4" r="1.2" fill="#44f044" opacity="0.54"/><circle cx="635.8" cy="478.3" r="1.4" fill="#44f044" opacity="0.50"/><circle cx="633.0" cy="476.7" r="1.2" fill="#44f044" opacity="0.48"/><circle cx="629.0" cy="475.9" r="1.1" fill="#44f044" opacity="0.46"/><circle cx="625.9" cy="474.6" r="1.4" fill="#44f044" opacity="0.43"/><circle cx="619.1" cy="471.8" r="1.4" fill="#44f044" opacity="0.39"/><circle cx="615.6" cy="469.7" r="1.5" fill="#44f044" opacity="0.37"/><circle cx="612.7" cy="468.3" r="1.2" fill="#44f044" opacity="0.35"/><circle cx="608.1" cy="466.4" r="1.0" fill="#44f044" opacity="0.33"/><circle cx="602.8" cy="464.8" r="1.5" fill="#44f044" opacity="0.28"/><circle cx="599.4" cy="462.9" r="1.1" fill="#44f044" opacity="0.26"/><circle cx="659.9" cy="477.7" r="0.9" fill="#44f044" opacity="0.58"/><circle cx="660.8" cy="473.9" r="1.2" fill="#44f044" opacity="0.56"/><circle cx="662.2" cy="469.7" r="1.4" fill="#44f044" opacity="0.55"/><circle cx="666.6" cy="460.3" r="1.3" fill="#44f044" opacity="0.50"/><circle cx="667.1" cy="457.1" r="1.2" fill="#44f044" opacity="0.49"/><circle cx="668.3" cy="454.3" r="1.4" fill="#44f044" opacity="0.48"/><circle cx="668.6" cy="453.0" r="1.2" fill="#44f044" opacity="0.47"/><circle cx="670.7" cy="447.3" r="1.4" fill="#44f044" opacity="0.44"/><circle cx="674.8" cy="432.9" r="1.4" fill="#44f044" opacity="0.38"/><circle cx="677.2" cy="429.2" r="1.0" fill="#44f044" opacity="0.36"/><circle cx="679.8" cy="420.3" r="1.3" fill="#44f044" opacity="0.32"/><circle cx="679.4" cy="417.4" r="1.1" fill="#44f044" opacity="0.31"/><circle cx="681.9" cy="414.3" r="1.4" fill="#44f044" opacity="0.29"/><circle cx="683.8" cy="409.1" r="1.3" fill="#44f044" opacity="0.27"/><circle cx="684.8" cy="405.7" r="1.2" fill="#44f044" opacity="0.25"/><circle cx="685.6" cy="400.8" r="1.4" fill="#44f044" opacity="0.23"/><circle cx="689.1" cy="392.7" r="1.2" fill="#44f044" opacity="0.19"/><circle cx="660.4" cy="492.8" r="1.1" fill="#44f044" opacity="0.56"/><circle cx="661.0" cy="497.5" r="1.0" fill="#44f044" opacity="0.51"/><circle cx="663.8" cy="502.1" r="1.1" fill="#44f044" opacity="0.45"/><circle cx="663.8" cy="504.6" r="1.1" fill="#44f044" opacity="0.41"/><circle cx="666.0" cy="509.1" r="1.1" fill="#44f044" opacity="0.35"/><circle cx="664.3" cy="484.3" r="1.1" fill="#44f044" opacity="0.55"/><circle cx="667.3" cy="483.5" r="1.3" fill="#44f044" opacity="0.54"/><circle cx="668.8" cy="482.3" r="1.2" fill="#44f044" opacity="0.52"/><circle cx="671.2" cy="481.4" r="1.0" fill="#44f044" opacity="0.51"/><circle cx="674.5" cy="480.2" r="1.1" fill="#44f044" opacity="0.49"/><circle cx="681.5" cy="476.4" r="1.3" fill="#44f044" opacity="0.46"/><circle cx="689.0" cy="473.0" r="1.1" fill="#44f044" opacity="0.42"/><circle cx="693.3" cy="472.1" r="1.3" fill="#44f044" opacity="0.40"/><circle cx="697.7" cy="470.9" r="1.0" fill="#44f044" opacity="0.38"/><circle cx="705.7" cy="466.4" r="1.2" fill="#44f044" opacity="0.34"/><circle cx="709.0" cy="464.7" r="1.3" fill="#44f044" opacity="0.32"/><circle cx="712.2" cy="463.8" r="1.1" fill="#44f044" opacity="0.31"/><circle cx="722.2" cy="460.4" r="1.2" fill="#44f044" opacity="0.26"/><circle cx="726.4" cy="458.7" r="1.0" fill="#44f044" opacity="0.24"/><circle cx="735.0" cy="455.5" r="1.3" fill="#44f044" opacity="0.19"/><circle cx="657.2" cy="480.1" r="1.4" fill="#44f044" opacity="0.54"/><circle cx="658.2" cy="476.1" r="1.0" fill="#44f044" opacity="0.51"/><circle cx="657.2" cy="473.1" r="1.3" fill="#44f044" opacity="0.48"/><circle cx="659.2" cy="459.3" r="1.1" fill="#44f044" opacity="0.36"/><circle cx="659.6" cy="456.3" r="1.4" fill="#44f044" opacity="0.33"/><circle cx="658.5" cy="453.0" r="1.3" fill="#44f044" opacity="0.29"/><circle cx="659.8" cy="450.0" r="1.1" fill="#44f044" opacity="0.26"/><circle cx="659.6" cy="441.4" r="1.4" fill="#44f044" opacity="0.19"/><circle cx="656.8" cy="477.9" r="1.1" fill="#44f044" opacity="0.55"/><circle cx="656.4" cy="469.0" r="1.4" fill="#44f044" opacity="0.47"/><circle cx="656.1" cy="460.3" r="1.0" fill="#44f044" opacity="0.38"/><circle cx="657.0" cy="459.0" r="1.4" fill="#44f044" opacity="0.36"/><circle cx="656.0" cy="453.9" r="1.4" fill="#44f044" opacity="0.31"/><circle cx="651.1" cy="490.2" r="1.3" fill="#44f044" opacity="0.52"/><circle cx="645.4" cy="491.1" r="0.9" fill="#44f044" opacity="0.49"/><circle cx="641.4" cy="492.3" r="1.0" fill="#44f044" opacity="0.46"/><circle cx="639.0" cy="494.7" r="1.1" fill="#44f044" opacity="0.44"/><circle cx="635.8" cy="495.1" r="1.2" fill="#44f044" opacity="0.42"/><circle cx="628.9" cy="497.3" r="1.1" fill="#44f044" opacity="0.38"/><circle cx="624.7" cy="499.0" r="1.4" fill="#44f044" opacity="0.35"/><circle cx="620.3" cy="499.8" r="1.2" fill="#44f044" opacity="0.33"/><circle cx="613.8" cy="503.8" r="1.1" fill="#44f044" opacity="0.28"/><circle cx="610.3" cy="504.6" r="1.1" fill="#44f044" opacity="0.26"/><circle cx="604.5" cy="506.4" r="1.0" fill="#44f044" opacity="0.22"/><circle cx="598.3" cy="508.6" r="1.2" fill="#44f044" opacity="0.18"/><circle cx="663.2" cy="482.2" r="1.1" fill="#44f044" opacity="0.52"/><circle cx="665.6" cy="480.4" r="1.1" fill="#44f044" opacity="0.49"/><circle cx="670.0" cy="475.4" r="1.4" fill="#44f044" opacity="0.43"/><circle cx="673.3" cy="474.6" r="1.1" fill="#44f044" opacity="0.40"/><circle cx="676.8" cy="471.1" r="1.3" fill="#44f044" opacity="0.36"/><circle cx="680.1" cy="467.9" r="1.4" fill="#44f044" opacity="0.32"/><circle cx="684.9" cy="464.7" r="0.9" fill="#44f044" opacity="0.27"/><circle cx="686.9" cy="462.0" r="1.3" fill="#44f044" opacity="0.24"/><circle cx="689.2" cy="459.9" r="1.1" fill="#44f044" opacity="0.21"/><circle cx="663.1" cy="489.7" r="1.0" fill="#44f044" opacity="0.67"/><circle cx="668.1" cy="493.0" r="1.1" fill="#44f044" opacity="0.63"/><circle cx="672.0" cy="494.7" r="0.9" fill="#44f044" opacity="0.59"/><circle cx="679.8" cy="497.3" r="1.0" fill="#44f044" opacity="0.52"/><circle cx="686.9" cy="501.8" r="1.2" fill="#44f044" opacity="0.46"/><circle cx="694.8" cy="505.6" r="1.4" fill="#44f044" opacity="0.39"/><circle cx="697.3" cy="506.5" r="1.4" fill="#44f044" opacity="0.36"/><circle cx="700.4" cy="508.4" r="1.2" fill="#44f044" opacity="0.33"/><circle cx="707.0" cy="511.9" r="1.1" fill="#44f044" opacity="0.27"/><circle cx="710.3" cy="513.7" r="1.1" fill="#44f044" opacity="0.25"/><circle cx="712.7" cy="513.9" r="1.3" fill="#44f044" opacity="0.22"/><circle cx="661.9" cy="482.1" r="1.1" fill="#44f044" opacity="0.78"/><circle cx="668.6" cy="475.6" r="0.9" fill="#44f044" opacity="0.63"/><circle cx="675.2" cy="470.7" r="1.0" fill="#44f044" opacity="0.51"/><circle cx="678.0" cy="466.8" r="1.1" fill="#44f044" opacity="0.44"/><circle cx="681.4" cy="464.1" r="1.5" fill="#44f044" opacity="0.38"/><circle cx="685.1" cy="460.8" r="1.2" fill="#44f044" opacity="0.31"/><circle cx="662.3" cy="482.2" r="1.2" fill="#44f044" opacity="0.57"/><circle cx="665.5" cy="478.4" r="1.0" fill="#44f044" opacity="0.54"/><circle cx="671.9" cy="470.6" r="1.1" fill="#44f044" opacity="0.47"/><circle cx="674.2" cy="469.8" r="1.5" fill="#44f044" opacity="0.46"/><circle cx="677.4" cy="465.5" r="1.1" fill="#44f044" opacity="0.43"/><circle cx="680.3" cy="463.2" r="1.0" fill="#44f044" opacity="0.40"/><circle cx="686.2" cy="457.4" r="1.1" fill="#44f044" opacity="0.35"/><circle cx="687.7" cy="455.4" r="1.3" fill="#44f044" opacity="0.33"/><circle cx="691.6" cy="452.4" r="1.2" fill="#44f044" opacity="0.30"/><circle cx="693.3" cy="449.1" r="1.5" fill="#44f044" opacity="0.27"/><circle cx="699.6" cy="443.9" r="1.0" fill="#44f044" opacity="0.22"/><circle cx="647.6" cy="474.7" r="1.1" fill="#44f044" opacity="0.50"/><circle cx="641.3" cy="464.3" r="1.2" fill="#44f044" opacity="0.40"/><circle cx="637.1" cy="459.9" r="1.2" fill="#44f044" opacity="0.35"/><circle cx="634.8" cy="455.5" r="1.5" fill="#44f044" opacity="0.31"/><circle cx="632.4" cy="452.2" r="0.9" fill="#44f044" opacity="0.28"/><circle cx="627.2" cy="445.8" r="1.0" fill="#44f044" opacity="0.22"/><circle cx="624.9" cy="441.8" r="0.9" fill="#44f044" opacity="0.18"/><circle cx="665.7" cy="492.5" r="1.1" fill="#44f044" opacity="0.47"/><circle cx="668.3" cy="493.5" r="1.2" fill="#44f044" opacity="0.45"/><circle cx="682.3" cy="502.2" r="1.1" fill="#44f044" opacity="0.36"/><circle cx="688.8" cy="506.2" r="1.5" fill="#44f044" opacity="0.32"/><circle cx="692.7" cy="508.9" r="1.3" fill="#44f044" opacity="0.29"/><circle cx="695.1" cy="511.9" r="1.2" fill="#44f044" opacity="0.27"/><circle cx="697.3" cy="512.0" r="1.1" fill="#44f044" opacity="0.25"/><circle cx="700.9" cy="515.2" r="1.2" fill="#44f044" opacity="0.23"/><circle cx="703.6" cy="515.7" r="1.1" fill="#44f044" opacity="0.22"/><circle cx="705.6" cy="518.1" r="1.3" fill="#44f044" opacity="0.20"/><circle cx="662.1" cy="491.9" r="1.2" fill="#44f044" opacity="0.53"/><circle cx="663.2" cy="494.7" r="1.5" fill="#44f044" opacity="0.51"/><circle cx="670.6" cy="502.2" r="1.0" fill="#44f044" opacity="0.42"/><circle cx="674.7" cy="506.1" r="1.4" fill="#44f044" opacity="0.38"/><circle cx="679.0" cy="510.1" r="1.0" fill="#44f044" opacity="0.33"/><circle cx="684.5" cy="517.3" r="1.2" fill="#44f044" opacity="0.26"/><circle cx="689.8" cy="522.4" r="1.1" fill="#44f044" opacity="0.20"/><circle cx="651.7" cy="491.7" r="1.0" fill="#44f044" opacity="0.59"/><circle cx="647.7" cy="492.6" r="1.3" fill="#44f044" opacity="0.56"/><circle cx="642.2" cy="497.4" r="1.1" fill="#44f044" opacity="0.50"/><circle cx="635.5" cy="501.7" r="1.2" fill="#44f044" opacity="0.42"/><circle cx="633.9" cy="504.4" r="1.3" fill="#44f044" opacity="0.40"/><circle cx="619.7" cy="513.7" r="1.5" fill="#44f044" opacity="0.24"/><circle cx="645.7" cy="479.4" r="1.3" fill="#44f044" opacity="0.75"/><circle cx="638.6" cy="475.0" r="1.2" fill="#44f044" opacity="0.67"/><circle cx="632.3" cy="470.9" r="1.0" fill="#44f044" opacity="0.60"/><circle cx="627.9" cy="468.6" r="1.2" fill="#44f044" opacity="0.56"/><circle cx="624.8" cy="467.3" r="1.3" fill="#44f044" opacity="0.53"/><circle cx="619.3" cy="463.8" r="1.0" fill="#44f044" opacity="0.46"/><circle cx="608.1" cy="455.1" r="1.0" fill="#44f044" opacity="0.33"/><circle cx="604.4" cy="454.0" r="1.1" fill="#44f044" opacity="0.30"/><circle cx="649.7" cy="495.1" r="1.4" fill="#44f044" opacity="0.63"/><circle cx="646.1" cy="501.6" r="0.9" fill="#44f044" opacity="0.53"/><circle cx="639.2" cy="508.4" r="1.3" fill="#44f044" opacity="0.37"/><circle cx="635.5" cy="512.7" r="1.0" fill="#44f044" opacity="0.29"/><circle cx="658.2" cy="479.8" r="1.0" fill="#44f044" opacity="0.72"/><circle cx="659.6" cy="477.5" r="1.4" fill="#44f044" opacity="0.68"/><circle cx="660.1" cy="473.0" r="1.4" fill="#44f044" opacity="0.60"/><circle cx="664.0" cy="455.1" r="1.4" fill="#44f044" opacity="0.32"/><circle cx="660.4" cy="492.9" r="1.4" fill="#44f044" opacity="0.61"/><circle cx="661.3" cy="497.0" r="1.4" fill="#44f044" opacity="0.60"/><circle cx="662.8" cy="500.3" r="1.4" fill="#44f044" opacity="0.58"/><circle cx="664.0" cy="503.2" r="1.1" fill="#44f044" opacity="0.57"/><circle cx="664.2" cy="505.4" r="1.3" fill="#44f044" opacity="0.56"/><circle cx="674.4" cy="528.1" r="1.0" fill="#44f044" opacity="0.47"/><circle cx="678.4" cy="539.0" r="1.4" fill="#44f044" opacity="0.42"/><circle cx="680.2" cy="542.7" r="1.3" fill="#44f044" opacity="0.41"/><circle cx="685.6" cy="556.6" r="1.2" fill="#44f044" opacity="0.35"/><circle cx="686.6" cy="561.0" r="1.2" fill="#44f044" opacity="0.33"/><circle cx="689.2" cy="566.7" r="1.4" fill="#44f044" opacity="0.31"/><circle cx="690.6" cy="569.6" r="1.4" fill="#44f044" opacity="0.29"/><circle cx="692.2" cy="572.6" r="1.4" fill="#44f044" opacity="0.28"/><circle cx="695.5" cy="582.6" r="1.1" fill="#44f044" opacity="0.24"/><circle cx="698.3" cy="588.6" r="1.3" fill="#44f044" opacity="0.22"/><circle cx="700.5" cy="592.9" r="1.1" fill="#44f044" opacity="0.20"/><circle cx="649.9" cy="483.5" r="1.2" fill="#44f044" opacity="0.71"/><circle cx="646.3" cy="481.8" r="1.5" fill="#44f044" opacity="0.70"/><circle cx="643.3" cy="480.4" r="1.0" fill="#44f044" opacity="0.67"/><circle cx="640.3" cy="479.6" r="1.0" fill="#44f044" opacity="0.66"/><circle cx="633.1" cy="475.4" r="1.1" fill="#44f044" opacity="0.63"/><circle cx="629.8" cy="475.0" r="1.0" fill="#44f044" opacity="0.61"/><circle cx="623.5" cy="472.1" r="1.3" fill="#44f044" opacity="0.59"/><circle cx="618.9" cy="470.3" r="1.1" fill="#44f044" opacity="0.57"/><circle cx="611.9" cy="466.6" r="1.1" fill="#44f044" opacity="0.53"/><circle cx="607.9" cy="464.2" r="1.3" fill="#44f044" opacity="0.51"/><circle cx="603.6" cy="462.8" r="0.9" fill="#44f044" opacity="0.50"/><circle cx="590.0" cy="457.4" r="1.4" fill="#44f044" opacity="0.44"/><circle cx="587.6" cy="455.4" r="1.5" fill="#44f044" opacity="0.42"/><circle cx="583.4" cy="453.5" r="1.2" fill="#44f044" opacity="0.41"/><circle cx="581.6" cy="452.4" r="1.3" fill="#44f044" opacity="0.39"/><circle cx="577.3" cy="451.5" r="0.9" fill="#44f044" opacity="0.38"/><circle cx="566.2" cy="445.1" r="1.3" fill="#44f044" opacity="0.33"/><circle cx="562.9" cy="444.9" r="1.2" fill="#44f044" opacity="0.32"/><circle cx="558.2" cy="442.0" r="1.2" fill="#44f044" opacity="0.29"/><circle cx="547.4" cy="437.8" r="1.1" fill="#44f044" opacity="0.24"/><circle cx="641.8" cy="485.6" r="1.0" fill="#44f044" opacity="0.67"/><circle cx="637.9" cy="484.7" r="1.3" fill="#44f044" opacity="0.62"/><circle cx="627.6" cy="483.2" r="1.3" fill="#44f044" opacity="0.44"/><circle cx="618.0" cy="482.2" r="1.1" fill="#44f044" opacity="0.29"/><circle cx="643.9" cy="485.3" r="1.0" fill="#44f044" opacity="0.69"/><circle cx="639.9" cy="485.8" r="1.3" fill="#44f044" opacity="0.66"/><circle cx="633.4" cy="484.6" r="1.2" fill="#44f044" opacity="0.62"/><circle cx="630.8" cy="484.0" r="1.3" fill="#44f044" opacity="0.59"/><circle cx="626.8" cy="483.7" r="1.1" fill="#44f044" opacity="0.56"/><circle cx="623.1" cy="484.1" r="1.3" fill="#44f044" opacity="0.54"/><circle cx="618.4" cy="482.5" r="1.0" fill="#44f044" opacity="0.51"/><circle cx="613.8" cy="482.0" r="1.3" fill="#44f044" opacity="0.47"/><circle cx="609.4" cy="482.7" r="1.1" fill="#44f044" opacity="0.44"/><circle cx="606.3" cy="481.5" r="1.2" fill="#44f044" opacity="0.42"/><circle cx="601.9" cy="480.7" r="1.5" fill="#44f044" opacity="0.38"/><circle cx="597.3" cy="480.5" r="1.3" fill="#44f044" opacity="0.34"/><circle cx="594.2" cy="480.4" r="1.4" fill="#44f044" opacity="0.32"/><circle cx="587.1" cy="480.4" r="1.3" fill="#44f044" opacity="0.27"/><circle cx="664.1" cy="488.1" r="1.4" fill="#44f044" opacity="0.74"/><circle cx="666.8" cy="488.5" r="1.3" fill="#44f044" opacity="0.69"/><circle cx="671.3" cy="487.8" r="1.4" fill="#44f044" opacity="0.64"/><circle cx="678.5" cy="488.6" r="1.4" fill="#44f044" opacity="0.55"/><circle cx="683.1" cy="489.7" r="1.3" fill="#44f044" opacity="0.51"/><circle cx="662.3" cy="481.3" r="1.1" fill="#44f044" opacity="0.83"/><circle cx="666.3" cy="476.1" r="1.4" fill="#44f044" opacity="0.76"/><circle cx="669.2" cy="472.8" r="1.2" fill="#44f044" opacity="0.73"/><circle cx="672.0" cy="469.4" r="1.2" fill="#44f044" opacity="0.68"/><circle cx="674.2" cy="465.4" r="1.4" fill="#44f044" opacity="0.64"/><circle cx="677.4" cy="462.7" r="1.0" fill="#44f044" opacity="0.61"/><circle cx="685.2" cy="453.2" r="1.2" fill="#44f044" opacity="0.50"/><circle cx="688.2" cy="449.2" r="1.2" fill="#44f044" opacity="0.46"/><circle cx="690.7" cy="445.6" r="1.5" fill="#44f044" opacity="0.42"/><circle cx="694.6" cy="442.7" r="1.2" fill="#44f044" opacity="0.37"/><circle cx="696.0" cy="440.2" r="1.2" fill="#44f044" opacity="0.35"/><circle cx="698.5" cy="437.0" r="1.1" fill="#44f044" opacity="0.31"/><circle cx="701.9" cy="433.9" r="1.2" fill="#44f044" opacity="0.27"/><circle cx="666.2" cy="494.9" r="1.1" fill="#44f044" opacity="0.76"/><circle cx="668.1" cy="496.2" r="1.5" fill="#44f044" opacity="0.74"/><circle cx="673.3" cy="500.7" r="1.4" fill="#44f044" opacity="0.70"/><circle cx="674.3" cy="502.8" r="1.4" fill="#44f044" opacity="0.67"/><circle cx="680.9" cy="507.5" r="1.1" fill="#44f044" opacity="0.62"/><circle cx="689.0" cy="516.4" r="1.2" fill="#44f044" opacity="0.54"/><circle cx="696.0" cy="522.4" r="1.0" fill="#44f044" opacity="0.49"/><circle cx="697.1" cy="523.7" r="1.5" fill="#44f044" opacity="0.47"/><circle cx="705.7" cy="530.5" r="1.4" fill="#44f044" opacity="0.39"/><circle cx="708.9" cy="534.0" r="1.3" fill="#44f044" opacity="0.36"/><circle cx="712.3" cy="537.1" r="1.0" fill="#44f044" opacity="0.33"/><circle cx="718.7" cy="542.7" r="1.0" fill="#44f044" opacity="0.28"/><circle cx="654.3" cy="477.5" r="1.2" fill="#44f044" opacity="0.67"/><circle cx="653.5" cy="472.8" r="1.5" fill="#44f044" opacity="0.64"/><circle cx="652.1" cy="469.7" r="1.5" fill="#44f044" opacity="0.61"/><circle cx="652.7" cy="466.2" r="1.2" fill="#44f044" opacity="0.59"/><circle cx="648.7" cy="455.7" r="1.3" fill="#44f044" opacity="0.49"/><circle cx="649.0" cy="452.4" r="1.3" fill="#44f044" opacity="0.46"/><circle cx="648.1" cy="448.9" r="0.9" fill="#44f044" opacity="0.44"/><circle cx="645.7" cy="439.8" r="0.9" fill="#44f044" opacity="0.37"/><circle cx="644.5" cy="435.8" r="1.2" fill="#44f044" opacity="0.33"/><circle cx="643.1" cy="432.0" r="1.5" fill="#44f044" opacity="0.30"/><circle cx="643.4" cy="427.5" r="1.1" fill="#44f044" opacity="0.27"/><circle cx="656.9" cy="480.6" r="1.4" fill="#44f044" opacity="0.84"/><circle cx="657.4" cy="476.6" r="1.3" fill="#44f044" opacity="0.81"/><circle cx="656.7" cy="474.2" r="0.9" fill="#44f044" opacity="0.78"/><circle cx="657.3" cy="469.0" r="1.3" fill="#44f044" opacity="0.72"/><circle cx="656.7" cy="462.5" r="1.0" fill="#44f044" opacity="0.63"/><circle cx="657.1" cy="453.8" r="1.2" fill="#44f044" opacity="0.54"/><circle cx="657.2" cy="441.9" r="1.2" fill="#44f044" opacity="0.40"/><circle cx="657.0" cy="433.5" r="1.4" fill="#44f044" opacity="0.30"/><circle cx="658.1" cy="480.2" r="1.2" fill="#44f044" opacity="0.78"/><circle cx="659.0" cy="475.5" r="1.2" fill="#44f044" opacity="0.75"/><circle cx="659.2" cy="473.6" r="1.2" fill="#44f044" opacity="0.73"/><circle cx="661.3" cy="466.0" r="1.2" fill="#44f044" opacity="0.68"/><circle cx="662.3" cy="461.7" r="1.4" fill="#44f044" opacity="0.66"/><circle cx="665.2" cy="451.4" r="1.4" fill="#44f044" opacity="0.58"/><circle cx="665.3" cy="447.7" r="1.4" fill="#44f044" opacity="0.55"/><circle cx="665.4" cy="444.5" r="1.2" fill="#44f044" opacity="0.54"/><circle cx="668.0" cy="436.6" r="1.0" fill="#44f044" opacity="0.48"/><circle cx="667.7" cy="432.5" r="1.2" fill="#44f044" opacity="0.45"/><circle cx="669.5" cy="423.3" r="1.4" fill="#44f044" opacity="0.39"/><circle cx="671.7" cy="414.5" r="1.0" fill="#44f044" opacity="0.33"/><circle cx="672.0" cy="410.0" r="1.2" fill="#44f044" opacity="0.30"/><circle cx="673.6" cy="408.3" r="0.9" fill="#44f044" opacity="0.28"/><circle cx="652.4" cy="501.7" r="1.1" fill="#44f044" opacity="0.68"/><circle cx="652.4" cy="504.2" r="1.3" fill="#44f044" opacity="0.65"/><circle cx="647.3" cy="519.1" r="1.0" fill="#44f044" opacity="0.53"/><circle cx="646.2" cy="523.9" r="1.0" fill="#44f044" opacity="0.49"/><circle cx="644.0" cy="531.4" r="1.2" fill="#44f044" opacity="0.43"/><circle cx="639.2" cy="547.8" r="1.1" fill="#44f044" opacity="0.28"/><circle cx="638.1" cy="550.6" r="1.4" fill="#44f044" opacity="0.26"/><circle cx="659.6" cy="493.3" r="1.0" fill="#44f044" opacity="0.53"/><circle cx="661.4" cy="497.4" r="1.1" fill="#44f044" opacity="0.51"/><circle cx="662.0" cy="501.5" r="1.1" fill="#44f044" opacity="0.49"/><circle cx="663.8" cy="504.6" r="1.5" fill="#44f044" opacity="0.47"/><circle cx="665.9" cy="508.7" r="1.0" fill="#44f044" opacity="0.45"/><circle cx="667.7" cy="515.0" r="1.1" fill="#44f044" opacity="0.42"/><circle cx="673.4" cy="529.3" r="1.5" fill="#44f044" opacity="0.33"/><circle cx="674.2" cy="533.2" r="1.4" fill="#44f044" opacity="0.31"/><circle cx="675.5" cy="536.4" r="1.3" fill="#44f044" opacity="0.29"/><circle cx="676.8" cy="540.5" r="1.5" fill="#44f044" opacity="0.27"/><circle cx="678.1" cy="542.3" r="1.4" fill="#44f044" opacity="0.26"/><circle cx="678.8" cy="544.6" r="1.1" fill="#44f044" opacity="0.24"/><circle cx="681.1" cy="550.2" r="1.0" fill="#44f044" opacity="0.22"/><circle cx="683.8" cy="558.1" r="0.9" fill="#44f044" opacity="0.17"/><circle cx="651.6" cy="491.2" r="1.4" fill="#44f044" opacity="0.58"/><circle cx="649.2" cy="495.6" r="1.4" fill="#44f044" opacity="0.56"/><circle cx="638.7" cy="504.7" r="1.2" fill="#44f044" opacity="0.48"/><circle cx="629.6" cy="512.8" r="1.0" fill="#44f044" opacity="0.43"/><circle cx="627.3" cy="516.8" r="1.0" fill="#44f044" opacity="0.40"/><circle cx="623.0" cy="521.0" r="1.0" fill="#44f044" opacity="0.37"/><circle cx="619.8" cy="522.9" r="1.1" fill="#44f044" opacity="0.36"/><circle cx="616.8" cy="525.9" r="1.4" fill="#44f044" opacity="0.33"/><circle cx="613.9" cy="529.4" r="1.4" fill="#44f044" opacity="0.31"/><circle cx="612.1" cy="532.0" r="1.1" fill="#44f044" opacity="0.30"/><circle cx="607.3" cy="536.1" r="1.1" fill="#44f044" opacity="0.26"/><circle cx="603.8" cy="538.7" r="0.9" fill="#44f044" opacity="0.24"/><circle cx="601.0" cy="542.8" r="1.5" fill="#44f044" opacity="0.22"/><circle cx="663.4" cy="490.2" r="1.1" fill="#44f044" opacity="0.61"/><circle cx="667.2" cy="491.6" r="1.0" fill="#44f044" opacity="0.60"/><circle cx="670.1" cy="495.0" r="1.4" fill="#44f044" opacity="0.57"/><circle cx="681.1" cy="501.0" r="1.4" fill="#44f044" opacity="0.51"/><circle cx="688.3" cy="504.7" r="0.9" fill="#44f044" opacity="0.47"/><circle cx="700.9" cy="512.1" r="1.4" fill="#44f044" opacity="0.39"/><circle cx="704.9" cy="513.0" r="1.0" fill="#44f044" opacity="0.38"/><circle cx="708.6" cy="515.9" r="1.1" fill="#44f044" opacity="0.35"/><circle cx="715.7" cy="520.0" r="1.3" fill="#44f044" opacity="0.31"/><circle cx="718.7" cy="520.9" r="1.0" fill="#44f044" opacity="0.29"/><circle cx="732.7" cy="529.8" r="1.3" fill="#44f044" opacity="0.21"/><circle cx="650.7" cy="488.2" r="1.2" fill="#44f044" opacity="0.73"/><circle cx="641.3" cy="491.0" r="1.5" fill="#44f044" opacity="0.68"/><circle cx="632.4" cy="492.5" r="1.2" fill="#44f044" opacity="0.63"/><circle cx="630.5" cy="492.6" r="1.3" fill="#44f044" opacity="0.62"/><circle cx="625.7" cy="494.6" r="1.1" fill="#44f044" opacity="0.59"/><circle cx="620.7" cy="494.7" r="1.3" fill="#44f044" opacity="0.57"/><circle cx="618.0" cy="495.5" r="1.2" fill="#44f044" opacity="0.55"/><circle cx="609.3" cy="496.7" r="1.0" fill="#44f044" opacity="0.51"/><circle cx="604.7" cy="498.7" r="1.3" fill="#44f044" opacity="0.48"/><circle cx="590.8" cy="501.0" r="1.5" fill="#44f044" opacity="0.40"/><circle cx="587.2" cy="502.1" r="1.1" fill="#44f044" opacity="0.38"/><circle cx="582.8" cy="503.9" r="1.5" fill="#44f044" opacity="0.36"/><circle cx="576.2" cy="505.2" r="1.1" fill="#44f044" opacity="0.32"/><circle cx="569.2" cy="506.3" r="0.9" fill="#44f044" opacity="0.28"/><circle cx="565.3" cy="507.2" r="1.3" fill="#44f044" opacity="0.26"/><circle cx="560.8" cy="508.2" r="1.3" fill="#44f044" opacity="0.24"/><circle cx="639.1" cy="484.1" r="1.1" fill="#44f044" opacity="0.53"/><circle cx="628.5" cy="482.7" r="0.9" fill="#44f044" opacity="0.43"/><circle cx="624.2" cy="481.2" r="1.4" fill="#44f044" opacity="0.38"/><circle cx="620.5" cy="480.4" r="1.4" fill="#44f044" opacity="0.34"/><circle cx="613.3" cy="479.8" r="1.4" fill="#44f044" opacity="0.29"/><circle cx="610.9" cy="477.8" r="1.3" fill="#44f044" opacity="0.25"/><circle cx="663.6" cy="485.5" r="1.2" fill="#44f044" opacity="0.58"/><circle cx="667.6" cy="484.4" r="1.4" fill="#44f044" opacity="0.55"/><circle cx="679.7" cy="482.5" r="0.9" fill="#44f044" opacity="0.50"/><circle cx="681.6" cy="482.1" r="1.4" fill="#44f044" opacity="0.49"/><circle cx="692.1" cy="479.6" r="1.3" fill="#44f044" opacity="0.44"/><circle cx="707.0" cy="477.1" r="1.0" fill="#44f044" opacity="0.36"/><circle cx="712.3" cy="475.2" r="1.4" fill="#44f044" opacity="0.34"/><circle cx="720.4" cy="474.5" r="1.2" fill="#44f044" opacity="0.30"/><circle cx="732.6" cy="472.3" r="1.1" fill="#44f044" opacity="0.24"/><circle cx="737.2" cy="470.0" r="1.4" fill="#44f044" opacity="0.22"/><circle cx="739.1" cy="469.7" r="1.3" fill="#44f044" opacity="0.21"/><circle cx="652.8" cy="482.2" r="1.1" fill="#44f044" opacity="0.67"/><circle cx="650.4" cy="477.8" r="1.2" fill="#44f044" opacity="0.63"/><circle cx="648.4" cy="476.6" r="1.4" fill="#44f044" opacity="0.60"/><circle cx="645.5" cy="472.3" r="1.2" fill="#44f044" opacity="0.55"/><circle cx="643.3" cy="469.9" r="1.0" fill="#44f044" opacity="0.52"/><circle cx="640.4" cy="465.9" r="1.1" fill="#44f044" opacity="0.47"/><circle cx="633.3" cy="456.6" r="1.1" fill="#44f044" opacity="0.35"/><circle cx="627.6" cy="449.3" r="1.3" fill="#44f044" opacity="0.26"/><circle cx="664.0" cy="485.9" r="1.5" fill="#44f044" opacity="0.52"/><circle cx="668.2" cy="486.5" r="1.3" fill="#44f044" opacity="0.50"/><circle cx="682.4" cy="484.8" r="1.2" fill="#44f044" opacity="0.45"/><circle cx="685.6" cy="484.5" r="1.0" fill="#44f044" opacity="0.43"/><circle cx="695.8" cy="484.1" r="1.4" fill="#44f044" opacity="0.39"/><circle cx="705.0" cy="484.1" r="1.3" fill="#44f044" opacity="0.36"/><circle cx="713.6" cy="482.7" r="1.3" fill="#44f044" opacity="0.32"/><circle cx="721.6" cy="483.3" r="0.9" fill="#44f044" opacity="0.29"/><circle cx="725.0" cy="483.2" r="1.2" fill="#44f044" opacity="0.28"/><circle cx="732.0" cy="481.5" r="1.4" fill="#44f044" opacity="0.25"/><circle cx="735.1" cy="481.2" r="1.1" fill="#44f044" opacity="0.24"/><circle cx="738.7" cy="481.8" r="1.0" fill="#44f044" opacity="0.22"/><circle cx="741.7" cy="481.9" r="1.4" fill="#44f044" opacity="0.21"/><circle cx="745.2" cy="481.4" r="1.1" fill="#44f044" opacity="0.20"/><circle cx="663.5" cy="483.3" r="1.2" fill="#44f044" opacity="0.79"/><circle cx="666.7" cy="481.7" r="0.9" fill="#44f044" opacity="0.77"/><circle cx="670.2" cy="480.3" r="1.0" fill="#44f044" opacity="0.74"/><circle cx="674.3" cy="479.4" r="1.4" fill="#44f044" opacity="0.72"/><circle cx="681.5" cy="475.4" r="1.2" fill="#44f044" opacity="0.66"/><circle cx="687.4" cy="472.0" r="1.3" fill="#44f044" opacity="0.62"/><circle cx="693.1" cy="469.6" r="1.0" fill="#44f044" opacity="0.57"/><circle cx="702.3" cy="464.7" r="1.0" fill="#44f044" opacity="0.51"/><circle cx="710.1" cy="460.8" r="1.2" fill="#44f044" opacity="0.45"/><circle cx="720.7" cy="455.0" r="1.3" fill="#44f044" opacity="0.38"/><circle cx="724.5" cy="452.4" r="1.1" fill="#44f044" opacity="0.34"/><circle cx="728.9" cy="450.5" r="0.9" fill="#44f044" opacity="0.31"/><circle cx="732.9" cy="448.5" r="1.3" fill="#44f044" opacity="0.29"/><circle cx="734.2" cy="448.3" r="1.4" fill="#44f044" opacity="0.27"/><circle cx="649.7" cy="485.4" r="1.5" fill="#44f044" opacity="0.72"/><circle cx="641.3" cy="481.6" r="1.3" fill="#44f044" opacity="0.66"/><circle cx="638.6" cy="481.7" r="1.2" fill="#44f044" opacity="0.64"/><circle cx="635.3" cy="480.8" r="1.4" fill="#44f044" opacity="0.62"/><circle cx="628.6" cy="478.9" r="1.2" fill="#44f044" opacity="0.58"/><circle cx="624.1" cy="476.9" r="1.0" fill="#44f044" opacity="0.55"/><circle cx="615.8" cy="475.1" r="1.4" fill="#44f044" opacity="0.50"/><circle cx="612.7" cy="473.5" r="1.4" fill="#44f044" opacity="0.48"/><circle cx="609.9" cy="472.9" r="1.3" fill="#44f044" opacity="0.46"/><circle cx="606.3" cy="471.0" r="1.3" fill="#44f044" opacity="0.44"/><circle cx="602.9" cy="469.9" r="1.3" fill="#44f044" opacity="0.41"/><circle cx="600.0" cy="469.8" r="1.2" fill="#44f044" opacity="0.39"/><circle cx="596.1" cy="468.8" r="1.5" fill="#44f044" opacity="0.37"/><circle cx="584.1" cy="465.4" r="1.1" fill="#44f044" opacity="0.29"/><circle cx="659.5" cy="480.4" r="1.3" fill="#44f044" opacity="0.79"/><circle cx="663.8" cy="472.7" r="1.3" fill="#44f044" opacity="0.73"/><circle cx="665.6" cy="469.7" r="1.0" fill="#44f044" opacity="0.70"/><circle cx="667.4" cy="467.0" r="1.3" fill="#44f044" opacity="0.67"/><circle cx="670.5" cy="459.6" r="1.4" fill="#44f044" opacity="0.61"/><circle cx="670.9" cy="458.3" r="1.4" fill="#44f044" opacity="0.59"/><circle cx="672.7" cy="453.7" r="1.1" fill="#44f044" opacity="0.56"/><circle cx="677.2" cy="447.4" r="1.1" fill="#44f044" opacity="0.49"/><circle cx="677.8" cy="443.7" r="1.0" fill="#44f044" opacity="0.46"/><circle cx="684.3" cy="430.8" r="1.4" fill="#44f044" opacity="0.34"/><circle cx="687.8" cy="423.1" r="1.4" fill="#44f044" opacity="0.27"/><circle cx="644.2" cy="499.6" r="1.1" fill="#44f044" opacity="0.66"/><circle cx="643.4" cy="500.8" r="0.9" fill="#44f044" opacity="0.64"/><circle cx="635.5" cy="508.8" r="1.0" fill="#44f044" opacity="0.54"/><circle cx="630.2" cy="513.6" r="1.1" fill="#44f044" opacity="0.48"/><circle cx="623.7" cy="519.0" r="1.3" fill="#44f044" opacity="0.41"/><circle cx="620.5" cy="522.5" r="1.3" fill="#44f044" opacity="0.37"/><circle cx="618.9" cy="523.9" r="1.3" fill="#44f044" opacity="0.34"/><circle cx="611.5" cy="530.5" r="1.1" fill="#44f044" opacity="0.26"/><circle cx="651.4" cy="492.7" r="1.2" fill="#44f044" opacity="0.79"/><circle cx="649.9" cy="494.1" r="0.9" fill="#44f044" opacity="0.76"/><circle cx="647.8" cy="496.3" r="1.4" fill="#44f044" opacity="0.74"/><circle cx="637.9" cy="506.5" r="1.2" fill="#44f044" opacity="0.66"/><circle cx="633.9" cy="510.0" r="1.1" fill="#44f044" opacity="0.62"/><circle cx="630.9" cy="513.0" r="1.3" fill="#44f044" opacity="0.60"/><circle cx="629.1" cy="515.4" r="1.3" fill="#44f044" opacity="0.58"/><circle cx="627.1" cy="516.6" r="1.4" fill="#44f044" opacity="0.56"/><circle cx="624.5" cy="518.8" r="1.0" fill="#44f044" opacity="0.54"/><circle cx="621.7" cy="523.4" r="1.2" fill="#44f044" opacity="0.51"/><circle cx="617.5" cy="526.6" r="1.2" fill="#44f044" opacity="0.47"/><circle cx="610.1" cy="535.4" r="1.2" fill="#44f044" opacity="0.40"/><circle cx="608.0" cy="538.2" r="0.9" fill="#44f044" opacity="0.37"/><circle cx="601.9" cy="542.4" r="0.9" fill="#44f044" opacity="0.32"/><circle cx="599.7" cy="545.4" r="1.0" fill="#44f044" opacity="0.31"/><circle cx="596.5" cy="547.4" r="1.0" fill="#44f044" opacity="0.28"/><circle cx="664.9" cy="495.0" r="1.5" fill="#44f044" opacity="0.75"/><circle cx="668.6" cy="498.3" r="1.1" fill="#44f044" opacity="0.70"/><circle cx="678.3" cy="510.6" r="1.2" fill="#44f044" opacity="0.54"/><circle cx="681.5" cy="512.6" r="1.3" fill="#44f044" opacity="0.50"/><circle cx="685.3" cy="517.7" r="1.3" fill="#44f044" opacity="0.43"/><circle cx="687.8" cy="520.7" r="1.0" fill="#44f044" opacity="0.39"/><circle cx="652.3" cy="496.1" r="1.2" fill="#44f044" opacity="0.87"/><circle cx="650.7" cy="499.5" r="1.1" fill="#44f044" opacity="0.84"/><circle cx="643.1" cy="517.0" r="1.5" fill="#44f044" opacity="0.74"/><circle cx="637.9" cy="527.8" r="1.0" fill="#44f044" opacity="0.67"/><circle cx="634.9" cy="531.4" r="1.1" fill="#44f044" opacity="0.65"/><circle cx="627.6" cy="545.5" r="1.2" fill="#44f044" opacity="0.56"/><circle cx="626.3" cy="551.2" r="1.4" fill="#44f044" opacity="0.53"/><circle cx="623.4" cy="555.1" r="1.0" fill="#44f044" opacity="0.50"/><circle cx="622.6" cy="557.6" r="1.1" fill="#44f044" opacity="0.48"/><circle cx="621.1" cy="560.6" r="0.9" fill="#44f044" opacity="0.46"/><circle cx="618.7" cy="563.6" r="1.4" fill="#44f044" opacity="0.44"/><circle cx="610.4" cy="581.8" r="1.1" fill="#44f044" opacity="0.34"/><circle cx="608.7" cy="585.2" r="1.3" fill="#44f044" opacity="0.32"/><circle cx="606.4" cy="590.5" r="1.0" fill="#44f044" opacity="0.28"/><circle cx="663.3" cy="481.9" r="1.1" fill="#44f044" opacity="0.81"/><circle cx="664.2" cy="480.2" r="1.1" fill="#44f044" opacity="0.78"/><circle cx="668.5" cy="478.4" r="0.9" fill="#44f044" opacity="0.73"/><circle cx="673.0" cy="473.5" r="1.4" fill="#44f044" opacity="0.66"/><circle cx="680.0" cy="468.8" r="1.0" fill="#44f044" opacity="0.58"/><circle cx="681.7" cy="467.9" r="1.0" fill="#44f044" opacity="0.55"/><circle cx="693.8" cy="459.2" r="1.3" fill="#44f044" opacity="0.40"/><circle cx="696.9" cy="456.1" r="0.9" fill="#44f044" opacity="0.36"/><circle cx="703.3" cy="451.4" r="0.9" fill="#44f044" opacity="0.28"/><circle cx="653.8" cy="494.2" r="1.1" fill="#44f044" opacity="0.68"/><circle cx="652.7" cy="496.8" r="1.0" fill="#44f044" opacity="0.64"/><circle cx="651.2" cy="498.5" r="1.2" fill="#44f044" opacity="0.61"/><circle cx="648.8" cy="507.6" r="1.5" fill="#44f044" opacity="0.52"/><circle cx="645.4" cy="515.0" r="1.1" fill="#44f044" opacity="0.44"/><circle cx="642.5" cy="522.7" r="1.2" fill="#44f044" opacity="0.37"/><circle cx="639.1" cy="530.0" r="1.0" fill="#44f044" opacity="0.29"/><circle cx="638.0" cy="533.6" r="1.4" fill="#44f044" opacity="0.25"/><circle cx="650.3" cy="477.2" r="1.4" fill="#44f044" opacity="0.65"/><circle cx="647.3" cy="471.4" r="1.0" fill="#44f044" opacity="0.60"/><circle cx="645.2" cy="468.4" r="1.5" fill="#44f044" opacity="0.58"/><circle cx="638.9" cy="456.8" r="1.1" fill="#44f044" opacity="0.48"/><circle cx="637.0" cy="454.4" r="1.5" fill="#44f044" opacity="0.46"/><circle cx="634.2" cy="450.4" r="1.2" fill="#44f044" opacity="0.43"/><circle cx="632.6" cy="445.9" r="1.2" fill="#44f044" opacity="0.39"/><circle cx="628.6" cy="439.6" r="0.9" fill="#44f044" opacity="0.35"/><circle cx="621.9" cy="428.5" r="1.4" fill="#44f044" opacity="0.25"/><circle cx="620.2" cy="426.1" r="1.4" fill="#44f044" opacity="0.23"/><circle cx="664.4" cy="488.3" r="1.1" fill="#44f044" opacity="0.48"/><circle cx="679.7" cy="491.1" r="1.0" fill="#44f044" opacity="0.36"/><circle cx="684.5" cy="491.9" r="1.3" fill="#44f044" opacity="0.34"/><circle cx="693.2" cy="493.6" r="1.2" fill="#44f044" opacity="0.28"/><circle cx="698.0" cy="495.1" r="1.1" fill="#44f044" opacity="0.25"/><circle cx="708.9" cy="498.2" r="1.0" fill="#44f044" opacity="0.17"/><circle cx="663.5" cy="488.0" r="1.5" fill="#44f044" opacity="0.80"/><circle cx="667.9" cy="488.4" r="1.1" fill="#44f044" opacity="0.75"/><circle cx="673.5" cy="488.8" r="1.1" fill="#44f044" opacity="0.69"/><circle cx="688.3" cy="490.9" r="1.0" fill="#44f044" opacity="0.53"/><circle cx="691.9" cy="491.6" r="1.1" fill="#44f044" opacity="0.49"/><circle cx="698.6" cy="492.3" r="1.4" fill="#44f044" opacity="0.42"/><circle cx="701.7" cy="493.1" r="1.4" fill="#44f044" opacity="0.37"/><circle cx="710.3" cy="493.6" r="1.1" fill="#44f044" opacity="0.29"/><circle cx="646.8" cy="482.3" r="1.5" fill="#44f044" opacity="0.52"/><circle cx="643.8" cy="482.5" r="1.0" fill="#44f044" opacity="0.48"/><circle cx="640.2" cy="480.4" r="1.2" fill="#44f044" opacity="0.44"/><circle cx="636.9" cy="479.4" r="1.3" fill="#44f044" opacity="0.39"/><circle cx="631.2" cy="478.2" r="1.2" fill="#44f044" opacity="0.33"/><circle cx="627.4" cy="476.0" r="1.3" fill="#44f044" opacity="0.28"/><circle cx="624.5" cy="474.5" r="1.2" fill="#44f044" opacity="0.24"/><circle cx="621.8" cy="473.3" r="1.1" fill="#44f044" opacity="0.21"/><circle cx="667.2" cy="490.6" r="1.4" fill="#44f044" opacity="0.52"/><circle cx="674.9" cy="492.7" r="1.3" fill="#44f044" opacity="0.50"/><circle cx="682.1" cy="494.4" r="1.0" fill="#44f044" opacity="0.47"/><circle cx="691.4" cy="497.4" r="0.9" fill="#44f044" opacity="0.44"/><circle cx="694.3" cy="497.3" r="1.0" fill="#44f044" opacity="0.43"/><circle cx="701.0" cy="499.1" r="0.9" fill="#44f044" opacity="0.40"/><circle cx="704.8" cy="500.9" r="1.3" fill="#44f044" opacity="0.39"/><circle cx="709.5" cy="502.6" r="1.0" fill="#44f044" opacity="0.37"/><circle cx="714.5" cy="503.5" r="1.3" fill="#44f044" opacity="0.35"/><circle cx="720.4" cy="505.9" r="1.4" fill="#44f044" opacity="0.33"/><circle cx="725.9" cy="507.2" r="1.4" fill="#44f044" opacity="0.31"/><circle cx="735.4" cy="509.2" r="0.9" fill="#44f044" opacity="0.28"/><circle cx="740.6" cy="511.5" r="1.2" fill="#44f044" opacity="0.25"/><circle cx="748.4" cy="513.5" r="1.0" fill="#44f044" opacity="0.22"/><circle cx="751.1" cy="514.3" r="1.4" fill="#44f044" opacity="0.21"/><circle cx="762.1" cy="518.0" r="1.1" fill="#44f044" opacity="0.17"/><circle cx="663.1" cy="490.9" r="1.5" fill="#44f044" opacity="0.77"/><circle cx="666.5" cy="492.5" r="1.0" fill="#44f044" opacity="0.72"/><circle cx="669.3" cy="492.9" r="1.1" fill="#44f044" opacity="0.66"/><circle cx="676.9" cy="497.2" r="1.4" fill="#44f044" opacity="0.55"/><circle cx="686.1" cy="502.6" r="1.5" fill="#44f044" opacity="0.37"/><circle cx="689.0" cy="503.8" r="1.0" fill="#44f044" opacity="0.34"/><circle cx="781.6" cy="575.7" r="1.1" fill="#44f044" opacity="0.58"/><circle cx="777.3" cy="577.5" r="1.0" fill="#44f044" opacity="0.55"/><circle cx="773.6" cy="578.4" r="1.0" fill="#44f044" opacity="0.53"/><circle cx="770.7" cy="579.9" r="0.9" fill="#44f044" opacity="0.50"/><circle cx="765.9" cy="580.7" r="1.3" fill="#44f044" opacity="0.47"/><circle cx="749.2" cy="587.8" r="1.2" fill="#44f044" opacity="0.35"/><circle cx="744.3" cy="588.2" r="1.3" fill="#44f044" opacity="0.32"/><circle cx="737.6" cy="592.1" r="1.4" fill="#44f044" opacity="0.27"/><circle cx="796.3" cy="571.3" r="1.3" fill="#44f044" opacity="0.78"/><circle cx="794.0" cy="572.3" r="1.2" fill="#44f044" opacity="0.74"/><circle cx="782.7" cy="576.4" r="1.2" fill="#44f044" opacity="0.55"/><circle cx="780.8" cy="576.5" r="1.4" fill="#44f044" opacity="0.49"/><circle cx="772.5" cy="580.7" r="1.0" fill="#44f044" opacity="0.35"/><circle cx="809.8" cy="567.1" r="1.0" fill="#44f044" opacity="0.65"/><circle cx="812.8" cy="566.7" r="1.2" fill="#44f044" opacity="0.61"/><circle cx="816.3" cy="566.5" r="1.1" fill="#44f044" opacity="0.54"/><circle cx="821.4" cy="567.0" r="1.0" fill="#44f044" opacity="0.48"/><circle cx="823.3" cy="566.8" r="1.3" fill="#44f044" opacity="0.44"/><circle cx="835.3" cy="566.0" r="1.3" fill="#44f044" opacity="0.27"/><circle cx="798.2" cy="573.1" r="1.5" fill="#44f044" opacity="0.48"/><circle cx="793.4" cy="580.6" r="1.1" fill="#44f044" opacity="0.44"/><circle cx="791.0" cy="583.9" r="1.2" fill="#44f044" opacity="0.42"/><circle cx="783.7" cy="593.6" r="1.0" fill="#44f044" opacity="0.37"/><circle cx="782.3" cy="597.1" r="1.4" fill="#44f044" opacity="0.35"/><circle cx="779.6" cy="601.4" r="1.5" fill="#44f044" opacity="0.34"/><circle cx="771.6" cy="611.0" r="1.0" fill="#44f044" opacity="0.28"/><circle cx="769.3" cy="614.6" r="1.2" fill="#44f044" opacity="0.26"/><circle cx="756.1" cy="631.1" r="1.4" fill="#44f044" opacity="0.18"/><circle cx="806.0" cy="579.2" r="1.4" fill="#44f044" opacity="0.47"/><circle cx="807.5" cy="585.4" r="1.3" fill="#44f044" opacity="0.43"/><circle cx="808.0" cy="591.2" r="1.5" fill="#44f044" opacity="0.39"/><circle cx="810.8" cy="598.4" r="1.4" fill="#44f044" opacity="0.35"/><circle cx="811.5" cy="601.6" r="1.4" fill="#44f044" opacity="0.33"/><circle cx="811.7" cy="605.5" r="1.0" fill="#44f044" opacity="0.31"/><circle cx="812.6" cy="608.2" r="1.2" fill="#44f044" opacity="0.29"/><circle cx="814.2" cy="614.4" r="1.0" fill="#44f044" opacity="0.25"/><circle cx="815.1" cy="619.6" r="1.2" fill="#44f044" opacity="0.23"/><circle cx="817.7" cy="628.7" r="1.3" fill="#44f044" opacity="0.17"/><circle cx="808.7" cy="563.5" r="1.1" fill="#44f044" opacity="0.77"/><circle cx="812.4" cy="560.5" r="1.5" fill="#44f044" opacity="0.69"/><circle cx="819.5" cy="555.7" r="1.2" fill="#44f044" opacity="0.55"/><circle cx="823.3" cy="553.3" r="1.2" fill="#44f044" opacity="0.49"/><circle cx="825.9" cy="550.5" r="1.0" fill="#44f044" opacity="0.45"/><circle cx="832.6" cy="545.1" r="1.2" fill="#44f044" opacity="0.32"/><circle cx="802.5" cy="561.5" r="1.1" fill="#44f044" opacity="0.48"/><circle cx="803.3" cy="549.0" r="0.9" fill="#44f044" opacity="0.44"/><circle cx="802.5" cy="541.2" r="1.3" fill="#44f044" opacity="0.41"/><circle cx="803.1" cy="526.6" r="1.4" fill="#44f044" opacity="0.35"/><circle cx="802.2" cy="522.2" r="1.3" fill="#44f044" opacity="0.33"/><circle cx="802.3" cy="517.3" r="1.4" fill="#44f044" opacity="0.32"/><circle cx="802.8" cy="513.2" r="1.3" fill="#44f044" opacity="0.30"/><circle cx="802.8" cy="500.9" r="1.1" fill="#44f044" opacity="0.25"/><circle cx="802.3" cy="497.3" r="1.2" fill="#44f044" opacity="0.24"/><circle cx="803.2" cy="493.1" r="1.1" fill="#44f044" opacity="0.23"/><circle cx="802.4" cy="489.5" r="1.5" fill="#44f044" opacity="0.21"/><circle cx="803.0" cy="482.6" r="1.2" fill="#44f044" opacity="0.19"/><circle cx="802.4" cy="475.3" r="1.2" fill="#44f044" opacity="0.16"/><circle cx="796.9" cy="564.1" r="1.1" fill="#44f044" opacity="0.51"/><circle cx="794.8" cy="560.7" r="1.3" fill="#44f044" opacity="0.49"/><circle cx="791.5" cy="560.0" r="1.2" fill="#44f044" opacity="0.48"/><circle cx="780.5" cy="551.6" r="1.0" fill="#44f044" opacity="0.40"/><circle cx="765.0" cy="538.8" r="1.1" fill="#44f044" opacity="0.30"/><circle cx="755.9" cy="532.3" r="1.2" fill="#44f044" opacity="0.24"/><circle cx="754.5" cy="531.2" r="0.9" fill="#44f044" opacity="0.22"/><circle cx="802.7" cy="574.3" r="1.4" fill="#44f044" opacity="0.46"/><circle cx="804.1" cy="578.8" r="1.0" fill="#44f044" opacity="0.43"/><circle cx="803.9" cy="583.4" r="1.2" fill="#44f044" opacity="0.39"/><circle cx="805.2" cy="594.7" r="1.0" fill="#44f044" opacity="0.31"/><circle cx="806.3" cy="608.8" r="1.0" fill="#44f044" opacity="0.20"/><circle cx="805.7" cy="612.9" r="1.2" fill="#44f044" opacity="0.18"/><circle cx="792.2" cy="561.5" r="1.5" fill="#44f044" opacity="0.64"/><circle cx="789.7" cy="559.8" r="1.3" fill="#44f044" opacity="0.62"/><circle cx="785.4" cy="557.8" r="1.4" fill="#44f044" opacity="0.59"/><circle cx="782.9" cy="556.6" r="1.3" fill="#44f044" opacity="0.56"/><circle cx="779.8" cy="555.9" r="0.9" fill="#44f044" opacity="0.53"/><circle cx="777.6" cy="554.3" r="1.1" fill="#44f044" opacity="0.50"/><circle cx="774.4" cy="552.4" r="1.1" fill="#44f044" opacity="0.47"/><circle cx="769.5" cy="548.6" r="1.3" fill="#44f044" opacity="0.42"/><circle cx="768.3" cy="547.8" r="1.0" fill="#44f044" opacity="0.40"/><circle cx="764.0" cy="546.2" r="1.0" fill="#44f044" opacity="0.36"/><circle cx="756.9" cy="542.1" r="1.3" fill="#44f044" opacity="0.29"/><circle cx="752.2" cy="538.8" r="1.5" fill="#44f044" opacity="0.24"/><circle cx="813.7" cy="570.7" r="1.0" fill="#44f044" opacity="0.54"/><circle cx="836.7" cy="576.2" r="1.3" fill="#44f044" opacity="0.46"/><circle cx="844.6" cy="579.4" r="1.1" fill="#44f044" opacity="0.43"/><circle cx="848.5" cy="579.7" r="1.2" fill="#44f044" opacity="0.41"/><circle cx="858.2" cy="583.3" r="1.1" fill="#44f044" opacity="0.38"/><circle cx="862.7" cy="584.4" r="1.3" fill="#44f044" opacity="0.37"/><circle cx="866.0" cy="583.9" r="1.1" fill="#44f044" opacity="0.35"/><circle cx="869.2" cy="585.7" r="1.3" fill="#44f044" opacity="0.34"/><circle cx="873.5" cy="586.1" r="1.2" fill="#44f044" opacity="0.32"/><circle cx="877.1" cy="587.4" r="0.9" fill="#44f044" opacity="0.31"/><circle cx="882.5" cy="589.0" r="1.4" fill="#44f044" opacity="0.29"/><circle cx="887.2" cy="590.5" r="1.1" fill="#44f044" opacity="0.28"/><circle cx="892.9" cy="592.6" r="1.0" fill="#44f044" opacity="0.25"/><circle cx="897.6" cy="593.2" r="1.3" fill="#44f044" opacity="0.24"/><circle cx="908.9" cy="595.3" r="1.2" fill="#44f044" opacity="0.20"/><circle cx="912.1" cy="596.8" r="1.3" fill="#44f044" opacity="0.19"/><circle cx="916.1" cy="597.4" r="1.0" fill="#44f044" opacity="0.18"/><circle cx="809.4" cy="566.3" r="1.3" fill="#44f044" opacity="0.76"/><circle cx="820.0" cy="563.2" r="1.0" fill="#44f044" opacity="0.68"/><circle cx="826.0" cy="560.5" r="1.1" fill="#44f044" opacity="0.63"/><circle cx="836.2" cy="557.1" r="1.5" fill="#44f044" opacity="0.55"/><circle cx="838.8" cy="555.8" r="1.0" fill="#44f044" opacity="0.52"/><circle cx="845.6" cy="554.2" r="1.2" fill="#44f044" opacity="0.47"/><circle cx="848.5" cy="552.9" r="1.3" fill="#44f044" opacity="0.45"/><circle cx="852.4" cy="551.4" r="1.5" fill="#44f044" opacity="0.42"/><circle cx="855.3" cy="550.5" r="1.4" fill="#44f044" opacity="0.39"/><circle cx="858.6" cy="549.4" r="1.1" fill="#44f044" opacity="0.37"/><circle cx="862.5" cy="549.0" r="0.9" fill="#44f044" opacity="0.34"/><circle cx="865.2" cy="547.0" r="0.9" fill="#44f044" opacity="0.31"/><circle cx="869.9" cy="546.4" r="1.2" fill="#44f044" opacity="0.27"/><circle cx="872.3" cy="544.8" r="1.1" fill="#44f044" opacity="0.25"/><circle cx="809.4" cy="567.6" r="1.2" fill="#44f044" opacity="0.76"/><circle cx="812.4" cy="566.7" r="1.4" fill="#44f044" opacity="0.71"/><circle cx="817.3" cy="566.0" r="1.2" fill="#44f044" opacity="0.63"/><circle cx="827.0" cy="564.5" r="1.3" fill="#44f044" opacity="0.49"/><circle cx="829.0" cy="563.9" r="1.0" fill="#44f044" opacity="0.44"/><circle cx="832.7" cy="563.3" r="1.4" fill="#44f044" opacity="0.40"/><circle cx="838.3" cy="562.4" r="1.2" fill="#44f044" opacity="0.29"/><circle cx="806.9" cy="572.7" r="0.9" fill="#44f044" opacity="0.82"/><circle cx="809.0" cy="574.7" r="1.3" fill="#44f044" opacity="0.80"/><circle cx="812.1" cy="577.2" r="1.5" fill="#44f044" opacity="0.77"/><circle cx="822.2" cy="590.2" r="1.2" fill="#44f044" opacity="0.65"/><circle cx="824.8" cy="593.1" r="0.9" fill="#44f044" opacity="0.62"/><circle cx="829.5" cy="599.1" r="1.0" fill="#44f044" opacity="0.56"/><circle cx="832.5" cy="601.5" r="1.4" fill="#44f044" opacity="0.54"/><circle cx="835.6" cy="606.2" r="1.1" fill="#44f044" opacity="0.49"/><circle cx="839.2" cy="609.9" r="0.9" fill="#44f044" opacity="0.45"/><circle cx="847.5" cy="617.3" r="1.1" fill="#44f044" opacity="0.36"/><circle cx="848.6" cy="620.6" r="1.0" fill="#44f044" opacity="0.34"/><circle cx="854.6" cy="625.9" r="1.0" fill="#44f044" opacity="0.28"/><circle cx="801.5" cy="561.6" r="1.0" fill="#44f044" opacity="0.58"/><circle cx="797.8" cy="549.0" r="1.0" fill="#44f044" opacity="0.49"/><circle cx="795.5" cy="539.1" r="1.4" fill="#44f044" opacity="0.42"/><circle cx="794.6" cy="536.7" r="1.4" fill="#44f044" opacity="0.39"/><circle cx="792.7" cy="530.7" r="1.5" fill="#44f044" opacity="0.36"/><circle cx="790.9" cy="525.4" r="1.3" fill="#44f044" opacity="0.31"/><circle cx="791.3" cy="522.0" r="1.4" fill="#44f044" opacity="0.29"/><circle cx="786.5" cy="509.6" r="1.5" fill="#44f044" opacity="0.19"/><circle cx="809.2" cy="569.7" r="1.3" fill="#44f044" opacity="0.61"/><circle cx="813.9" cy="570.2" r="1.4" fill="#44f044" opacity="0.59"/><circle cx="824.2" cy="572.1" r="1.1" fill="#44f044" opacity="0.55"/><circle cx="827.7" cy="573.6" r="1.4" fill="#44f044" opacity="0.53"/><circle cx="832.5" cy="574.5" r="1.2" fill="#44f044" opacity="0.51"/><circle cx="839.1" cy="576.1" r="1.4" fill="#44f044" opacity="0.48"/><circle cx="843.2" cy="577.2" r="1.4" fill="#44f044" opacity="0.46"/><circle cx="848.8" cy="578.7" r="1.2" fill="#44f044" opacity="0.44"/><circle cx="853.0" cy="579.9" r="1.5" fill="#44f044" opacity="0.42"/><circle cx="857.8" cy="580.2" r="1.3" fill="#44f044" opacity="0.40"/><circle cx="861.5" cy="581.9" r="1.0" fill="#44f044" opacity="0.38"/><circle cx="869.2" cy="582.6" r="1.1" fill="#44f044" opacity="0.35"/><circle cx="871.0" cy="583.8" r="1.3" fill="#44f044" opacity="0.34"/><circle cx="875.3" cy="583.9" r="0.9" fill="#44f044" opacity="0.32"/><circle cx="884.0" cy="585.4" r="1.3" fill="#44f044" opacity="0.28"/><circle cx="887.2" cy="587.1" r="1.4" fill="#44f044" opacity="0.26"/><circle cx="895.6" cy="589.4" r="1.4" fill="#44f044" opacity="0.23"/><circle cx="898.4" cy="589.6" r="1.4" fill="#44f044" opacity="0.22"/><circle cx="900.8" cy="589.9" r="1.5" fill="#44f044" opacity="0.20"/><circle cx="804.1" cy="580.3" r="1.5" fill="#44f044" opacity="0.50"/><circle cx="805.2" cy="589.9" r="1.0" fill="#44f044" opacity="0.44"/><circle cx="805.6" cy="596.2" r="1.2" fill="#44f044" opacity="0.40"/><circle cx="806.0" cy="600.1" r="1.2" fill="#44f044" opacity="0.38"/><circle cx="806.0" cy="603.2" r="1.1" fill="#44f044" opacity="0.36"/><circle cx="806.0" cy="606.0" r="1.3" fill="#44f044" opacity="0.35"/><circle cx="806.7" cy="610.1" r="1.4" fill="#44f044" opacity="0.32"/><circle cx="807.0" cy="614.0" r="1.1" fill="#44f044" opacity="0.30"/><circle cx="807.0" cy="618.8" r="1.0" fill="#44f044" opacity="0.27"/><circle cx="807.4" cy="621.7" r="1.4" fill="#44f044" opacity="0.25"/><circle cx="808.5" cy="627.8" r="1.0" fill="#44f044" opacity="0.22"/><circle cx="809.4" cy="632.6" r="0.9" fill="#44f044" opacity="0.19"/><circle cx="798.4" cy="571.9" r="1.1" fill="#44f044" opacity="0.70"/><circle cx="795.9" cy="574.4" r="1.2" fill="#44f044" opacity="0.65"/><circle cx="787.3" cy="583.0" r="1.2" fill="#44f044" opacity="0.49"/><circle cx="784.5" cy="585.0" r="1.0" fill="#44f044" opacity="0.44"/><circle cx="781.6" cy="588.2" r="1.4" fill="#44f044" opacity="0.38"/><circle cx="778.2" cy="590.9" r="0.9" fill="#44f044" opacity="0.32"/><circle cx="775.1" cy="592.5" r="1.1" fill="#44f044" opacity="0.25"/><circle cx="810.4" cy="568.5" r="0.9" fill="#44f044" opacity="0.63"/><circle cx="817.9" cy="569.4" r="0.9" fill="#44f044" opacity="0.57"/><circle cx="821.6" cy="570.1" r="1.3" fill="#44f044" opacity="0.54"/><circle cx="826.2" cy="569.8" r="1.1" fill="#44f044" opacity="0.51"/><circle cx="828.5" cy="570.0" r="1.4" fill="#44f044" opacity="0.49"/><circle cx="834.8" cy="571.4" r="1.4" fill="#44f044" opacity="0.44"/><circle cx="839.1" cy="572.0" r="1.4" fill="#44f044" opacity="0.42"/><circle cx="841.0" cy="572.2" r="1.4" fill="#44f044" opacity="0.40"/><circle cx="849.4" cy="572.6" r="1.1" fill="#44f044" opacity="0.34"/><circle cx="862.4" cy="573.9" r="1.5" fill="#44f044" opacity="0.24"/><circle cx="865.5" cy="573.6" r="1.2" fill="#44f044" opacity="0.21"/><circle cx="805.6" cy="573.7" r="1.0" fill="#44f044" opacity="0.63"/><circle cx="810.9" cy="583.2" r="1.3" fill="#44f044" opacity="0.58"/><circle cx="811.9" cy="586.2" r="1.1" fill="#44f044" opacity="0.56"/><circle cx="813.8" cy="590.1" r="1.0" fill="#44f044" opacity="0.54"/><circle cx="816.5" cy="592.7" r="1.0" fill="#44f044" opacity="0.52"/><circle cx="818.3" cy="595.7" r="1.2" fill="#44f044" opacity="0.50"/><circle cx="819.5" cy="599.3" r="1.5" fill="#44f044" opacity="0.49"/><circle cx="825.8" cy="612.6" r="1.2" fill="#44f044" opacity="0.41"/><circle cx="830.1" cy="618.0" r="1.1" fill="#44f044" opacity="0.37"/><circle cx="832.2" cy="624.0" r="1.1" fill="#44f044" opacity="0.33"/><circle cx="836.8" cy="632.9" r="1.0" fill="#44f044" opacity="0.29"/><circle cx="838.3" cy="635.1" r="1.0" fill="#44f044" opacity="0.27"/><circle cx="841.0" cy="640.9" r="1.5" fill="#44f044" opacity="0.23"/><circle cx="841.9" cy="644.0" r="1.4" fill="#44f044" opacity="0.22"/><circle cx="796.5" cy="566.9" r="1.2" fill="#44f044" opacity="0.78"/><circle cx="791.6" cy="566.0" r="1.1" fill="#44f044" opacity="0.72"/><circle cx="787.3" cy="565.0" r="1.2" fill="#44f044" opacity="0.66"/><circle cx="784.6" cy="563.6" r="1.1" fill="#44f044" opacity="0.63"/><circle cx="781.6" cy="563.1" r="1.4" fill="#44f044" opacity="0.59"/><circle cx="777.6" cy="561.8" r="1.1" fill="#44f044" opacity="0.55"/><circle cx="773.9" cy="561.1" r="1.5" fill="#44f044" opacity="0.49"/><circle cx="765.2" cy="559.6" r="1.0" fill="#44f044" opacity="0.40"/><circle cx="756.3" cy="557.6" r="1.2" fill="#44f044" opacity="0.28"/><circle cx="796.8" cy="575.0" r="1.4" fill="#44f044" opacity="0.81"/><circle cx="795.7" cy="577.6" r="1.3" fill="#44f044" opacity="0.79"/><circle cx="793.7" cy="581.0" r="1.0" fill="#44f044" opacity="0.75"/><circle cx="792.0" cy="584.0" r="1.4" fill="#44f044" opacity="0.72"/><circle cx="789.0" cy="585.7" r="1.2" fill="#44f044" opacity="0.69"/><circle cx="784.9" cy="591.0" r="1.3" fill="#44f044" opacity="0.62"/><circle cx="783.0" cy="595.8" r="1.4" fill="#44f044" opacity="0.57"/><circle cx="781.1" cy="597.7" r="1.5" fill="#44f044" opacity="0.54"/><circle cx="776.9" cy="603.4" r="1.4" fill="#44f044" opacity="0.47"/><circle cx="773.2" cy="606.5" r="1.1" fill="#44f044" opacity="0.43"/><circle cx="770.9" cy="609.7" r="1.1" fill="#44f044" opacity="0.38"/><circle cx="764.7" cy="619.4" r="1.3" fill="#44f044" opacity="0.28"/><circle cx="803.5" cy="561.4" r="1.1" fill="#44f044" opacity="0.64"/><circle cx="803.4" cy="557.2" r="1.3" fill="#44f044" opacity="0.61"/><circle cx="803.8" cy="550.3" r="1.4" fill="#44f044" opacity="0.53"/><circle cx="804.5" cy="546.5" r="1.2" fill="#44f044" opacity="0.48"/><circle cx="804.3" cy="542.7" r="1.0" fill="#44f044" opacity="0.44"/><circle cx="804.0" cy="538.3" r="1.2" fill="#44f044" opacity="0.39"/><circle cx="805.1" cy="534.7" r="1.5" fill="#44f044" opacity="0.34"/><circle cx="800.0" cy="574.4" r="1.3" fill="#44f044" opacity="0.65"/><circle cx="797.4" cy="578.2" r="0.9" fill="#44f044" opacity="0.61"/><circle cx="796.3" cy="581.0" r="1.4" fill="#44f044" opacity="0.57"/><circle cx="792.3" cy="587.2" r="1.2" fill="#44f044" opacity="0.48"/><circle cx="791.2" cy="590.1" r="1.0" fill="#44f044" opacity="0.44"/><circle cx="788.5" cy="595.0" r="1.2" fill="#44f044" opacity="0.38"/><circle cx="803.1" cy="561.7" r="1.2" fill="#44f044" opacity="0.54"/><circle cx="802.9" cy="549.5" r="1.0" fill="#44f044" opacity="0.46"/><circle cx="803.2" cy="533.5" r="1.3" fill="#44f044" opacity="0.34"/><circle cx="802.2" cy="530.8" r="1.2" fill="#44f044" opacity="0.32"/><circle cx="803.1" cy="528.0" r="1.2" fill="#44f044" opacity="0.29"/><circle cx="802.5" cy="515.1" r="1.0" fill="#44f044" opacity="0.20"/><circle cx="801.6" cy="511.9" r="1.3" fill="#44f044" opacity="0.18"/><circle cx="788.3" cy="558.6" r="1.5" fill="#44f044" opacity="0.47"/><circle cx="783.8" cy="555.5" r="1.2" fill="#44f044" opacity="0.44"/><circle cx="779.3" cy="551.7" r="1.0" fill="#44f044" opacity="0.39"/><circle cx="774.5" cy="549.0" r="1.3" fill="#44f044" opacity="0.36"/><circle cx="768.3" cy="544.4" r="1.0" fill="#44f044" opacity="0.31"/><circle cx="765.3" cy="542.5" r="1.5" fill="#44f044" opacity="0.28"/><circle cx="761.8" cy="540.6" r="1.4" fill="#44f044" opacity="0.26"/><circle cx="760.0" cy="537.8" r="1.3" fill="#44f044" opacity="0.23"/><circle cx="756.8" cy="536.8" r="1.0" fill="#44f044" opacity="0.22"/><circle cx="794.4" cy="562.2" r="1.5" fill="#44f044" opacity="0.62"/><circle cx="791.5" cy="559.8" r="1.2" fill="#44f044" opacity="0.60"/><circle cx="787.8" cy="557.9" r="1.4" fill="#44f044" opacity="0.59"/><circle cx="779.7" cy="553.4" r="1.1" fill="#44f044" opacity="0.54"/><circle cx="772.7" cy="549.5" r="1.0" fill="#44f044" opacity="0.50"/><circle cx="767.5" cy="544.9" r="1.1" fill="#44f044" opacity="0.47"/><circle cx="758.5" cy="538.2" r="1.3" fill="#44f044" opacity="0.42"/><circle cx="753.8" cy="537.0" r="1.2" fill="#44f044" opacity="0.39"/><circle cx="750.7" cy="534.9" r="1.0" fill="#44f044" opacity="0.37"/><circle cx="748.4" cy="531.4" r="1.2" fill="#44f044" opacity="0.36"/><circle cx="738.4" cy="526.7" r="1.4" fill="#44f044" opacity="0.30"/><circle cx="732.1" cy="522.7" r="1.5" fill="#44f044" opacity="0.27"/><circle cx="729.0" cy="519.7" r="0.9" fill="#44f044" opacity="0.25"/><circle cx="727.1" cy="519.3" r="0.9" fill="#44f044" opacity="0.24"/><circle cx="723.6" cy="516.8" r="1.0" fill="#44f044" opacity="0.22"/><circle cx="721.2" cy="515.1" r="1.1" fill="#44f044" opacity="0.20"/><circle cx="800.4" cy="574.3" r="1.1" fill="#44f044" opacity="0.55"/><circle cx="808.5" cy="582.5" r="1.2" fill="#44f044" opacity="0.47"/><circle cx="810.0" cy="587.0" r="1.4" fill="#44f044" opacity="0.43"/><circle cx="811.2" cy="594.9" r="1.2" fill="#44f044" opacity="0.38"/><circle cx="812.6" cy="597.6" r="1.3" fill="#44f044" opacity="0.35"/><circle cx="815.5" cy="604.9" r="1.4" fill="#44f044" opacity="0.30"/><circle cx="817.2" cy="607.8" r="1.4" fill="#44f044" opacity="0.28"/><circle cx="817.9" cy="615.1" r="1.5" fill="#44f044" opacity="0.23"/><circle cx="820.2" cy="616.9" r="1.3" fill="#44f044" opacity="0.20"/><circle cx="821.4" cy="622.1" r="1.4" fill="#44f044" opacity="0.17"/><circle cx="803.5" cy="574.9" r="1.3" fill="#44f044" opacity="0.88"/><circle cx="804.0" cy="578.6" r="0.9" fill="#44f044" opacity="0.85"/><circle cx="805.8" cy="582.3" r="1.2" fill="#44f044" opacity="0.82"/><circle cx="805.8" cy="584.5" r="1.5" fill="#44f044" opacity="0.80"/><circle cx="806.5" cy="587.6" r="1.4" fill="#44f044" opacity="0.78"/><circle cx="806.7" cy="591.1" r="1.4" fill="#44f044" opacity="0.75"/><circle cx="807.5" cy="594.1" r="0.9" fill="#44f044" opacity="0.73"/><circle cx="807.4" cy="598.1" r="1.2" fill="#44f044" opacity="0.70"/><circle cx="808.1" cy="602.0" r="1.0" fill="#44f044" opacity="0.67"/><circle cx="809.7" cy="606.8" r="1.2" fill="#44f044" opacity="0.64"/><circle cx="809.2" cy="610.0" r="1.2" fill="#44f044" opacity="0.62"/><circle cx="811.8" cy="624.4" r="1.0" fill="#44f044" opacity="0.51"/><circle cx="812.9" cy="632.3" r="1.2" fill="#44f044" opacity="0.44"/><circle cx="814.7" cy="635.4" r="1.0" fill="#44f044" opacity="0.42"/><circle cx="787.7" cy="566.5" r="1.2" fill="#44f044" opacity="0.43"/><circle cx="773.7" cy="565.3" r="1.0" fill="#44f044" opacity="0.34"/><circle cx="768.8" cy="565.5" r="1.2" fill="#44f044" opacity="0.32"/><circle cx="758.1" cy="565.2" r="1.4" fill="#44f044" opacity="0.25"/><circle cx="753.4" cy="564.8" r="1.4" fill="#44f044" opacity="0.22"/><circle cx="749.3" cy="564.0" r="1.3" fill="#44f044" opacity="0.19"/><circle cx="742.7" cy="563.3" r="1.4" fill="#44f044" opacity="0.16"/><circle cx="809.0" cy="565.5" r="1.2" fill="#44f044" opacity="0.52"/><circle cx="823.6" cy="559.1" r="1.3" fill="#44f044" opacity="0.46"/><circle cx="829.6" cy="557.7" r="1.1" fill="#44f044" opacity="0.44"/><circle cx="838.2" cy="553.8" r="1.2" fill="#44f044" opacity="0.41"/><circle cx="842.5" cy="552.5" r="1.0" fill="#44f044" opacity="0.39"/><circle cx="850.4" cy="548.9" r="1.5" fill="#44f044" opacity="0.36"/><circle cx="856.4" cy="546.3" r="1.3" fill="#44f044" opacity="0.34"/><circle cx="860.0" cy="545.5" r="1.5" fill="#44f044" opacity="0.33"/><circle cx="866.7" cy="542.3" r="1.5" fill="#44f044" opacity="0.31"/><circle cx="869.5" cy="541.1" r="0.9" fill="#44f044" opacity="0.30"/><circle cx="871.5" cy="540.2" r="1.0" fill="#44f044" opacity="0.29"/><circle cx="875.5" cy="539.0" r="1.0" fill="#44f044" opacity="0.27"/><circle cx="877.4" cy="538.5" r="0.9" fill="#44f044" opacity="0.27"/><circle cx="881.4" cy="536.1" r="1.1" fill="#44f044" opacity="0.25"/><circle cx="884.5" cy="535.0" r="1.2" fill="#44f044" opacity="0.24"/><circle cx="887.7" cy="534.2" r="1.3" fill="#44f044" opacity="0.23"/><circle cx="896.2" cy="529.7" r="1.2" fill="#44f044" opacity="0.20"/><circle cx="904.6" cy="526.9" r="1.0" fill="#44f044" opacity="0.16"/><circle cx="803.2" cy="579.0" r="1.0" fill="#44f044" opacity="0.57"/><circle cx="802.3" cy="586.8" r="1.1" fill="#44f044" opacity="0.51"/><circle cx="802.2" cy="597.8" r="1.1" fill="#44f044" opacity="0.43"/><circle cx="802.8" cy="601.1" r="1.0" fill="#44f044" opacity="0.41"/><circle cx="802.8" cy="609.1" r="1.2" fill="#44f044" opacity="0.35"/><circle cx="802.8" cy="616.5" r="0.9" fill="#44f044" opacity="0.30"/><circle cx="803.3" cy="620.2" r="1.4" fill="#44f044" opacity="0.27"/><circle cx="802.0" cy="625.5" r="1.4" fill="#44f044" opacity="0.24"/><circle cx="803.2" cy="627.6" r="1.3" fill="#44f044" opacity="0.22"/><circle cx="803.2" cy="631.0" r="1.3" fill="#44f044" opacity="0.20"/><circle cx="799.5" cy="561.7" r="1.2" fill="#44f044" opacity="0.76"/><circle cx="796.9" cy="555.4" r="1.4" fill="#44f044" opacity="0.70"/><circle cx="792.4" cy="549.2" r="1.1" fill="#44f044" opacity="0.64"/><circle cx="790.5" cy="546.2" r="1.5" fill="#44f044" opacity="0.61"/><circle cx="788.3" cy="541.9" r="1.3" fill="#44f044" opacity="0.57"/><circle cx="787.0" cy="538.5" r="1.1" fill="#44f044" opacity="0.54"/><circle cx="785.7" cy="535.8" r="1.1" fill="#44f044" opacity="0.51"/><circle cx="784.4" cy="533.7" r="1.1" fill="#44f044" opacity="0.48"/><circle cx="782.0" cy="528.5" r="1.2" fill="#44f044" opacity="0.44"/><circle cx="780.8" cy="525.5" r="1.1" fill="#44f044" opacity="0.40"/><circle cx="774.9" cy="516.4" r="1.2" fill="#44f044" opacity="0.32"/><circle cx="773.9" cy="513.6" r="1.4" fill="#44f044" opacity="0.28"/><circle cx="807.0" cy="574.0" r="1.1" fill="#44f044" opacity="0.77"/><circle cx="808.6" cy="577.4" r="1.3" fill="#44f044" opacity="0.75"/><circle cx="813.1" cy="585.7" r="1.2" fill="#44f044" opacity="0.68"/><circle cx="817.6" cy="592.8" r="0.9" fill="#44f044" opacity="0.62"/><circle cx="821.2" cy="601.7" r="1.2" fill="#44f044" opacity="0.56"/><circle cx="825.9" cy="609.6" r="1.0" fill="#44f044" opacity="0.50"/><circle cx="828.3" cy="611.7" r="1.4" fill="#44f044" opacity="0.47"/><circle cx="828.9" cy="614.9" r="1.4" fill="#44f044" opacity="0.45"/><circle cx="832.2" cy="620.3" r="1.1" fill="#44f044" opacity="0.41"/><circle cx="835.2" cy="624.3" r="1.4" fill="#44f044" opacity="0.38"/><circle cx="838.0" cy="629.3" r="1.3" fill="#44f044" opacity="0.34"/><circle cx="842.8" cy="636.9" r="1.1" fill="#44f044" opacity="0.28"/><circle cx="808.8" cy="585.8" r="0.9" fill="#44f044" opacity="0.48"/><circle cx="810.4" cy="588.0" r="1.1" fill="#44f044" opacity="0.45"/><circle cx="811.4" cy="593.5" r="1.2" fill="#44f044" opacity="0.36"/><circle cx="812.2" cy="597.2" r="1.1" fill="#44f044" opacity="0.32"/><circle cx="807.2" cy="573.1" r="1.2" fill="#44f044" opacity="0.87"/><circle cx="813.8" cy="581.7" r="1.3" fill="#44f044" opacity="0.79"/><circle cx="816.5" cy="583.8" r="1.3" fill="#44f044" opacity="0.76"/><circle cx="819.1" cy="586.7" r="1.3" fill="#44f044" opacity="0.73"/><circle cx="820.0" cy="588.6" r="1.1" fill="#44f044" opacity="0.70"/><circle cx="824.7" cy="594.8" r="1.4" fill="#44f044" opacity="0.64"/><circle cx="827.3" cy="597.6" r="1.3" fill="#44f044" opacity="0.61"/><circle cx="830.0" cy="600.5" r="1.4" fill="#44f044" opacity="0.58"/><circle cx="842.4" cy="617.7" r="1.4" fill="#44f044" opacity="0.41"/><circle cx="845.2" cy="619.2" r="1.1" fill="#44f044" opacity="0.38"/><circle cx="847.1" cy="622.5" r="1.3" fill="#44f044" opacity="0.35"/><circle cx="851.1" cy="626.1" r="1.0" fill="#44f044" opacity="0.31"/><circle cx="813.4" cy="571.8" r="1.4" fill="#44f044" opacity="0.71"/><circle cx="816.3" cy="573.4" r="1.1" fill="#44f044" opacity="0.68"/><circle cx="823.9" cy="574.9" r="1.3" fill="#44f044" opacity="0.64"/><circle cx="826.3" cy="575.7" r="0.9" fill="#44f044" opacity="0.62"/><circle cx="834.5" cy="578.8" r="1.0" fill="#44f044" opacity="0.57"/><circle cx="838.0" cy="580.1" r="1.5" fill="#44f044" opacity="0.55"/><circle cx="844.1" cy="581.7" r="1.2" fill="#44f044" opacity="0.51"/><circle cx="847.4" cy="582.7" r="1.3" fill="#44f044" opacity="0.49"/><circle cx="854.5" cy="585.9" r="1.2" fill="#44f044" opacity="0.44"/><circle cx="858.4" cy="585.8" r="1.2" fill="#44f044" opacity="0.42"/><circle cx="860.0" cy="586.9" r="1.2" fill="#44f044" opacity="0.40"/><circle cx="866.2" cy="590.3" r="1.2" fill="#44f044" opacity="0.36"/><circle cx="871.8" cy="590.7" r="1.4" fill="#44f044" opacity="0.33"/><circle cx="876.4" cy="593.1" r="1.1" fill="#44f044" opacity="0.29"/><circle cx="810.0" cy="569.7" r="1.1" fill="#44f044" opacity="0.86"/><circle cx="813.2" cy="569.5" r="1.4" fill="#44f044" opacity="0.83"/><circle cx="817.8" cy="569.8" r="1.1" fill="#44f044" opacity="0.80"/><circle cx="829.6" cy="571.8" r="1.2" fill="#44f044" opacity="0.70"/><circle cx="832.4" cy="572.8" r="1.5" fill="#44f044" opacity="0.68"/><circle cx="836.4" cy="572.9" r="1.3" fill="#44f044" opacity="0.65"/><circle cx="838.7" cy="573.4" r="1.3" fill="#44f044" opacity="0.62"/><circle cx="843.9" cy="573.7" r="1.3" fill="#44f044" opacity="0.58"/><circle cx="848.1" cy="575.8" r="1.5" fill="#44f044" opacity="0.54"/><circle cx="852.1" cy="576.1" r="1.4" fill="#44f044" opacity="0.50"/><circle cx="857.0" cy="577.0" r="1.1" fill="#44f044" opacity="0.47"/><circle cx="859.3" cy="577.4" r="1.0" fill="#44f044" opacity="0.45"/><circle cx="862.8" cy="577.3" r="1.4" fill="#44f044" opacity="0.41"/><circle cx="869.2" cy="578.7" r="1.1" fill="#44f044" opacity="0.37"/><circle cx="873.3" cy="578.8" r="1.3" fill="#44f044" opacity="0.34"/><circle cx="875.1" cy="579.1" r="1.2" fill="#44f044" opacity="0.31"/><circle cx="795.6" cy="585.0" r="1.1" fill="#44f044" opacity="0.59"/><circle cx="793.4" cy="587.2" r="1.4" fill="#44f044" opacity="0.57"/><circle cx="787.8" cy="601.2" r="1.2" fill="#44f044" opacity="0.42"/><circle cx="785.2" cy="604.1" r="1.0" fill="#44f044" opacity="0.39"/><circle cx="784.3" cy="608.5" r="1.2" fill="#44f044" opacity="0.35"/><circle cx="780.9" cy="614.6" r="1.0" fill="#44f044" opacity="0.28"/><circle cx="797.3" cy="572.1" r="1.2" fill="#44f044" opacity="0.90"/><circle cx="792.2" cy="577.5" r="1.4" fill="#44f044" opacity="0.87"/><circle cx="789.1" cy="580.6" r="1.0" fill="#44f044" opacity="0.84"/><circle cx="787.0" cy="582.5" r="0.9" fill="#44f044" opacity="0.82"/><circle cx="777.3" cy="591.2" r="1.0" fill="#44f044" opacity="0.76"/><circle cx="772.4" cy="596.2" r="1.5" fill="#44f044" opacity="0.72"/><circle cx="764.1" cy="603.2" r="1.1" fill="#44f044" opacity="0.67"/><circle cx="755.5" cy="612.1" r="1.0" fill="#44f044" opacity="0.61"/><circle cx="752.5" cy="613.7" r="1.4" fill="#44f044" opacity="0.59"/><circle cx="749.7" cy="617.8" r="1.2" fill="#44f044" opacity="0.56"/><circle cx="743.8" cy="622.7" r="1.0" fill="#44f044" opacity="0.53"/><circle cx="733.4" cy="631.7" r="1.5" fill="#44f044" opacity="0.46"/><circle cx="731.0" cy="634.9" r="1.1" fill="#44f044" opacity="0.44"/><circle cx="723.6" cy="641.1" r="1.0" fill="#44f044" opacity="0.39"/><circle cx="719.5" cy="646.2" r="1.1" fill="#44f044" opacity="0.35"/><circle cx="716.5" cy="648.0" r="1.2" fill="#44f044" opacity="0.33"/><circle cx="712.1" cy="651.6" r="1.5" fill="#44f044" opacity="0.31"/><circle cx="708.0" cy="655.5" r="1.4" fill="#44f044" opacity="0.28"/><circle cx="796.5" cy="568.2" r="1.0" fill="#44f044" opacity="0.82"/><circle cx="788.5" cy="568.2" r="1.1" fill="#44f044" opacity="0.75"/><circle cx="785.4" cy="569.0" r="1.1" fill="#44f044" opacity="0.70"/><circle cx="781.6" cy="569.5" r="1.5" fill="#44f044" opacity="0.67"/><circle cx="778.9" cy="569.5" r="1.1" fill="#44f044" opacity="0.64"/><circle cx="773.3" cy="568.4" r="1.0" fill="#44f044" opacity="0.59"/><circle cx="764.7" cy="569.5" r="0.9" fill="#44f044" opacity="0.48"/><circle cx="758.4" cy="570.4" r="1.2" fill="#44f044" opacity="0.41"/><circle cx="755.5" cy="569.7" r="1.0" fill="#44f044" opacity="0.38"/><circle cx="751.0" cy="570.7" r="1.3" fill="#44f044" opacity="0.34"/><circle cx="747.8" cy="570.0" r="1.1" fill="#44f044" opacity="0.29"/><circle cx="801.1" cy="558.8" r="1.4" fill="#44f044" opacity="0.66"/><circle cx="800.9" cy="555.5" r="1.4" fill="#44f044" opacity="0.64"/><circle cx="798.6" cy="545.7" r="1.4" fill="#44f044" opacity="0.56"/><circle cx="797.2" cy="537.5" r="1.5" fill="#44f044" opacity="0.51"/><circle cx="795.9" cy="534.2" r="1.5" fill="#44f044" opacity="0.47"/><circle cx="794.2" cy="530.0" r="1.2" fill="#44f044" opacity="0.44"/><circle cx="793.0" cy="522.8" r="1.3" fill="#44f044" opacity="0.39"/><circle cx="792.0" cy="519.8" r="1.1" fill="#44f044" opacity="0.37"/><circle cx="791.3" cy="518.4" r="1.2" fill="#44f044" opacity="0.35"/><circle cx="791.8" cy="514.0" r="0.9" fill="#44f044" opacity="0.32"/><circle cx="802.4" cy="557.4" r="1.1" fill="#44f044" opacity="0.69"/><circle cx="799.7" cy="541.0" r="0.9" fill="#44f044" opacity="0.56"/><circle cx="799.0" cy="529.9" r="1.2" fill="#44f044" opacity="0.49"/><circle cx="797.5" cy="510.1" r="1.1" fill="#44f044" opacity="0.34"/><circle cx="796.7" cy="504.2" r="1.0" fill="#44f044" opacity="0.30"/><circle cx="795.5" cy="500.7" r="1.3" fill="#44f044" opacity="0.27"/><circle cx="794.7" cy="498.0" r="1.3" fill="#44f044" opacity="0.25"/><circle cx="801.1" cy="573.8" r="1.1" fill="#44f044" opacity="0.48"/><circle cx="798.7" cy="578.7" r="1.0" fill="#44f044" opacity="0.42"/><circle cx="794.6" cy="589.2" r="1.5" fill="#44f044" opacity="0.26"/><circle cx="791.9" cy="594.8" r="1.4" fill="#44f044" opacity="0.19"/><circle cx="795.8" cy="566.2" r="1.2" fill="#44f044" opacity="0.77"/><circle cx="792.1" cy="564.1" r="1.1" fill="#44f044" opacity="0.74"/><circle cx="788.6" cy="561.8" r="0.9" fill="#44f044" opacity="0.70"/><circle cx="786.0" cy="561.8" r="1.0" fill="#44f044" opacity="0.68"/><circle cx="776.5" cy="557.2" r="0.9" fill="#44f044" opacity="0.61"/><circle cx="769.5" cy="554.9" r="1.4" fill="#44f044" opacity="0.54"/><circle cx="761.8" cy="551.9" r="0.9" fill="#44f044" opacity="0.48"/><circle cx="757.1" cy="549.5" r="1.1" fill="#44f044" opacity="0.44"/><circle cx="753.0" cy="547.8" r="1.5" fill="#44f044" opacity="0.41"/><circle cx="749.5" cy="546.5" r="1.0" fill="#44f044" opacity="0.38"/><circle cx="745.4" cy="544.6" r="1.4" fill="#44f044" opacity="0.35"/><circle cx="735.7" cy="541.3" r="1.3" fill="#44f044" opacity="0.27"/><circle cx="816.4" cy="565.2" r="1.4" fill="#44f044" opacity="0.53"/><circle cx="819.3" cy="566.1" r="1.1" fill="#44f044" opacity="0.51"/><circle cx="826.9" cy="563.5" r="1.2" fill="#44f044" opacity="0.48"/><circle cx="836.5" cy="562.0" r="0.9" fill="#44f044" opacity="0.43"/><circle cx="856.5" cy="560.3" r="1.3" fill="#44f044" opacity="0.32"/><circle cx="864.9" cy="558.5" r="1.0" fill="#44f044" opacity="0.27"/><circle cx="868.8" cy="557.1" r="1.4" fill="#44f044" opacity="0.25"/><circle cx="872.4" cy="556.9" r="1.0" fill="#44f044" opacity="0.23"/><circle cx="876.7" cy="555.9" r="1.4" fill="#44f044" opacity="0.21"/><circle cx="879.9" cy="555.4" r="1.1" fill="#44f044" opacity="0.20"/><circle cx="805.8" cy="576.3" r="1.3" fill="#44f044" opacity="0.67"/><circle cx="808.0" cy="581.4" r="1.3" fill="#44f044" opacity="0.62"/><circle cx="809.6" cy="585.1" r="1.2" fill="#44f044" opacity="0.58"/><circle cx="811.9" cy="596.2" r="1.2" fill="#44f044" opacity="0.45"/><circle cx="813.1" cy="599.5" r="1.4" fill="#44f044" opacity="0.42"/><circle cx="816.4" cy="606.2" r="1.1" fill="#44f044" opacity="0.34"/><circle cx="810.3" cy="576.9" r="1.1" fill="#44f044" opacity="0.77"/><circle cx="813.1" cy="581.0" r="1.3" fill="#44f044" opacity="0.70"/><circle cx="815.5" cy="585.2" r="1.2" fill="#44f044" opacity="0.63"/><circle cx="818.1" cy="589.0" r="1.0" fill="#44f044" opacity="0.57"/><circle cx="820.1" cy="591.1" r="0.9" fill="#44f044" opacity="0.52"/><circle cx="820.7" cy="593.6" r="1.3" fill="#44f044" opacity="0.48"/><circle cx="823.7" cy="597.3" r="1.0" fill="#44f044" opacity="0.42"/><circle cx="825.7" cy="599.0" r="1.2" fill="#44f044" opacity="0.38"/><circle cx="806.7" cy="574.4" r="1.2" fill="#44f044" opacity="0.79"/><circle cx="809.7" cy="580.7" r="1.4" fill="#44f044" opacity="0.75"/><circle cx="815.6" cy="592.4" r="1.0" fill="#44f044" opacity="0.67"/><circle cx="822.7" cy="603.8" r="1.4" fill="#44f044" opacity="0.59"/><circle cx="827.0" cy="613.2" r="1.1" fill="#44f044" opacity="0.53"/><circle cx="827.8" cy="616.5" r="0.9" fill="#44f044" opacity="0.51"/><circle cx="834.3" cy="628.6" r="1.3" fill="#44f044" opacity="0.43"/><circle cx="838.2" cy="635.3" r="1.3" fill="#44f044" opacity="0.39"/><circle cx="840.5" cy="639.7" r="1.4" fill="#44f044" opacity="0.36"/><circle cx="843.1" cy="642.2" r="1.2" fill="#44f044" opacity="0.34"/><circle cx="845.3" cy="646.2" r="1.5" fill="#44f044" opacity="0.31"/><circle cx="848.4" cy="654.7" r="1.0" fill="#44f044" opacity="0.25"/><circle cx="809.3" cy="577.6" r="1.0" fill="#44f044" opacity="0.55"/><circle cx="812.8" cy="579.9" r="0.9" fill="#44f044" opacity="0.51"/><circle cx="815.4" cy="583.6" r="1.3" fill="#44f044" opacity="0.48"/><circle cx="816.8" cy="585.5" r="1.2" fill="#44f044" opacity="0.46"/><circle cx="818.4" cy="589.4" r="1.1" fill="#44f044" opacity="0.43"/><circle cx="821.7" cy="592.7" r="1.1" fill="#44f044" opacity="0.39"/><circle cx="828.1" cy="601.6" r="1.1" fill="#44f044" opacity="0.31"/><circle cx="831.3" cy="604.9" r="1.2" fill="#44f044" opacity="0.28"/><circle cx="834.2" cy="609.2" r="1.3" fill="#44f044" opacity="0.24"/><circle cx="809.7" cy="570.1" r="1.0" fill="#44f044" opacity="0.61"/><circle cx="818.0" cy="572.1" r="1.3" fill="#44f044" opacity="0.57"/><circle cx="825.8" cy="574.9" r="1.5" fill="#44f044" opacity="0.52"/><circle cx="830.6" cy="576.5" r="1.1" fill="#44f044" opacity="0.50"/><circle cx="846.5" cy="580.7" r="1.4" fill="#44f044" opacity="0.42"/><circle cx="856.3" cy="582.9" r="1.0" fill="#44f044" opacity="0.37"/><circle cx="860.3" cy="584.6" r="1.3" fill="#44f044" opacity="0.34"/><circle cx="866.6" cy="586.6" r="1.1" fill="#44f044" opacity="0.32"/><circle cx="869.8" cy="588.2" r="1.0" fill="#44f044" opacity="0.29"/><circle cx="873.4" cy="588.1" r="1.2" fill="#44f044" opacity="0.28"/><circle cx="889.7" cy="593.0" r="1.3" fill="#44f044" opacity="0.20"/><circle cx="783.9" cy="571.0" r="1.1" fill="#44f044" opacity="0.62"/><circle cx="766.7" cy="572.6" r="1.2" fill="#44f044" opacity="0.49"/><circle cx="764.9" cy="572.2" r="0.9" fill="#44f044" opacity="0.47"/><circle cx="751.0" cy="575.0" r="1.3" fill="#44f044" opacity="0.36"/><circle cx="743.8" cy="575.1" r="1.1" fill="#44f044" opacity="0.31"/><circle cx="740.1" cy="575.4" r="1.4" fill="#44f044" opacity="0.29"/><circle cx="808.4" cy="563.0" r="1.2" fill="#44f044" opacity="0.51"/><circle cx="814.6" cy="559.4" r="1.0" fill="#44f044" opacity="0.49"/><circle cx="820.6" cy="552.4" r="1.4" fill="#44f044" opacity="0.46"/><circle cx="824.9" cy="550.0" r="0.9" fill="#44f044" opacity="0.45"/><circle cx="829.7" cy="546.4" r="1.1" fill="#44f044" opacity="0.43"/><circle cx="832.3" cy="543.6" r="1.4" fill="#44f044" opacity="0.42"/><circle cx="837.2" cy="540.1" r="1.5" fill="#44f044" opacity="0.40"/><circle cx="840.8" cy="537.4" r="1.5" fill="#44f044" opacity="0.39"/><circle cx="843.1" cy="535.1" r="0.9" fill="#44f044" opacity="0.38"/><circle cx="845.2" cy="532.8" r="1.1" fill="#44f044" opacity="0.37"/><circle cx="849.6" cy="529.9" r="1.3" fill="#44f044" opacity="0.35"/><circle cx="858.1" cy="523.1" r="1.5" fill="#44f044" opacity="0.32"/><circle cx="863.9" cy="519.6" r="1.2" fill="#44f044" opacity="0.30"/><circle cx="866.0" cy="518.1" r="1.3" fill="#44f044" opacity="0.29"/><circle cx="867.9" cy="515.3" r="1.4" fill="#44f044" opacity="0.28"/><circle cx="871.6" cy="512.5" r="1.4" fill="#44f044" opacity="0.27"/><circle cx="873.2" cy="511.1" r="0.9" fill="#44f044" opacity="0.26"/><circle cx="886.8" cy="500.4" r="1.4" fill="#44f044" opacity="0.21"/><circle cx="889.8" cy="498.4" r="1.2" fill="#44f044" opacity="0.20"/><circle cx="891.7" cy="496.6" r="1.0" fill="#44f044" opacity="0.19"/><circle cx="897.6" cy="492.6" r="0.9" fill="#44f044" opacity="0.17"/><circle cx="803.6" cy="574.6" r="1.4" fill="#44f044" opacity="0.61"/><circle cx="803.8" cy="577.7" r="1.3" fill="#44f044" opacity="0.56"/><circle cx="804.6" cy="582.0" r="1.1" fill="#44f044" opacity="0.51"/><circle cx="805.8" cy="587.4" r="1.3" fill="#44f044" opacity="0.44"/><circle cx="808.0" cy="595.6" r="1.0" fill="#44f044" opacity="0.30"/><circle cx="802.0" cy="561.1" r="1.0" fill="#44f044" opacity="0.72"/><circle cx="801.4" cy="555.8" r="1.0" fill="#44f044" opacity="0.69"/><circle cx="800.6" cy="553.5" r="1.0" fill="#44f044" opacity="0.68"/><circle cx="798.0" cy="533.8" r="1.3" fill="#44f044" opacity="0.57"/><circle cx="797.3" cy="526.1" r="1.0" fill="#44f044" opacity="0.54"/><circle cx="796.9" cy="522.7" r="1.1" fill="#44f044" opacity="0.52"/><circle cx="796.4" cy="519.5" r="1.3" fill="#44f044" opacity="0.50"/><circle cx="796.6" cy="515.7" r="1.2" fill="#44f044" opacity="0.48"/><circle cx="795.6" cy="506.7" r="1.1" fill="#44f044" opacity="0.44"/><circle cx="794.1" cy="503.8" r="0.9" fill="#44f044" opacity="0.42"/><circle cx="794.3" cy="496.6" r="1.4" fill="#44f044" opacity="0.38"/><circle cx="792.8" cy="490.7" r="1.5" fill="#44f044" opacity="0.35"/><circle cx="792.6" cy="487.2" r="1.4" fill="#44f044" opacity="0.33"/><circle cx="792.8" cy="483.7" r="1.3" fill="#44f044" opacity="0.32"/><circle cx="790.8" cy="466.7" r="1.4" fill="#44f044" opacity="0.23"/><circle cx="795.2" cy="583.3" r="0.9" fill="#44f044" opacity="0.67"/><circle cx="794.0" cy="587.1" r="1.3" fill="#44f044" opacity="0.64"/><circle cx="791.2" cy="594.3" r="1.3" fill="#44f044" opacity="0.60"/><circle cx="786.8" cy="602.4" r="1.3" fill="#44f044" opacity="0.55"/><circle cx="785.5" cy="604.4" r="1.0" fill="#44f044" opacity="0.53"/><circle cx="784.0" cy="608.0" r="1.2" fill="#44f044" opacity="0.51"/><circle cx="782.2" cy="611.0" r="1.2" fill="#44f044" opacity="0.49"/><circle cx="779.8" cy="619.8" r="1.0" fill="#44f044" opacity="0.44"/><circle cx="775.1" cy="629.4" r="1.5" fill="#44f044" opacity="0.38"/><circle cx="770.9" cy="638.3" r="1.0" fill="#44f044" opacity="0.32"/><circle cx="769.2" cy="642.4" r="0.9" fill="#44f044" opacity="0.30"/><circle cx="767.1" cy="645.1" r="1.0" fill="#44f044" opacity="0.28"/><circle cx="766.2" cy="646.9" r="1.1" fill="#44f044" opacity="0.27"/><circle cx="765.1" cy="650.0" r="1.3" fill="#44f044" opacity="0.24"/><circle cx="814.7" cy="559.5" r="1.4" fill="#44f044" opacity="0.48"/><circle cx="818.5" cy="557.7" r="1.1" fill="#44f044" opacity="0.45"/><circle cx="822.1" cy="554.6" r="1.4" fill="#44f044" opacity="0.43"/><circle cx="825.6" cy="553.8" r="1.2" fill="#44f044" opacity="0.41"/><circle cx="828.5" cy="551.1" r="1.1" fill="#44f044" opacity="0.39"/><circle cx="834.5" cy="546.5" r="1.4" fill="#44f044" opacity="0.36"/><circle cx="837.7" cy="544.0" r="1.2" fill="#44f044" opacity="0.34"/><circle cx="848.6" cy="537.3" r="1.0" fill="#44f044" opacity="0.28"/><circle cx="852.1" cy="534.7" r="1.0" fill="#44f044" opacity="0.25"/><circle cx="855.6" cy="532.2" r="1.2" fill="#44f044" opacity="0.23"/><circle cx="859.7" cy="529.3" r="1.2" fill="#44f044" opacity="0.21"/><circle cx="865.0" cy="525.3" r="0.9" fill="#44f044" opacity="0.17"/><circle cx="793.7" cy="577.6" r="1.5" fill="#44f044" opacity="0.38"/><circle cx="789.3" cy="581.8" r="1.3" fill="#44f044" opacity="0.32"/><circle cx="785.2" cy="586.9" r="1.2" fill="#44f044" opacity="0.24"/><circle cx="810.2" cy="569.1" r="1.5" fill="#44f044" opacity="0.74"/><circle cx="817.5" cy="569.1" r="1.0" fill="#44f044" opacity="0.53"/><circle cx="821.1" cy="569.6" r="1.2" fill="#44f044" opacity="0.39"/><circle cx="806.4" cy="562.3" r="1.0" fill="#44f044" opacity="0.60"/><circle cx="811.5" cy="555.6" r="1.2" fill="#44f044" opacity="0.53"/><circle cx="812.8" cy="551.9" r="1.4" fill="#44f044" opacity="0.50"/><circle cx="819.5" cy="543.5" r="1.0" fill="#44f044" opacity="0.41"/><circle cx="821.2" cy="539.6" r="1.1" fill="#44f044" opacity="0.38"/><circle cx="825.5" cy="532.5" r="1.4" fill="#44f044" opacity="0.31"/><circle cx="827.8" cy="530.2" r="1.4" fill="#44f044" opacity="0.28"/><circle cx="829.7" cy="527.5" r="1.0" fill="#44f044" opacity="0.26"/><circle cx="802.2" cy="578.3" r="1.1" fill="#44f044" opacity="0.49"/><circle cx="803.3" cy="581.6" r="1.4" fill="#44f044" opacity="0.46"/><circle cx="803.3" cy="585.9" r="1.4" fill="#44f044" opacity="0.43"/><circle cx="801.8" cy="593.5" r="1.5" fill="#44f044" opacity="0.34"/><circle cx="802.4" cy="600.5" r="1.3" fill="#44f044" opacity="0.27"/><circle cx="802.5" cy="607.5" r="1.0" fill="#44f044" opacity="0.20"/><circle cx="804.9" cy="562.1" r="1.4" fill="#44f044" opacity="0.58"/><circle cx="806.0" cy="558.1" r="1.3" fill="#44f044" opacity="0.57"/><circle cx="807.0" cy="555.5" r="1.2" fill="#44f044" opacity="0.55"/><circle cx="808.9" cy="545.9" r="1.4" fill="#44f044" opacity="0.51"/><circle cx="811.9" cy="536.8" r="1.3" fill="#44f044" opacity="0.47"/><circle cx="812.0" cy="534.3" r="1.3" fill="#44f044" opacity="0.46"/><circle cx="813.7" cy="530.2" r="1.0" fill="#44f044" opacity="0.45"/><circle cx="814.4" cy="527.5" r="1.2" fill="#44f044" opacity="0.43"/><circle cx="814.9" cy="523.8" r="1.4" fill="#44f044" opacity="0.41"/><circle cx="816.6" cy="519.1" r="1.4" fill="#44f044" opacity="0.40"/><circle cx="817.1" cy="516.6" r="1.5" fill="#44f044" opacity="0.38"/><circle cx="818.5" cy="510.6" r="1.4" fill="#44f044" opacity="0.36"/><circle cx="819.7" cy="506.2" r="1.2" fill="#44f044" opacity="0.34"/><circle cx="821.2" cy="502.1" r="1.0" fill="#44f044" opacity="0.32"/><circle cx="822.1" cy="497.6" r="1.4" fill="#44f044" opacity="0.30"/><circle cx="823.3" cy="492.5" r="1.0" fill="#44f044" opacity="0.28"/><circle cx="825.9" cy="487.8" r="1.4" fill="#44f044" opacity="0.26"/><circle cx="825.9" cy="482.8" r="1.2" fill="#44f044" opacity="0.24"/><circle cx="828.6" cy="479.0" r="1.2" fill="#44f044" opacity="0.22"/><circle cx="830.0" cy="474.6" r="1.5" fill="#44f044" opacity="0.20"/><circle cx="805.9" cy="561.4" r="1.2" fill="#44f044" opacity="0.64"/><circle cx="811.3" cy="551.6" r="1.0" fill="#44f044" opacity="0.50"/><circle cx="814.2" cy="547.6" r="1.0" fill="#44f044" opacity="0.45"/><circle cx="816.0" cy="543.7" r="1.0" fill="#44f044" opacity="0.41"/><circle cx="817.6" cy="541.4" r="1.1" fill="#44f044" opacity="0.37"/><circle cx="818.9" cy="537.6" r="1.2" fill="#44f044" opacity="0.33"/><circle cx="796.5" cy="570.3" r="1.1" fill="#44f044" opacity="0.74"/><circle cx="791.6" cy="573.8" r="1.2" fill="#44f044" opacity="0.67"/><circle cx="772.1" cy="582.7" r="1.1" fill="#44f044" opacity="0.37"/><circle cx="769.5" cy="584.0" r="1.4" fill="#44f044" opacity="0.32"/><circle cx="765.2" cy="587.1" r="1.1" fill="#44f044" opacity="0.27"/><circle cx="802.6" cy="561.8" r="1.2" fill="#44f044" opacity="0.66"/><circle cx="802.6" cy="552.9" r="1.4" fill="#44f044" opacity="0.60"/><circle cx="801.9" cy="548.7" r="1.0" fill="#44f044" opacity="0.57"/><circle cx="802.2" cy="539.5" r="1.3" fill="#44f044" opacity="0.51"/><circle cx="801.1" cy="536.8" r="1.3" fill="#44f044" opacity="0.49"/><circle cx="800.7" cy="531.6" r="1.3" fill="#44f044" opacity="0.46"/><circle cx="800.7" cy="527.0" r="1.1" fill="#44f044" opacity="0.43"/><circle cx="800.5" cy="523.8" r="1.1" fill="#44f044" opacity="0.41"/><circle cx="800.3" cy="520.5" r="1.4" fill="#44f044" opacity="0.38"/><circle cx="799.8" cy="513.3" r="1.3" fill="#44f044" opacity="0.33"/><circle cx="800.2" cy="507.4" r="1.3" fill="#44f044" opacity="0.29"/><circle cx="807.7" cy="573.6" r="1.2" fill="#44f044" opacity="0.44"/><circle cx="809.0" cy="575.4" r="1.3" fill="#44f044" opacity="0.40"/><circle cx="819.3" cy="586.8" r="1.1" fill="#44f044" opacity="0.25"/><circle cx="802.5" cy="575.6" r="1.2" fill="#44f044" opacity="0.62"/><circle cx="802.4" cy="577.3" r="1.3" fill="#44f044" opacity="0.58"/><circle cx="802.7" cy="584.9" r="1.4" fill="#44f044" opacity="0.49"/><circle cx="803.0" cy="588.4" r="1.4" fill="#44f044" opacity="0.45"/><circle cx="802.5" cy="597.1" r="1.4" fill="#44f044" opacity="0.33"/><circle cx="802.4" cy="605.7" r="1.1" fill="#44f044" opacity="0.22"/><circle cx="803.4" cy="560.9" r="1.3" fill="#44f044" opacity="0.56"/><circle cx="802.7" cy="556.5" r="1.1" fill="#44f044" opacity="0.52"/><circle cx="802.5" cy="553.2" r="1.5" fill="#44f044" opacity="0.48"/><circle cx="802.6" cy="548.0" r="1.1" fill="#44f044" opacity="0.44"/><circle cx="801.7" cy="545.5" r="1.1" fill="#44f044" opacity="0.42"/><circle cx="802.4" cy="540.7" r="1.4" fill="#44f044" opacity="0.38"/><circle cx="801.8" cy="534.0" r="1.0" fill="#44f044" opacity="0.31"/><circle cx="802.2" cy="530.2" r="1.3" fill="#44f044" opacity="0.28"/><circle cx="797.3" cy="573.5" r="1.3" fill="#44f044" opacity="0.61"/><circle cx="792.5" cy="577.8" r="1.2" fill="#44f044" opacity="0.53"/><circle cx="789.0" cy="580.3" r="1.4" fill="#44f044" opacity="0.50"/><circle cx="788.1" cy="581.8" r="1.0" fill="#44f044" opacity="0.47"/><circle cx="784.3" cy="585.1" r="1.3" fill="#44f044" opacity="0.44"/><circle cx="781.3" cy="588.2" r="1.1" fill="#44f044" opacity="0.39"/><circle cx="778.8" cy="590.5" r="1.1" fill="#44f044" opacity="0.35"/><circle cx="775.2" cy="593.4" r="1.3" fill="#44f044" opacity="0.31"/><circle cx="767.3" cy="600.6" r="1.3" fill="#44f044" opacity="0.22"/><circle cx="792.9" cy="575.7" r="1.5" fill="#44f044" opacity="0.63"/><circle cx="782.7" cy="582.9" r="0.9" fill="#44f044" opacity="0.44"/><circle cx="779.5" cy="585.1" r="1.4" fill="#44f044" opacity="0.38"/><circle cx="775.1" cy="590.3" r="1.3" fill="#44f044" opacity="0.29"/><circle cx="812.2" cy="574.4" r="0.9" fill="#44f044" opacity="0.71"/><circle cx="814.9" cy="577.0" r="1.1" fill="#44f044" opacity="0.67"/><circle cx="832.3" cy="590.4" r="1.3" fill="#44f044" opacity="0.49"/><circle cx="839.0" cy="597.6" r="1.4" fill="#44f044" opacity="0.41"/><circle cx="842.4" cy="600.3" r="1.2" fill="#44f044" opacity="0.37"/><circle cx="855.7" cy="610.2" r="1.3" fill="#44f044" opacity="0.24"/><circle cx="794.2" cy="573.5" r="1.0" fill="#44f044" opacity="0.75"/><circle cx="786.7" cy="578.7" r="1.5" fill="#44f044" opacity="0.70"/><circle cx="780.9" cy="582.0" r="1.3" fill="#44f044" opacity="0.66"/><circle cx="778.2" cy="583.6" r="1.1" fill="#44f044" opacity="0.63"/><circle cx="773.8" cy="587.5" r="1.1" fill="#44f044" opacity="0.60"/><circle cx="766.9" cy="591.5" r="1.0" fill="#44f044" opacity="0.55"/><circle cx="762.7" cy="593.1" r="1.4" fill="#44f044" opacity="0.52"/><circle cx="759.4" cy="595.7" r="1.0" fill="#44f044" opacity="0.50"/><circle cx="753.2" cy="600.4" r="1.0" fill="#44f044" opacity="0.44"/><circle cx="739.8" cy="610.2" r="1.5" fill="#44f044" opacity="0.34"/><circle cx="736.8" cy="611.3" r="1.2" fill="#44f044" opacity="0.32"/><circle cx="733.7" cy="612.4" r="1.1" fill="#44f044" opacity="0.30"/><circle cx="731.3" cy="614.3" r="1.4" fill="#44f044" opacity="0.28"/><circle cx="794.8" cy="559.8" r="1.2" fill="#44f044" opacity="0.67"/><circle cx="791.2" cy="556.2" r="1.5" fill="#44f044" opacity="0.57"/><circle cx="788.4" cy="553.5" r="1.0" fill="#44f044" opacity="0.47"/><circle cx="785.8" cy="549.5" r="1.4" fill="#44f044" opacity="0.38"/><circle cx="812.0" cy="561.6" r="1.4" fill="#44f044" opacity="0.68"/><circle cx="814.8" cy="560.2" r="1.0" fill="#44f044" opacity="0.66"/><circle cx="823.2" cy="556.6" r="1.1" fill="#44f044" opacity="0.62"/><circle cx="824.4" cy="555.0" r="1.1" fill="#44f044" opacity="0.60"/><circle cx="828.2" cy="552.6" r="1.4" fill="#44f044" opacity="0.59"/><circle cx="831.3" cy="550.4" r="1.3" fill="#44f044" opacity="0.57"/><circle cx="833.0" cy="550.1" r="1.1" fill="#44f044" opacity="0.56"/><circle cx="837.1" cy="547.7" r="1.2" fill="#44f044" opacity="0.54"/><circle cx="844.6" cy="543.5" r="1.3" fill="#44f044" opacity="0.50"/><circle cx="852.1" cy="538.5" r="1.1" fill="#44f044" opacity="0.46"/><circle cx="865.0" cy="530.3" r="1.2" fill="#44f044" opacity="0.38"/><circle cx="872.1" cy="526.5" r="1.2" fill="#44f044" opacity="0.34"/><circle cx="881.2" cy="521.0" r="1.5" fill="#44f044" opacity="0.29"/><circle cx="883.7" cy="518.5" r="1.5" fill="#44f044" opacity="0.27"/><circle cx="888.4" cy="516.5" r="1.1" fill="#44f044" opacity="0.25"/><circle cx="891.6" cy="514.7" r="1.5" fill="#44f044" opacity="0.23"/><circle cx="809.4" cy="583.7" r="1.3" fill="#44f044" opacity="0.64"/><circle cx="809.7" cy="586.8" r="1.5" fill="#44f044" opacity="0.62"/><circle cx="812.7" cy="593.6" r="1.4" fill="#44f044" opacity="0.56"/><circle cx="816.5" cy="600.0" r="1.2" fill="#44f044" opacity="0.51"/><circle cx="817.7" cy="604.5" r="1.3" fill="#44f044" opacity="0.48"/><circle cx="819.3" cy="608.1" r="1.0" fill="#44f044" opacity="0.45"/><circle cx="821.2" cy="611.7" r="1.4" fill="#44f044" opacity="0.43"/><circle cx="823.6" cy="618.6" r="1.4" fill="#44f044" opacity="0.37"/><circle cx="826.4" cy="625.6" r="1.2" fill="#44f044" opacity="0.32"/><circle cx="827.6" cy="627.3" r="1.1" fill="#44f044" opacity="0.30"/><circle cx="830.8" cy="636.4" r="1.0" fill="#44f044" opacity="0.23"/><circle cx="806.6" cy="573.0" r="1.1" fill="#44f044" opacity="0.86"/><circle cx="811.4" cy="579.4" r="1.1" fill="#44f044" opacity="0.80"/><circle cx="813.9" cy="582.8" r="1.4" fill="#44f044" opacity="0.77"/><circle cx="815.2" cy="585.0" r="1.4" fill="#44f044" opacity="0.75"/><circle cx="818.7" cy="588.0" r="1.4" fill="#44f044" opacity="0.71"/><circle cx="820.9" cy="591.6" r="1.0" fill="#44f044" opacity="0.69"/><circle cx="823.5" cy="593.5" r="1.0" fill="#44f044" opacity="0.66"/><circle cx="824.1" cy="597.8" r="1.5" fill="#44f044" opacity="0.63"/><circle cx="826.2" cy="599.5" r="1.5" fill="#44f044" opacity="0.61"/><circle cx="829.8" cy="603.0" r="1.3" fill="#44f044" opacity="0.58"/><circle cx="832.9" cy="607.8" r="1.3" fill="#44f044" opacity="0.54"/><circle cx="838.7" cy="614.4" r="1.1" fill="#44f044" opacity="0.47"/><circle cx="840.1" cy="618.1" r="1.5" fill="#44f044" opacity="0.44"/><circle cx="844.3" cy="623.8" r="1.4" fill="#44f044" opacity="0.38"/><circle cx="847.8" cy="627.2" r="1.1" fill="#44f044" opacity="0.35"/><circle cx="795.8" cy="569.4" r="1.4" fill="#44f044" opacity="0.48"/><circle cx="792.1" cy="571.3" r="1.1" fill="#44f044" opacity="0.45"/><circle cx="789.6" cy="572.6" r="1.3" fill="#44f044" opacity="0.43"/><circle cx="782.4" cy="573.7" r="1.3" fill="#44f044" opacity="0.37"/><circle cx="779.7" cy="575.9" r="1.0" fill="#44f044" opacity="0.35"/><circle cx="775.8" cy="576.3" r="1.5" fill="#44f044" opacity="0.33"/><circle cx="772.2" cy="578.0" r="1.1" fill="#44f044" opacity="0.29"/><circle cx="764.7" cy="579.6" r="0.9" fill="#44f044" opacity="0.23"/><circle cx="758.6" cy="582.6" r="0.9" fill="#44f044" opacity="0.18"/><circle cx="796.9" cy="572.4" r="1.0" fill="#44f044" opacity="0.72"/><circle cx="793.7" cy="574.7" r="1.1" fill="#44f044" opacity="0.66"/><circle cx="790.2" cy="576.0" r="1.0" fill="#44f044" opacity="0.59"/><circle cx="786.0" cy="580.1" r="1.0" fill="#44f044" opacity="0.52"/><circle cx="781.9" cy="582.1" r="1.3" fill="#44f044" opacity="0.44"/><circle cx="779.5" cy="584.1" r="1.2" fill="#44f044" opacity="0.39"/><circle cx="777.0" cy="586.2" r="1.5" fill="#44f044" opacity="0.35"/><circle cx="775.6" cy="587.4" r="1.3" fill="#44f044" opacity="0.31"/><circle cx="801.7" cy="575.6" r="1.2" fill="#44f044" opacity="0.72"/><circle cx="802.0" cy="583.1" r="1.0" fill="#44f044" opacity="0.68"/><circle cx="801.0" cy="587.9" r="0.9" fill="#44f044" opacity="0.65"/><circle cx="801.0" cy="591.4" r="0.9" fill="#44f044" opacity="0.62"/><circle cx="799.8" cy="595.1" r="1.1" fill="#44f044" opacity="0.60"/><circle cx="800.1" cy="596.8" r="0.9" fill="#44f044" opacity="0.59"/><circle cx="800.5" cy="600.4" r="1.4" fill="#44f044" opacity="0.56"/><circle cx="799.9" cy="609.4" r="1.2" fill="#44f044" opacity="0.52"/><circle cx="799.2" cy="613.1" r="1.1" fill="#44f044" opacity="0.49"/><circle cx="797.4" cy="621.1" r="1.4" fill="#44f044" opacity="0.44"/><circle cx="797.5" cy="626.2" r="1.0" fill="#44f044" opacity="0.41"/><circle cx="797.9" cy="630.0" r="1.1" fill="#44f044" opacity="0.39"/><circle cx="796.2" cy="641.8" r="1.3" fill="#44f044" opacity="0.32"/><circle cx="794.5" cy="649.5" r="1.1" fill="#44f044" opacity="0.27"/><circle cx="795.4" cy="653.5" r="0.9" fill="#44f044" opacity="0.24"/><circle cx="796.4" cy="566.1" r="1.1" fill="#44f044" opacity="0.74"/><circle cx="788.2" cy="565.1" r="1.3" fill="#44f044" opacity="0.63"/><circle cx="782.0" cy="563.6" r="1.4" fill="#44f044" opacity="0.53"/><circle cx="774.7" cy="560.5" r="0.9" fill="#44f044" opacity="0.44"/><circle cx="766.8" cy="560.0" r="1.1" fill="#44f044" opacity="0.31"/><circle cx="793.3" cy="552.1" r="1.4" fill="#44f044" opacity="0.58"/><circle cx="790.2" cy="548.1" r="1.1" fill="#44f044" opacity="0.53"/><circle cx="783.8" cy="538.7" r="1.3" fill="#44f044" opacity="0.38"/><circle cx="778.7" cy="529.1" r="0.9" fill="#44f044" opacity="0.26"/><circle cx="814.6" cy="570.4" r="1.4" fill="#44f044" opacity="0.63"/><circle cx="827.4" cy="570.8" r="1.1" fill="#44f044" opacity="0.51"/><circle cx="831.4" cy="572.9" r="1.5" fill="#44f044" opacity="0.47"/><circle cx="836.3" cy="572.9" r="1.0" fill="#44f044" opacity="0.42"/><circle cx="842.3" cy="573.2" r="1.2" fill="#44f044" opacity="0.36"/><circle cx="847.6" cy="574.6" r="1.5" fill="#44f044" opacity="0.32"/><circle cx="850.8" cy="575.6" r="1.5" fill="#44f044" opacity="0.28"/><circle cx="856.3" cy="575.7" r="1.2" fill="#44f044" opacity="0.24"/><circle cx="798.5" cy="562.7" r="1.5" fill="#44f044" opacity="0.84"/><circle cx="794.4" cy="560.5" r="1.3" fill="#44f044" opacity="0.80"/><circle cx="791.6" cy="557.0" r="1.3" fill="#44f044" opacity="0.78"/><circle cx="789.0" cy="553.3" r="1.2" fill="#44f044" opacity="0.74"/><circle cx="776.6" cy="542.2" r="1.4" fill="#44f044" opacity="0.61"/><circle cx="774.0" cy="539.1" r="1.3" fill="#44f044" opacity="0.58"/><circle cx="769.4" cy="535.0" r="1.0" fill="#44f044" opacity="0.54"/><circle cx="766.2" cy="532.0" r="1.4" fill="#44f044" opacity="0.50"/><circle cx="762.8" cy="528.2" r="1.5" fill="#44f044" opacity="0.47"/><circle cx="760.6" cy="526.0" r="1.0" fill="#44f044" opacity="0.44"/><circle cx="756.7" cy="521.7" r="1.2" fill="#44f044" opacity="0.40"/><circle cx="754.0" cy="520.1" r="1.1" fill="#44f044" opacity="0.37"/><circle cx="751.3" cy="516.9" r="1.3" fill="#44f044" opacity="0.35"/><circle cx="747.8" cy="515.1" r="1.3" fill="#44f044" opacity="0.31"/><circle cx="744.8" cy="512.0" r="1.1" fill="#44f044" opacity="0.28"/><circle cx="796.6" cy="570.1" r="0.9" fill="#44f044" opacity="0.48"/><circle cx="784.7" cy="574.1" r="1.0" fill="#44f044" opacity="0.42"/><circle cx="781.7" cy="574.6" r="1.2" fill="#44f044" opacity="0.41"/><circle cx="762.3" cy="581.1" r="1.4" fill="#44f044" opacity="0.30"/><circle cx="759.6" cy="582.5" r="1.2" fill="#44f044" opacity="0.29"/><circle cx="756.3" cy="582.4" r="1.4" fill="#44f044" opacity="0.26"/><circle cx="753.2" cy="584.8" r="1.1" fill="#44f044" opacity="0.25"/><circle cx="748.5" cy="585.1" r="1.1" fill="#44f044" opacity="0.23"/><circle cx="744.7" cy="586.1" r="1.5" fill="#44f044" opacity="0.20"/><circle cx="740.0" cy="588.4" r="1.1" fill="#44f044" opacity="0.18"/></g><g filter="url(#b1)"><circle cx="652" cy="471" r="1.3" fill="#50e8a0" opacity="0.45"/><circle cx="716" cy="516" r="1.3" fill="#50e8a0" opacity="0.38"/><circle cx="707" cy="447" r="1.3" fill="#50e8a0" opacity="0.63"/><circle cx="723" cy="507" r="1.3" fill="#50e8a0" opacity="0.51"/><circle cx="789" cy="566" r="1.3" fill="#50e8a0" opacity="0.31"/><circle cx="694" cy="556" r="1.3" fill="#50e8a0" opacity="0.35"/><circle cx="736" cy="504" r="1.3" fill="#50e8a0" opacity="0.32"/><circle cx="714" cy="539" r="1.3" fill="#50e8a0" opacity="0.33"/><circle cx="667" cy="476" r="1.3" fill="#50e8a0" opacity="0.66"/><circle cx="698" cy="452" r="1.3" fill="#50e8a0" opacity="0.41"/><circle cx="649" cy="554" r="1.3" fill="#50e8a0" opacity="0.47"/><circle cx="737" cy="498" r="1.3" fill="#50e8a0" opacity="0.66"/><circle cx="827" cy="522" r="1.3" fill="#50e8a0" opacity="0.60"/><circle cx="750" cy="450" r="1.3" fill="#50e8a0" opacity="0.37"/><circle cx="784" cy="556" r="1.3" fill="#50e8a0" opacity="0.76"/><circle cx="862" cy="564" r="1.3" fill="#50e8a0" opacity="0.40"/><circle cx="632" cy="506" r="1.3" fill="#50e8a0" opacity="0.75"/><circle cx="695" cy="523" r="1.3" fill="#50e8a0" opacity="0.65"/><circle cx="662" cy="560" r="1.3" fill="#50e8a0" opacity="0.59"/><circle cx="698" cy="467" r="1.3" fill="#50e8a0" opacity="0.56"/><circle cx="694" cy="464" r="1.3" fill="#50e8a0" opacity="0.50"/><circle cx="671" cy="506" r="1.3" fill="#50e8a0" opacity="0.67"/><circle cx="716" cy="462" r="1.3" fill="#50e8a0" opacity="0.72"/><circle cx="650" cy="549" r="1.3" fill="#50e8a0" opacity="0.58"/><circle cx="656" cy="526" r="1.3" fill="#50e8a0" opacity="0.48"/><circle cx="740" cy="572" r="1.3" fill="#50e8a0" opacity="0.60"/><circle cx="729" cy="490" r="1.3" fill="#50e8a0" opacity="0.61"/><circle cx="813" cy="507" r="1.3" fill="#50e8a0" opacity="0.66"/><circle cx="622" cy="482" r="1.3" fill="#50e8a0" opacity="0.49"/><circle cx="764" cy="560" r="1.3" fill="#50e8a0" opacity="0.68"/><circle cx="712" cy="525" r="1.3" fill="#50e8a0" opacity="0.48"/><circle cx="829" cy="513" r="1.3" fill="#50e8a0" opacity="0.78"/><circle cx="685" cy="544" r="1.3" fill="#50e8a0" opacity="0.55"/><circle cx="810" cy="554" r="1.3" fill="#50e8a0" opacity="0.47"/><circle cx="707" cy="522" r="1.3" fill="#50e8a0" opacity="0.66"/><circle cx="790" cy="469" r="1.3" fill="#50e8a0" opacity="0.45"/><circle cx="645" cy="478" r="1.3" fill="#50e8a0" opacity="0.56"/><circle cx="774" cy="503" r="1.3" fill="#50e8a0" opacity="0.68"/><circle cx="747" cy="462" r="1.3" fill="#50e8a0" opacity="0.37"/><circle cx="694" cy="480" r="1.3" fill="#50e8a0" opacity="0.36"/><circle cx="804" cy="538" r="1.3" fill="#50e8a0" opacity="0.50"/><circle cx="712" cy="554" r="1.3" fill="#50e8a0" opacity="0.68"/><circle cx="872" cy="547" r="1.3" fill="#50e8a0" opacity="0.60"/><circle cx="736" cy="543" r="1.3" fill="#50e8a0" opacity="0.76"/><circle cx="619" cy="469" r="1.3" fill="#50e8a0" opacity="0.80"/><circle cx="727" cy="467" r="1.3" fill="#50e8a0" opacity="0.68"/><circle cx="757" cy="476" r="1.3" fill="#50e8a0" opacity="0.38"/><circle cx="636" cy="516" r="1.3" fill="#50e8a0" opacity="0.73"/><circle cx="661" cy="458" r="1.3" fill="#50e8a0" opacity="0.49"/><circle cx="629" cy="477" r="1.3" fill="#50e8a0" opacity="0.65"/><circle cx="733" cy="573" r="1.3" fill="#50e8a0" opacity="0.57"/><circle cx="747" cy="538" r="1.3" fill="#50e8a0" opacity="0.32"/><circle cx="727" cy="551" r="1.3" fill="#50e8a0" opacity="0.64"/><circle cx="728" cy="458" r="1.3" fill="#50e8a0" opacity="0.33"/><circle cx="658" cy="543" r="1.3" fill="#50e8a0" opacity="0.61"/><circle cx="608" cy="441" r="1.3" fill="#50e8a0" opacity="0.44"/><circle cx="664" cy="484" r="1.3" fill="#50e8a0" opacity="0.73"/><circle cx="619" cy="451" r="1.3" fill="#50e8a0" opacity="0.43"/><circle cx="668" cy="541" r="1.3" fill="#50e8a0" opacity="0.51"/><circle cx="648" cy="493" r="1.3" fill="#50e8a0" opacity="0.31"/><circle cx="752" cy="444" r="1.3" fill="#50e8a0" opacity="0.61"/><circle cx="710" cy="510" r="1.3" fill="#50e8a0" opacity="0.79"/><circle cx="661" cy="476" r="1.3" fill="#50e8a0" opacity="0.46"/><circle cx="697" cy="476" r="1.3" fill="#50e8a0" opacity="0.50"/><circle cx="647" cy="551" r="1.3" fill="#50e8a0" opacity="0.44"/><circle cx="783" cy="470" r="1.3" fill="#50e8a0" opacity="0.32"/><circle cx="675" cy="489" r="1.3" fill="#50e8a0" opacity="0.78"/><circle cx="615" cy="515" r="1.3" fill="#50e8a0" opacity="0.58"/><circle cx="652" cy="548" r="1.3" fill="#50e8a0" opacity="0.49"/><circle cx="688" cy="474" r="1.3" fill="#50e8a0" opacity="0.71"/><circle cx="667" cy="560" r="1.3" fill="#50e8a0" opacity="0.77"/><circle cx="673" cy="549" r="1.3" fill="#50e8a0" opacity="0.63"/><circle cx="767" cy="551" r="1.3" fill="#50e8a0" opacity="0.32"/><circle cx="675" cy="533" r="1.3" fill="#50e8a0" opacity="0.36"/><circle cx="705" cy="451" r="1.3" fill="#50e8a0" opacity="0.70"/><circle cx="677" cy="521" r="1.3" fill="#50e8a0" opacity="0.32"/><circle cx="673" cy="552" r="1.3" fill="#50e8a0" opacity="0.63"/><circle cx="826" cy="531" r="1.3" fill="#50e8a0" opacity="0.58"/><circle cx="785" cy="549" r="1.3" fill="#50e8a0" opacity="0.49"/><circle cx="718" cy="489" r="1.3" fill="#50e8a0" opacity="0.63"/><circle cx="863" cy="549" r="1.3" fill="#50e8a0" opacity="0.71"/><circle cx="739" cy="494" r="1.3" fill="#50e8a0" opacity="0.41"/><circle cx="686" cy="477" r="1.3" fill="#50e8a0" opacity="0.63"/><circle cx="855" cy="569" r="1.3" fill="#50e8a0" opacity="0.56"/><circle cx="720" cy="572" r="1.3" fill="#50e8a0" opacity="0.47"/><circle cx="712" cy="550" r="1.3" fill="#50e8a0" opacity="0.42"/><circle cx="609" cy="442" r="1.3" fill="#50e8a0" opacity="0.70"/><circle cx="756" cy="577" r="1.3" fill="#50e8a0" opacity="0.63"/><circle cx="627" cy="455" r="1.3" fill="#50e8a0" opacity="0.60"/><circle cx="853" cy="564" r="1.3" fill="#50e8a0" opacity="0.47"/><circle cx="649" cy="551" r="1.3" fill="#50e8a0" opacity="0.54"/><circle cx="741" cy="587" r="1.3" fill="#50e8a0" opacity="0.31"/><circle cx="873" cy="552" r="1.3" fill="#50e8a0" opacity="0.66"/><circle cx="653" cy="441" r="1.3" fill="#50e8a0" opacity="0.76"/><circle cx="778" cy="483" r="1.3" fill="#50e8a0" opacity="0.31"/><circle cx="668" cy="449" r="1.3" fill="#50e8a0" opacity="0.46"/><circle cx="725" cy="547" r="1.3" fill="#50e8a0" opacity="0.62"/><circle cx="740" cy="583" r="1.3" fill="#50e8a0" opacity="0.37"/><circle cx="753" cy="459" r="1.3" fill="#50e8a0" opacity="0.35"/><circle cx="711" cy="517" r="1.3" fill="#50e8a0" opacity="0.62"/><circle cx="747" cy="551" r="1.3" fill="#50e8a0" opacity="0.36"/><circle cx="693" cy="477" r="1.3" fill="#50e8a0" opacity="0.37"/><circle cx="715" cy="460" r="1.3" fill="#50e8a0" opacity="0.36"/><circle cx="617" cy="439" r="1.3" fill="#50e8a0" opacity="0.30"/><circle cx="683" cy="548" r="1.3" fill="#50e8a0" opacity="0.36"/><circle cx="651" cy="562" r="1.3" fill="#50e8a0" opacity="0.48"/><circle cx="781" cy="504" r="1.3" fill="#50e8a0" opacity="0.31"/><circle cx="742" cy="506" r="1.3" fill="#50e8a0" opacity="0.70"/><circle cx="669" cy="534" r="1.3" fill="#50e8a0" opacity="0.54"/><circle cx="631" cy="524" r="1.3" fill="#50e8a0" opacity="0.31"/><circle cx="797" cy="485" r="1.3" fill="#50e8a0" opacity="0.74"/><circle cx="867" cy="573" r="1.3" fill="#50e8a0" opacity="0.31"/><circle cx="775" cy="547" r="1.3" fill="#50e8a0" opacity="0.75"/><circle cx="759" cy="484" r="1.3" fill="#50e8a0" opacity="0.71"/><circle cx="771" cy="547" r="1.3" fill="#50e8a0" opacity="0.79"/><circle cx="833" cy="561" r="1.3" fill="#50e8a0" opacity="0.49"/><circle cx="764" cy="465" r="1.3" fill="#50e8a0" opacity="0.63"/><circle cx="734" cy="528" r="1.3" fill="#50e8a0" opacity="0.32"/><circle cx="782" cy="553" r="1.3" fill="#50e8a0" opacity="0.48"/><circle cx="746" cy="577" r="1.3" fill="#50e8a0" opacity="0.67"/><circle cx="695" cy="453" r="1.3" fill="#50e8a0" opacity="0.66"/><circle cx="872" cy="541" r="1.3" fill="#50e8a0" opacity="0.43"/><circle cx="742" cy="547" r="1.3" fill="#50e8a0" opacity="0.51"/><circle cx="638" cy="465" r="1.3" fill="#50e8a0" opacity="0.72"/><circle cx="712" cy="523" r="1.3" fill="#50e8a0" opacity="0.42"/><circle cx="750" cy="454" r="1.3" fill="#50e8a0" opacity="0.69"/><circle cx="704" cy="512" r="1.3" fill="#50e8a0" opacity="0.77"/><circle cx="789" cy="479" r="1.3" fill="#50e8a0" opacity="0.31"/><circle cx="758" cy="539" r="1.3" fill="#50e8a0" opacity="0.40"/><circle cx="716" cy="489" r="1.3" fill="#50e8a0" opacity="0.56"/><circle cx="877" cy="549" r="1.3" fill="#50e8a0" opacity="0.64"/><circle cx="662" cy="441" r="1.3" fill="#50e8a0" opacity="0.75"/><circle cx="704" cy="447" r="1.3" fill="#50e8a0" opacity="0.34"/><circle cx="784" cy="545" r="1.3" fill="#50e8a0" opacity="0.57"/><circle cx="710" cy="473" r="1.3" fill="#50e8a0" opacity="0.75"/><circle cx="671" cy="472" r="1.3" fill="#50e8a0" opacity="0.74"/><circle cx="675" cy="518" r="1.3" fill="#50e8a0" opacity="0.62"/><circle cx="644" cy="526" r="1.3" fill="#50e8a0" opacity="0.54"/><circle cx="650" cy="483" r="1.3" fill="#50e8a0" opacity="0.70"/><circle cx="819" cy="517" r="1.3" fill="#50e8a0" opacity="0.39"/><circle cx="624" cy="452" r="1.3" fill="#50e8a0" opacity="0.68"/><circle cx="753" cy="505" r="1.3" fill="#50e8a0" opacity="0.79"/><circle cx="752" cy="470" r="1.3" fill="#50e8a0" opacity="0.32"/><circle cx="669" cy="440" r="1.3" fill="#50e8a0" opacity="0.37"/><circle cx="770" cy="555" r="1.3" fill="#50e8a0" opacity="0.59"/><circle cx="758" cy="490" r="1.3" fill="#50e8a0" opacity="0.38"/></g><g filter="url(#b1)"><circle cx="565.0" cy="578.0" r="1.5" fill="#3ef03e" opacity="0.49"/><circle cx="567.3" cy="582.0" r="1.5" fill="#3ef03e" opacity="0.49"/><circle cx="569.7" cy="586.0" r="1.5" fill="#3ef03e" opacity="0.74"/><circle cx="572.0" cy="590.0" r="1.5" fill="#3ef03e" opacity="0.50"/><circle cx="574.5" cy="592.8" r="1.5" fill="#3ef03e" opacity="0.62"/><circle cx="577.0" cy="595.5" r="1.5" fill="#3ef03e" opacity="0.50"/><circle cx="579.5" cy="598.2" r="1.5" fill="#3ef03e" opacity="0.61"/><circle cx="582.0" cy="601.0" r="1.5" fill="#3ef03e" opacity="0.84"/><circle cx="584.5" cy="604.2" r="1.5" fill="#3ef03e" opacity="0.63"/><circle cx="587.0" cy="607.5" r="1.5" fill="#3ef03e" opacity="0.74"/><circle cx="589.5" cy="610.8" r="1.5" fill="#3ef03e" opacity="0.77"/><circle cx="592.0" cy="614.0" r="1.5" fill="#3ef03e" opacity="0.56"/><circle cx="594.0" cy="617.5" r="1.5" fill="#3ef03e" opacity="0.65"/><circle cx="596.0" cy="621.0" r="1.5" fill="#3ef03e" opacity="0.83"/><circle cx="598.0" cy="624.5" r="1.5" fill="#3ef03e" opacity="0.57"/><circle cx="600.0" cy="628.0" r="1.5" fill="#3ef03e" opacity="0.73"/><circle cx="602.5" cy="631.0" r="1.5" fill="#3ef03e" opacity="0.73"/><circle cx="605.0" cy="634.0" r="1.5" fill="#3ef03e" opacity="0.93"/><circle cx="607.5" cy="637.0" r="1.5" fill="#3ef03e" opacity="0.84"/><circle cx="610.0" cy="640.0" r="1.5" fill="#3ef03e" opacity="0.73"/><circle cx="612.7" cy="643.3" r="1.5" fill="#3ef03e" opacity="0.86"/><circle cx="615.3" cy="646.7" r="1.5" fill="#3ef03e" opacity="0.70"/><circle cx="618.0" cy="650.0" r="1.5" fill="#3ef03e" opacity="0.53"/><circle cx="620.3" cy="653.0" r="1.5" fill="#3ef03e" opacity="0.79"/><circle cx="622.7" cy="656.0" r="1.5" fill="#3ef03e" opacity="0.88"/></g><ellipse cx="566" cy="582" rx="5" ry="8" fill="#1a8a1a" opacity="0.55" filter="url(#b2)"/><ellipse cx="625" cy="655" rx="4" ry="6" fill="#1a9a1a" opacity="0.6" filter="url(#b2)"/><g filter="url(#b1)"><circle cx="736" cy="555" r="2" fill="#ff3a8a" opacity="0.6"/><circle cx="668" cy="567" r="2" fill="#ff3a8a" opacity="0.6"/><circle cx="735" cy="569" r="2" fill="#ff3a8a" opacity="0.6"/><circle cx="766" cy="464" r="2" fill="#ff3a8a" opacity="0.6"/><circle cx="689" cy="447" r="2" fill="#ff3a8a" opacity="0.6"/><circle cx="706" cy="485" r="2" fill="#ff3a8a" opacity="0.6"/><circle cx="831" cy="518" r="2" fill="#ff3a8a" opacity="0.6"/><circle cx="687" cy="518" r="2" fill="#ff3a8a" opacity="0.6"/><circle cx="658" cy="472" r="2" fill="#ff3a8a" opacity="0.6"/><circle cx="746" cy="572" r="2" fill="#ff3a8a" opacity="0.6"/><circle cx="744" cy="531" r="2" fill="#ff3a8a" opacity="0.6"/><circle cx="848" cy="555" r="2" fill="#ff3a8a" opacity="0.6"/><circle cx="685" cy="467" r="2" fill="#ff3a8a" opacity="0.6"/><circle cx="654" cy="546" r="2" fill="#ff3a8a" opacity="0.6"/><circle cx="760" cy="469" r="2" fill="#ff3a8a" opacity="0.6"/><circle cx="703" cy="573" r="2" fill="#ff3a8a" opacity="0.6"/><circle cx="826" cy="525" r="2" fill="#ff3a8a" opacity="0.6"/><circle cx="799" cy="485" r="2" fill="#ff3a8a" opacity="0.6"/><circle cx="873" cy="554" r="2" fill="#ff3a8a" opacity="0.6"/><circle cx="731" cy="490" r="2" fill="#ff3a8a" opacity="0.6"/><circle cx="741" cy="487" r="2" fill="#ff3a8a" opacity="0.6"/><circle cx="664" cy="545" r="2" fill="#ff3a8a" opacity="0.6"/><circle cx="786" cy="497" r="2" fill="#ff3a8a" opacity="0.6"/></g><circle cx="657" cy="487" r="6.5" fill="#a0ff40" opacity="0.8" filter="url(#b2)"/><circle cx="657" cy="487" r="3" fill="#ff9a20" filter="url(#b1)"/><circle cx="803" cy="568" r="6.5" fill="#a0ff40" opacity="0.8" filter="url(#b2)"/><circle cx="803" cy="568" r="3" fill="#ff9a20" filter="url(#b1)"/></svg><svg width="30" height="90" viewBox="0 0 30 90" style="position:absolute;left:3px;top:5px">
<g fill="none" stroke="#fff" stroke-width="1.8"><circle cx="15" cy="14" r="9.2"/><circle cx="15" cy="44" r="9.2"/><circle cx="15" cy="74" r="9.2"/></g>
<path d="M15 8.5 V19.5 M9.5 14 H20.5" stroke="#fff" stroke-width="3"/>
<path d="M9.5 74 H20.5" stroke="#fff" stroke-width="3"/>
<text x="15" y="48" font-family="Liberation Sans" font-weight="bold" font-size="10" fill="#fff" text-anchor="middle" letter-spacing="-0.8">1:1</text>
</svg></div><!--/img-->
</body></html>
